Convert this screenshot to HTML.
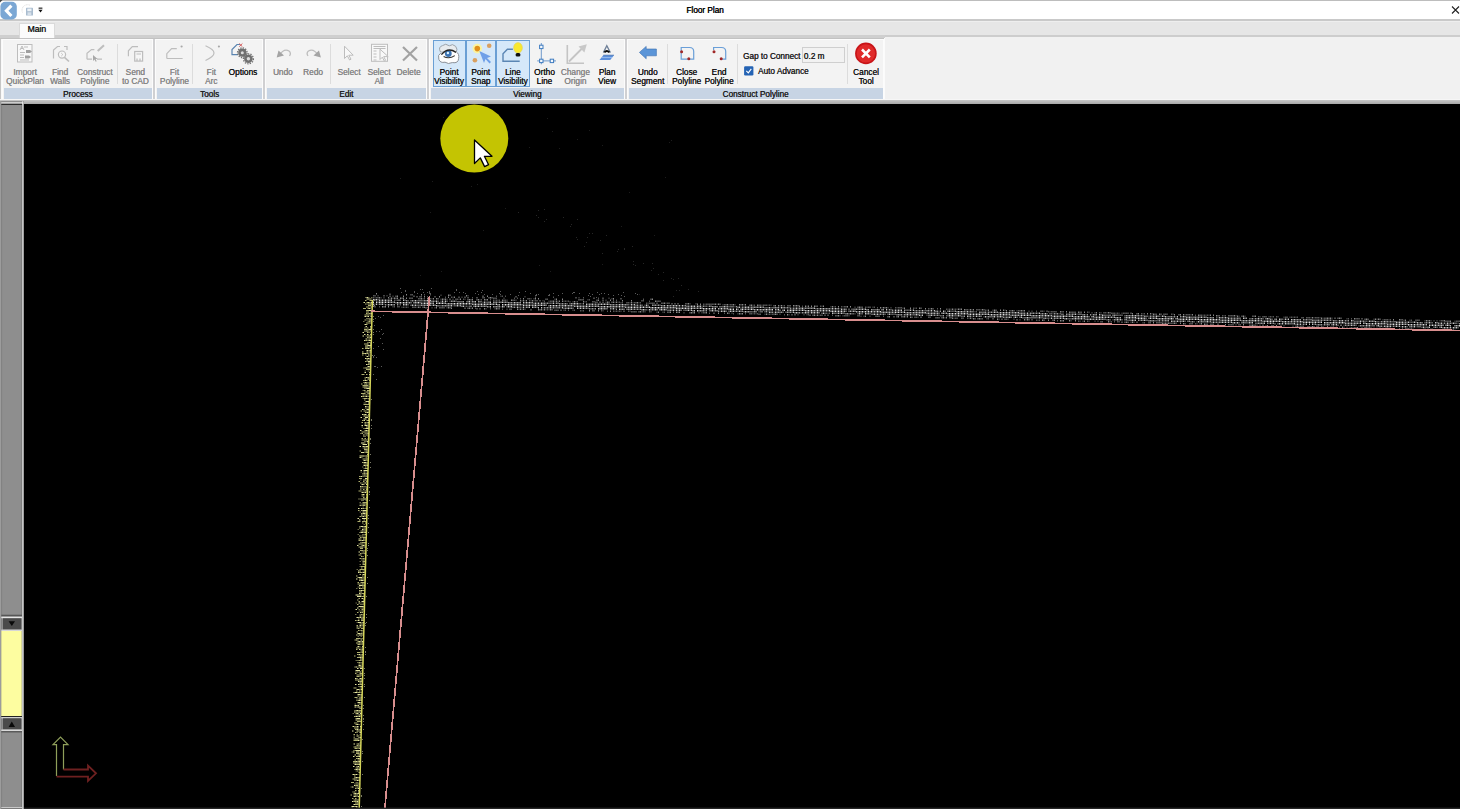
<!DOCTYPE html>
<html><head><meta charset="utf-8">
<style>
*{margin:0;padding:0;box-sizing:border-box}
html,body{width:1460px;height:809px;overflow:hidden;background:#000;font-family:"Liberation Sans",sans-serif}
.abs{position:absolute}
#title{position:absolute;left:0;top:0;width:1460px;height:19px;background:#fff;border-top:1px solid #bdbdbd}
#tline{position:absolute;left:0;top:19px;width:1460px;height:2px;background:#c9c9c9}
#tabs{position:absolute;left:0;top:21px;width:1460px;height:14px;background:#e6e6e6;border-top:1px solid #eeeeee}
#tabline{position:absolute;left:0;top:34.5px;width:885px;height:4px;background:#cfcfcf;border-bottom:0.6px solid #c2c2c2}
#tabline2{position:absolute;left:885px;top:34.8px;width:575px;height:2.2px;background:#cdcdcd}
#ribbon{position:absolute;left:0;top:37px;width:1460px;height:63px;background:#f1f1f1}
#rgray{position:absolute;left:2.5px;top:38px;width:881.5px;height:61px;background:#d0d0d2}
#wleft{position:absolute;left:0;top:35px;width:2.5px;height:66px;background:#f8f8f8;border-left:1px solid #c6c6c6}
#rbot{position:absolute;left:0;top:99px;width:1460px;height:5.2px;background:linear-gradient(#c8c8c8,#a8a8a8);border-top:1.6px solid #f6f6f6}
.grp{position:absolute;top:38.5px;height:60.5px;background:#f3f3f3;border:1px solid #fcfcfc;border-bottom:none}
.band{position:absolute;top:88px;height:10.5px;background:#c7d4e4;text-align:center;font-size:8.2px;line-height:13px;color:#1e1e1e;text-shadow:0.35px 0 0 #1e1e1e;white-space:nowrap}
.sep{position:absolute;top:44px;width:1px;height:40px;background:#dcdcdc}
.hl{position:absolute;top:39.9px;height:47.4px;background:#d5e8f9;border:1.5px solid #6a9fd4}
.lb{position:absolute;width:80px;text-align:center;white-space:nowrap;line-height:10px;text-shadow:0.25px 0 0 currentColor}
.ico{position:absolute;left:0;top:0}
#canvas{position:absolute;left:0;top:104px;width:1460px;height:705px;background:#000}
</style></head><body>
<div id="title"></div>
<div id="tline"></div>
<div id="tabs"></div>
<div id="ribbon"></div>
<div id="rgray"></div>
<div id="wleft"></div>
<div id="tabline"></div>
<div id="tabline2"></div>
<div id="rbot"></div>
<div class="abs" style="left:884px;top:38px;width:1px;height:61px;background:#fbfbfb"></div>
<div id="canvas"></div>
<div class="grp" style="left:2.0px;width:150.5px"></div>
<div class="band" style="left:4.0px;width:147.5px"><span>Process</span></div>
<div class="grp" style="left:155.0px;width:108.0px"></div>
<div class="band" style="left:157.0px;width:105.0px"><span>Tools</span></div>
<div class="grp" style="left:265.0px;width:161.5px"></div>
<div class="band" style="left:267.0px;width:158.5px"><span>Edit</span></div>
<div class="grp" style="left:428.5px;width:196.5px"></div>
<div class="band" style="left:430.5px;width:193.5px"><span>Viewing</span></div>
<div class="grp" style="left:626.5px;width:257.0px"></div>
<div class="band" style="left:628.5px;width:254.0px"><span>Construct Polyline</span></div>
<div class="sep" style="left:116.5px"></div>
<div class="sep" style="left:192.0px"></div>
<div class="sep" style="left:329.5px"></div>
<div class="sep" style="left:666.8px"></div>
<div class="sep" style="left:736.9px"></div>
<div class="sep" style="left:846.9px"></div>
<div class="hl" style="left:432.5px;width:33.0px"></div>
<div class="hl" style="left:465.5px;width:30.5px"></div>
<div class="hl" style="left:496.0px;width:33.5px"></div>
<div class="lb" style="left:-15.0px;top:66.9px;color:#868686;font-size:8.3px">Import</div>
<div class="lb" style="left:-15.0px;top:76.4px;color:#868686;font-size:8.3px">QuickPlan</div>
<div class="lb" style="left:20.0px;top:66.9px;color:#868686;font-size:8.3px">Find</div>
<div class="lb" style="left:20.0px;top:76.4px;color:#868686;font-size:8.3px">Walls</div>
<div class="lb" style="left:54.8px;top:66.9px;color:#868686;font-size:8.3px">Construct</div>
<div class="lb" style="left:54.8px;top:76.4px;color:#868686;font-size:8.3px">Polyline</div>
<div class="lb" style="left:95.3px;top:66.9px;color:#868686;font-size:8.3px">Send</div>
<div class="lb" style="left:95.3px;top:76.4px;color:#868686;font-size:8.3px">to CAD</div>
<div class="lb" style="left:134.4px;top:66.9px;color:#868686;font-size:8.3px">Fit</div>
<div class="lb" style="left:134.4px;top:76.4px;color:#868686;font-size:8.3px">Polyline</div>
<div class="lb" style="left:171.2px;top:66.9px;color:#868686;font-size:8.3px">Fit</div>
<div class="lb" style="left:171.2px;top:76.4px;color:#868686;font-size:8.3px">Arc</div>
<div class="lb" style="left:202.9px;top:66.9px;color:#141414;font-size:8.3px">Options</div>
<div class="lb" style="left:242.8px;top:66.9px;color:#868686;font-size:8.3px">Undo</div>
<div class="lb" style="left:273.0px;top:66.9px;color:#868686;font-size:8.3px">Redo</div>
<div class="lb" style="left:309.0px;top:66.9px;color:#868686;font-size:8.3px">Select</div>
<div class="lb" style="left:339.0px;top:66.9px;color:#868686;font-size:8.3px">Select</div>
<div class="lb" style="left:339.0px;top:76.4px;color:#868686;font-size:8.3px">All</div>
<div class="lb" style="left:368.6px;top:66.9px;color:#868686;font-size:8.3px">Delete</div>
<div class="lb" style="left:409.0px;top:66.9px;color:#141414;font-size:8.3px">Point</div>
<div class="lb" style="left:409.0px;top:76.4px;color:#141414;font-size:8.3px">Visibility</div>
<div class="lb" style="left:440.7px;top:66.9px;color:#141414;font-size:8.3px">Point</div>
<div class="lb" style="left:440.7px;top:76.4px;color:#141414;font-size:8.3px">Snap</div>
<div class="lb" style="left:472.8px;top:66.9px;color:#141414;font-size:8.3px">Line</div>
<div class="lb" style="left:472.8px;top:76.4px;color:#141414;font-size:8.3px">Visibility</div>
<div class="lb" style="left:504.4px;top:66.9px;color:#141414;font-size:8.3px">Ortho</div>
<div class="lb" style="left:504.4px;top:76.4px;color:#141414;font-size:8.3px">Line</div>
<div class="lb" style="left:535.3px;top:66.9px;color:#868686;font-size:8.3px">Change</div>
<div class="lb" style="left:535.3px;top:76.4px;color:#868686;font-size:8.3px">Origin</div>
<div class="lb" style="left:567.0px;top:66.9px;color:#141414;font-size:8.3px">Plan</div>
<div class="lb" style="left:567.0px;top:76.4px;color:#141414;font-size:8.3px">View</div>
<div class="lb" style="left:607.7px;top:66.9px;color:#141414;font-size:8.3px">Undo</div>
<div class="lb" style="left:607.7px;top:76.4px;color:#141414;font-size:8.3px">Segment</div>
<div class="lb" style="left:646.6px;top:66.9px;color:#141414;font-size:8.3px">Close</div>
<div class="lb" style="left:646.6px;top:76.4px;color:#141414;font-size:8.3px">Polyline</div>
<div class="lb" style="left:679.0px;top:66.9px;color:#141414;font-size:8.3px">End</div>
<div class="lb" style="left:679.0px;top:76.4px;color:#141414;font-size:8.3px">Polyline</div>
<div class="lb" style="left:826.0px;top:66.9px;color:#141414;font-size:8.3px">Cancel</div>
<div class="lb" style="left:826.0px;top:76.4px;color:#141414;font-size:8.3px">Tool</div>

<svg class="ico" width="1460" height="104" viewBox="0 0 1460 104">
 <!-- Import QuickPlan -->
 <g fill="none" stroke="#bdbdbd" stroke-width="1">
  <rect x="17.5" y="44.5" width="14.5" height="17.5" fill="#f8f8f8"/>
  <path d="M20 50 l2 -4 l2 4 M21 48.5h2 M24 47h4 M20 52.5h5 M20 55h4 M20 57.5h4 M20 60h9"/>
 </g>
 <path d="M26 50h4l2 1.5l-2 1.5h-4z M25 55.5h4l2 1.5l-2 1.5h-4z" fill="#a0a0a0"/>
 <!-- Find Walls -->
 <g fill="none" stroke="#bdbdbd" stroke-width="1.2">
  <path d="M53.5 58.5 V50 L57.5 46.5 H60 M64 46.5 H67 V50"/>
  <circle cx="62" cy="54.6" r="3.6" fill="#f6f6f6"/>
  <path d="M64.5 57.3 L69 61.5" stroke-width="1.6"/>
  <path d="M61.2 53 l1.6 1.6 l-1.6 1.6" stroke-width="0.9"/>
 </g>
 <!-- Construct Polyline -->
 <g fill="none" stroke="#bdbdbd" stroke-width="1.2">
  <path d="M87 59.2 V53.4 L91.5 49.6 H94.4 M87 59.2 H92 M97 59.2 H102"/>
  <path d="M97.7 51 L104 45.3" stroke-width="2"/>
 </g>
 <path d="M93 55 v6 l1.5-1.5 l1.2 2.2 l1-.5 l-1.1-2.1 h2z" fill="#a8a8a8"/>
 <!-- Send to CAD -->
 <g fill="none" stroke="#bdbdbd" stroke-width="1.2">
  <path d="M128.4 56.3 V50.8 L132.3 46.7 H138"/>
  <rect x="134.7" y="51.5" width="7.9" height="9.6" fill="#f6f6f6"/>
  <path d="M136.5 54h4.5 M137 58.5v2.6 M140 58.5v2.6"/>
 </g>
 <!-- Fit Polyline -->
 <g fill="none" stroke="#bdbdbd" stroke-width="1.2">
  <path d="M166.8 58.5 V53.7 L171.6 48.6 H176.8 M166.8 58.5 H182.6"/>
 </g>
 <circle cx="181.6" cy="46.5" r="1.1" fill="#a8a8a8"/>
 <!-- Fit Arc -->
 <path d="M205.5 45.8 Q222.5 53 205.5 60.5" fill="none" stroke="#bdbdbd" stroke-width="1.2"/>
 <circle cx="218.9" cy="46.5" r="1.1" fill="#a8a8a8"/>
 <!-- Options -->
 <path d="M238 54.7 H232 V49.6 L237 44.5 H240" fill="none" stroke="#5a84b0" stroke-width="1.2"/>
 <path d="M239.2 43.5 l3.2 3.2 M242.4 43.5 l-3.2 3.2" stroke="#d05050" stroke-width="0.9"/>
 <g fill="#707070">
  <circle cx="242.3" cy="52.7" r="4.1"/>
  <circle cx="248.4" cy="58.8" r="4.3"/>
 </g>
 <g stroke="#707070" stroke-width="1.3" stroke-dasharray="1.3 1.2" fill="none">
  <circle cx="242.3" cy="52.7" r="4.8"/>
  <circle cx="248.4" cy="58.8" r="5"/>
 </g>
 <circle cx="242.3" cy="52.7" r="1.5" fill="#dcdcdc"/>
 <circle cx="248.4" cy="58.8" r="1.7" fill="#dcdcdc"/>
 <!-- Undo / Redo -->
 <g fill="none" stroke="#bdbdbd" stroke-width="1.3">
  <path d="M279 55.5 Q284 48 289 51 Q291.5 53 289.5 56"/>
  <path d="M318.5 55.5 Q313.5 48 308.5 51 Q306 53 308 56"/>
 </g>
 <path d="M276.7 57.5 L278.5 50.5 L284 55.5z" fill="#a4a4a4"/>
 <path d="M320.9 57.5 L319 50.5 L313.5 55.5z" fill="#a4a4a4"/>
 <!-- Select -->
 <path d="M344.5 46.2 V58.5 L347.3 55.8 L349.6 60 L351 59.2 L348.8 55.2 H353.2z" fill="#f8f8f8" stroke="#bdbdbd" stroke-width="1"/>
 <!-- Select All -->
 <g fill="none" stroke="#bdbdbd" stroke-width="1">
  <rect x="371.5" y="44.3" width="16" height="17" fill="#f8f8f8"/>
  <path d="M373.5 46.5h12 M373.5 48.5h12 M373.5 51h3 M373.5 54h3 M373.5 57h3 M373.5 60h3"/>
  <path d="M380 49.2 V59.5 L382.3 57.2 L384.3 61 L385.6 60.3 L383.7 56.6 H388.2z" fill="#f8f8f8"/>
 </g>
 <!-- Delete -->
 <path d="M403 47 L417 60.5 M417 47 L403 60.5" stroke="#a2a2a2" stroke-width="2.2"/>
 <!-- Point Visibility -->
 <path d="M440.5 52 Q437.8 47 442.5 45.6 Q445.5 42.8 449.3 45.8 Q452.5 43.2 455.6 46.3 Q458 49 456.2 52.5z" fill="#e8ebee" stroke="#9aa2aa" stroke-width="1"/>
 <path d="M441.2 52.6 Q437.2 55 438.8 59.3 Q440.2 63.3 445 62.2 Q448.3 64.6 452.3 62.6 Q458.3 63.6 458.6 58.6 Q459.6 54 456.3 51.8" fill="#fdfdfd" stroke="#8a9098" stroke-width="1"/>
 <circle cx="448.3" cy="53.6" r="3.4" fill="#3a72b2"/>
 <circle cx="447.9" cy="53" r="1.2" fill="#dff4ff"/>
 <path d="M441.4 54.6 Q448 46.8 456 52.4" fill="none" stroke="#222" stroke-width="1.4"/>
 <path d="M443.6 56.4 Q449 59.4 454.8 55.6" fill="none" stroke="#333" stroke-width="1.1"/>
 <!-- Point Snap -->
 <circle cx="477.3" cy="48.6" r="4.8" fill="#fbf3a0"/>
 <circle cx="477.3" cy="48.6" r="2.8" fill="#e0901c"/>
 <circle cx="489.2" cy="45.8" r="2.3" fill="#d9a060"/>
 <circle cx="474.9" cy="60.2" r="2.3" fill="#d9a060"/>
 <path d="M479.3 51 L484 63 L485.5 59 L489.5 63.5 L491 62 L487 58 L491 56.5z" fill="#6fa0e8"/>
 <!-- Line Visibility -->
 <path d="M512.9 49.2 H507.4 L503 53.7 V61.2 H519.7" fill="none" stroke="#5a86b4" stroke-width="1.4"/>
 <ellipse cx="518" cy="47.8" rx="4.4" ry="5.2" fill="#f8e830" stroke="#e0d060" stroke-width="0.6"/>
 <rect x="515.6" y="53" width="4.8" height="3.4" rx="1.5" fill="#111"/>
 <!-- Ortho Line -->
 <path d="M541.3 43 V64.3 M537.2 60.9 H556" stroke="#5f8fc6" stroke-width="0.9" fill="none"/>
 <g fill="#f4f8fc" stroke="#3f7cc0" stroke-width="1">
  <rect x="539.6" y="45.2" width="3.4" height="3.4"/>
  <rect x="539.6" y="59.2" width="3.4" height="3.4"/>
  <rect x="550.2" y="59.2" width="3.4" height="3.4"/>
 </g>
 <!-- Change Origin -->
 <path d="M567.3 45 V63.2 H584" fill="none" stroke="#c4c4c4" stroke-width="1.6"/>
 <path d="M569 61.5 L582 48.5" stroke="#c4c4c4" stroke-width="1.8"/>
 <path d="M586.8 44.2 L578.5 46.6 L584.4 52.5z" fill="#c8c8c8"/>
 <!-- Plan View -->
 <path d="M603.4 52.6 L606.8 45.7 L610.4 52.6" fill="none" stroke="#6f8098" stroke-width="1.3"/>
 <path d="M604.4 52.4 Q606.8 49.6 609.4 52.4" fill="none" stroke="#0c0c0c" stroke-width="1.8"/>
 <path d="M599.5 59.9 L603.3 55.2 H614 L610.2 59.9z" fill="#5b8fdc"/>
 <path d="M601.6 57.5 H612" stroke="#a8c8f0" stroke-width="0.7"/>
 <path d="M603.3 55.2 H614" stroke="#3a66a8" stroke-width="0.7"/>
 <!-- Undo Segment -->
 <path d="M639.4 52.4 L646.2 46.4 V49 H656.4 V55.8 H646.2 V58.8z" fill="#5b95d8" stroke="#3a6fb0" stroke-width="0.6"/>
 <!-- Close Polyline -->
 <path d="M681.2 47.5 H689.5 Q693.7 47.5 693.7 51.5 V59.2 H681.2z" fill="none" stroke="#6a9fd8" stroke-width="1.2"/>
 <circle cx="681.6" cy="51.7" r="1.5" fill="#a02828"/>
 <circle cx="688.8" cy="58.8" r="1.5" fill="#a02828"/>
 <!-- End Polyline -->
 <path d="M713.6 50 V47.5 H721.5 Q725.7 47.5 725.7 51.5 V59.2 H722" fill="none" stroke="#6a9fd8" stroke-width="1.2"/>
 <circle cx="714" cy="51.7" r="1.5" fill="#a02828"/>
 <circle cx="721.2" cy="58.8" r="1.5" fill="#a02828"/>
 <!-- Checkbox -->
 <rect x="744.1" y="66.2" width="9.3" height="9.2" rx="1.2" fill="#2463b4"/>
 <path d="M746.3 70.8 L748.3 72.8 L751.3 68.8" fill="none" stroke="#fff" stroke-width="1.1"/>
 <!-- Cancel -->
 <circle cx="865.9" cy="53.4" r="10.8" fill="#c81418"/>
 <circle cx="865.9" cy="53.4" r="9.2" fill="#e02a2a"/>
 <path d="M862 49.5 L869.8 57.3 M869.8 49.5 L862 57.3" stroke="#fff" stroke-width="2.6"/>
</svg>


<svg class="ico" width="1460" height="809" viewBox="0 0 1460 809" style="left:0;top:0">
<defs><clipPath id="cv"><rect x="24" y="104" width="1436" height="705"/></clipPath></defs>
<g clip-path="url(#cv)">
<path fill="#555555" d="M373 295h1v1.5h-1zM373 297h1v1.5h-1zM374.5 297h1v1.5h-1zM376 297h1v1.5h-1zM377.5 295h1v1.5h-1zM379 306h1v1.5h-1zM380.5 297h1v1.5h-1zM383.5 297h1v1.5h-1zM386.5 295h1v1.5h-1zM389.5 297.5h1v1.5h-1zM392.5 295.5h1v1.5h-1zM392.5 297.5h1v1.5h-1zM392.5 306h1v1.5h-1zM394 306h1v1.5h-1zM397 306h1v1.5h-1zM401.5 306.5h1v1.5h-1zM403 306.5h1v1.5h-1zM404.5 306.5h1v1.5h-1zM406 306.5h1v1.5h-1zM407.5 306.5h1v1.5h-1zM409 297.5h1v1.5h-1zM412 294h1v1.5h-1zM412 297.5h1v1.5h-1zM412 306.5h1v1.5h-1zM415 306.5h1v1.5h-1zM416.5 306.5h1v1.5h-1zM418 298h1v1.5h-1zM421 296h1v1.5h-1zM422.5 298h1v1.5h-1zM424 294h1v1.5h-1zM424 298h1v1.5h-1zM427 296h1v1.5h-1zM427 307h1v1.5h-1zM430 294h1v1.5h-1zM430 298h1v1.5h-1zM431.5 298h1v1.5h-1zM431.5 307h1v1.5h-1zM434.5 307h1v1.5h-1zM439 307h1v1.5h-1zM440.5 294.5h1v1.5h-1zM440.5 298.5h1v1.5h-1zM442 307h1v1.5h-1zM445 296.5h1v1.5h-1zM446.5 298.5h1v1.5h-1zM446.5 307h1v1.5h-1zM451 296.5h1v1.5h-1zM452.5 296.5h1v1.5h-1zM452.5 298.5h1v1.5h-1zM457 298.5h1v1.5h-1zM458.5 298.5h1v1.5h-1zM461.5 296.5h1v1.5h-1zM463 298.5h1v1.5h-1zM464.5 298.5h1v1.5h-1zM467.5 295h1v1.5h-1zM470.5 307.5h1v1.5h-1zM472 297h1v1.5h-1zM475 307.5h1v1.5h-1zM479.5 299h1v1.5h-1zM481 299h1v1.5h-1zM484 297h1v1.5h-1zM485.5 308h1v1.5h-1zM490 299h1v1.5h-1zM490 308h1v1.5h-1zM493 297.5h1v1.5h-1zM493 299.5h1v1.5h-1zM494.5 299.5h1v1.5h-1zM494.5 308h1v1.5h-1zM496 295.5h1v1.5h-1zM496 297.5h1v1.5h-1zM496 299.5h1v1.5h-1zM497.5 299.5h1v1.5h-1zM499 299.5h1v1.5h-1zM499 308h1v1.5h-1zM500.5 295.5h1v1.5h-1zM502 295.5h1v1.5h-1zM502 308.5h1v1.5h-1zM503.5 297.5h1v1.5h-1zM505 295.5h1v1.5h-1zM505 299.5h1v1.5h-1zM506.5 299.5h1v1.5h-1zM506.5 308.5h1v1.5h-1zM511 308.5h1v1.5h-1zM514 297.5h1v1.5h-1zM514 299.5h1v1.5h-1zM515.5 299.5h1v1.5h-1zM517 297.5h1v1.5h-1zM518.5 308.5h1v1.5h-1zM520 298h1v1.5h-1zM521.5 300h1v1.5h-1zM521.5 308.5h1v1.5h-1zM524.5 296h1v1.5h-1zM524.5 300h1v1.5h-1zM524.5 308.5h1v1.5h-1zM529 298h1v1.5h-1zM529 300h1v1.5h-1zM530.5 298h1v1.5h-1zM530.5 300h1v1.5h-1zM533.5 298h1v1.5h-1zM533.5 300h1v1.5h-1zM535 296.5h1v1.5h-1zM535 300h1v1.5h-1zM542.5 300h1v1.5h-1zM542.5 309h1v1.5h-1zM544 300.5h1v1.5h-1zM545.5 309h1v1.5h-1zM547 298.5h1v1.5h-1zM547 309h1v1.5h-1zM548.5 300.5h1v1.5h-1zM548.5 309h1v1.5h-1zM550 300.5h1v1.5h-1zM553 296.5h1v1.5h-1zM554.5 298.5h1v1.5h-1zM554.5 300.5h1v1.5h-1zM556 309.5h1v1.5h-1zM557.5 300.5h1v1.5h-1zM563.5 300.5h1v1.5h-1zM563.5 309.5h1v1.5h-1zM565 300.5h1v1.5h-1zM565 309.5h1v1.5h-1zM566.5 300.5h1v1.5h-1zM568 300.5h1v1.5h-1zM568 309.5h1v1.5h-1zM569.5 301h1v1.5h-1zM572.5 301h1v1.5h-1zM572.5 309.5h1v1.5h-1zM574 309.5h1v1.5h-1zM575.5 301h1v1.5h-1zM577 301h1v1.5h-1zM578.5 297h1v1.5h-1zM580 299h1v1.5h-1zM580 310h1v1.5h-1zM581.5 310h1v1.5h-1zM583 297h1v1.5h-1zM583 299h1v1.5h-1zM583 310h1v1.5h-1zM584.5 301h1v1.5h-1zM586 301h1v1.5h-1zM587.5 299h1v1.5h-1zM589 299h1v1.5h-1zM592 301h1v1.5h-1zM592 310h1v1.5h-1zM595 301.5h1v1.5h-1zM598 297.5h1v1.5h-1zM601 310h1v1.5h-1zM602.5 310h1v1.5h-1zM605.5 299.5h1v1.5h-1zM605.5 301.5h1v1.5h-1zM607 310.5h1v1.5h-1zM608.5 297.5h1v1.5h-1zM611.5 298h1v1.5h-1zM613 299.5h1v1.5h-1zM613 310.5h1v1.5h-1zM614.5 301.5h1v1.5h-1zM614.5 310.5h1v1.5h-1zM616 299.5h1v1.5h-1zM616 310.5h1v1.5h-1zM617.5 301.5h1v1.5h-1zM617.5 310.5h1v1.5h-1zM619 301.5h1v1.5h-1zM619 310.5h1v1.5h-1zM620.5 302h1v1.5h-1zM620.5 310.5h1v1.5h-1zM622 302h1v1.5h-1zM628 302h1v1.5h-1zM628 310.5h1v1.5h-1zM629.5 302h1v1.5h-1zM629.5 310.5h1v1.5h-1zM631 311h1v1.5h-1zM632.5 302h1v1.5h-1zM634 302h1v1.5h-1zM634 311h1v1.5h-1zM638.5 302h1v1.5h-1zM640 302h1v1.5h-1zM641.5 311h1v1.5h-1zM643 298.5h1v1.5h-1zM643 300h1v1.5h-1zM643 311h1v1.5h-1zM644.5 311h1v1.5h-1zM646 302.5h1v1.5h-1zM647.5 302.5h1v1.5h-1zM649 300.5h1v1.5h-1zM649 302.5h1v1.5h-1zM649 311h1v1.5h-1zM650.5 311h1v1.5h-1zM652 302.5h1v1.5h-1zM656.5 311.5h1v1.5h-1zM658 300.5h1v1.5h-1zM661 302.5h1v1.5h-1zM662.5 311.5h1v1.5h-1zM664 311.5h1v1.5h-1zM665.5 302.5h1v1.5h-1zM667 302.5h1v1.5h-1zM667 311.5h1v1.5h-1zM673 311.5h1v1.5h-1zM683.5 312h1v1.5h-1zM685 303h1v1.5h-1zM689.5 303h1v1.5h-1zM695.5 303h1v1.5h-1zM698.5 312h1v1.5h-1zM701.5 312h1v1.5h-1zM703 303.5h1v1.5h-1zM703 312h1v1.5h-1zM704.5 303.5h1v1.5h-1zM706 303.5h1v1.5h-1zM709 303.5h1v1.5h-1zM709 312.5h1v1.5h-1zM712 303.5h1v1.5h-1zM716.5 303.5h1v1.5h-1zM722.5 304h1v1.5h-1zM724 304h1v1.5h-1zM724 312.5h1v1.5h-1zM728.5 304h1v1.5h-1zM730 304h1v1.5h-1zM731.5 312.5h1v1.5h-1zM733 313h1v1.5h-1zM734.5 304h1v1.5h-1zM737.5 313h1v1.5h-1zM743.5 304h1v1.5h-1zM745 313h1v1.5h-1zM751 313h1v1.5h-1zM752.5 304.5h1v1.5h-1zM752.5 313h1v1.5h-1zM754 304.5h1v1.5h-1zM754 313h1v1.5h-1zM755.5 313h1v1.5h-1zM757 313h1v1.5h-1zM760 304.5h1v1.5h-1zM760 313.5h1v1.5h-1zM761.5 304.5h1v1.5h-1zM763 304.5h1v1.5h-1zM764.5 313.5h1v1.5h-1zM766 304.5h1v1.5h-1zM767.5 304.5h1v1.5h-1zM767.5 313.5h1v1.5h-1zM769 304.5h1v1.5h-1zM769 313.5h1v1.5h-1zM770.5 304.5h1v1.5h-1zM770.5 313.5h1v1.5h-1zM772 313.5h1v1.5h-1zM779.5 305h1v1.5h-1zM779.5 313.5h1v1.5h-1zM782.5 305h1v1.5h-1zM784 305h1v1.5h-1zM784 314h1v1.5h-1zM787 305h1v1.5h-1zM788.5 314h1v1.5h-1zM790 305h1v1.5h-1zM797.5 314h1v1.5h-1zM802 305.5h1v1.5h-1zM803.5 314h1v1.5h-1zM806.5 305.5h1v1.5h-1zM806.5 314h1v1.5h-1zM808 314h1v1.5h-1zM815.5 314.5h1v1.5h-1zM817 305.5h1v1.5h-1zM818.5 314.5h1v1.5h-1zM820 305.5h1v1.5h-1zM820 314.5h1v1.5h-1zM821.5 305.5h1v1.5h-1zM830.5 306h1v1.5h-1zM832 314.5h1v1.5h-1zM833.5 306h1v1.5h-1zM835 306h1v1.5h-1zM835 315h1v1.5h-1zM839.5 315h1v1.5h-1zM841 306h1v1.5h-1zM842.5 306h1v1.5h-1zM842.5 315h1v1.5h-1zM844 306h1v1.5h-1zM844 315h1v1.5h-1zM847 315h1v1.5h-1zM848.5 315h1v1.5h-1zM854.5 306.5h1v1.5h-1zM859 315h1v1.5h-1zM860.5 315.5h1v1.5h-1zM862 306.5h1v1.5h-1zM863.5 315.5h1v1.5h-1zM865 306.5h1v1.5h-1zM866.5 306.5h1v1.5h-1zM868 306.5h1v1.5h-1zM869.5 315.5h1v1.5h-1zM872.5 306.5h1v1.5h-1zM874 306.5h1v1.5h-1zM877 307h1v1.5h-1zM877 315.5h1v1.5h-1zM881.5 307h1v1.5h-1zM883 315.5h1v1.5h-1zM887.5 307h1v1.5h-1zM890.5 307h1v1.5h-1zM895 307h1v1.5h-1zM896.5 307h1v1.5h-1zM898 307h1v1.5h-1zM901 307h1v1.5h-1zM901 316h1v1.5h-1zM902.5 307.5h1v1.5h-1zM905.5 316h1v1.5h-1zM913 307.5h1v1.5h-1zM914.5 307.5h1v1.5h-1zM916 307.5h1v1.5h-1zM916 316.5h1v1.5h-1zM917.5 316.5h1v1.5h-1zM928 308h1v1.5h-1zM928 316.5h1v1.5h-1zM929.5 308h1v1.5h-1zM937 308h1v1.5h-1zM937 317h1v1.5h-1zM944.5 317h1v1.5h-1zM946 308.5h1v1.5h-1zM947.5 308.5h1v1.5h-1zM949 308.5h1v1.5h-1zM949 317h1v1.5h-1zM950.5 308.5h1v1.5h-1zM953.5 308.5h1v1.5h-1zM953.5 317.5h1v1.5h-1zM955 308.5h1v1.5h-1zM955 317.5h1v1.5h-1zM956.5 308.5h1v1.5h-1zM961 317.5h1v1.5h-1zM967 309h1v1.5h-1zM967 317.5h1v1.5h-1zM968.5 309h1v1.5h-1zM968.5 317.5h1v1.5h-1zM971.5 309h1v1.5h-1zM971.5 317.5h1v1.5h-1zM976 309h1v1.5h-1zM979 309h1v1.5h-1zM980.5 309h1v1.5h-1zM982 318h1v1.5h-1zM985 309.5h1v1.5h-1zM986.5 309.5h1v1.5h-1zM986.5 318h1v1.5h-1zM988 318h1v1.5h-1zM992.5 309.5h1v1.5h-1zM998.5 318.5h1v1.5h-1zM1004.5 309.5h1v1.5h-1zM1006 318.5h1v1.5h-1zM1007.5 318.5h1v1.5h-1zM1009 310h1v1.5h-1zM1013.5 318.5h1v1.5h-1zM1016.5 310h1v1.5h-1zM1018 310h1v1.5h-1zM1019.5 319h1v1.5h-1zM1025.5 319h1v1.5h-1zM1028.5 310.5h1v1.5h-1zM1031.5 310.5h1v1.5h-1zM1036 310.5h1v1.5h-1zM1036 319.5h1v1.5h-1zM1037.5 319.5h1v1.5h-1zM1039 319.5h1v1.5h-1zM1042 310.5h1v1.5h-1zM1043.5 310.5h1v1.5h-1zM1048 311h1v1.5h-1zM1049.5 311h1v1.5h-1zM1051 311h1v1.5h-1zM1054 311h1v1.5h-1zM1057 320h1v1.5h-1zM1063 311h1v1.5h-1zM1070.5 320h1v1.5h-1zM1072 311.5h1v1.5h-1zM1075 311.5h1v1.5h-1zM1078 320.5h1v1.5h-1zM1079.5 320.5h1v1.5h-1zM1081 311.5h1v1.5h-1zM1082.5 320.5h1v1.5h-1zM1087 311.5h1v1.5h-1zM1087 320.5h1v1.5h-1zM1088.5 311.5h1v1.5h-1zM1088.5 320.5h1v1.5h-1zM1091.5 312h1v1.5h-1zM1094.5 312h1v1.5h-1zM1094.5 320.5h1v1.5h-1zM1097.5 320.5h1v1.5h-1zM1099 312h1v1.5h-1zM1100.5 312h1v1.5h-1zM1102 321h1v1.5h-1zM1105 312h1v1.5h-1zM1106.5 312h1v1.5h-1zM1109.5 321h1v1.5h-1zM1111 312.5h1v1.5h-1zM1111 321h1v1.5h-1zM1114 312.5h1v1.5h-1zM1114 321h1v1.5h-1zM1115.5 312.5h1v1.5h-1zM1117 312.5h1v1.5h-1zM1117 321h1v1.5h-1zM1118.5 312.5h1v1.5h-1zM1121.5 312.5h1v1.5h-1zM1123 312.5h1v1.5h-1zM1126 312.5h1v1.5h-1zM1130.5 321.5h1v1.5h-1zM1133.5 321.5h1v1.5h-1zM1141 313h1v1.5h-1zM1142.5 313h1v1.5h-1zM1142.5 322h1v1.5h-1zM1144 313h1v1.5h-1zM1144 322h1v1.5h-1zM1150 322h1v1.5h-1zM1151.5 313h1v1.5h-1zM1156 313.5h1v1.5h-1zM1156 322h1v1.5h-1zM1159 322h1v1.5h-1zM1165 313.5h1v1.5h-1zM1171 313.5h1v1.5h-1zM1171 322.5h1v1.5h-1zM1172.5 313.5h1v1.5h-1zM1184.5 314h1v1.5h-1zM1186 314h1v1.5h-1zM1189 314h1v1.5h-1zM1189 323h1v1.5h-1zM1190.5 314h1v1.5h-1zM1192 323h1v1.5h-1zM1195 314.5h1v1.5h-1zM1195 323h1v1.5h-1zM1196.5 323h1v1.5h-1zM1199.5 323h1v1.5h-1zM1201 314.5h1v1.5h-1zM1202.5 314.5h1v1.5h-1zM1204 314.5h1v1.5h-1zM1205.5 314.5h1v1.5h-1zM1207 314.5h1v1.5h-1zM1207 323.5h1v1.5h-1zM1208.5 314.5h1v1.5h-1zM1210 323.5h1v1.5h-1zM1213 323.5h1v1.5h-1zM1219 315h1v1.5h-1zM1222 315h1v1.5h-1zM1223.5 315h1v1.5h-1zM1225 315h1v1.5h-1zM1228 315h1v1.5h-1zM1228 324h1v1.5h-1zM1231 315h1v1.5h-1zM1231 324h1v1.5h-1zM1235.5 315h1v1.5h-1zM1235.5 324h1v1.5h-1zM1238.5 315.5h1v1.5h-1zM1240 324h1v1.5h-1zM1244.5 315.5h1v1.5h-1zM1249 324.5h1v1.5h-1zM1252 315.5h1v1.5h-1zM1255 324.5h1v1.5h-1zM1256.5 324.5h1v1.5h-1zM1258 316h1v1.5h-1zM1259.5 316h1v1.5h-1zM1259.5 324.5h1v1.5h-1zM1264 316h1v1.5h-1zM1265.5 325h1v1.5h-1zM1268.5 316h1v1.5h-1zM1270 316h1v1.5h-1zM1271.5 316h1v1.5h-1zM1273 316h1v1.5h-1zM1273 325h1v1.5h-1zM1276 316h1v1.5h-1zM1277.5 316h1v1.5h-1zM1280.5 325h1v1.5h-1zM1283.5 316.5h1v1.5h-1zM1283.5 325h1v1.5h-1zM1285 316.5h1v1.5h-1zM1289.5 316.5h1v1.5h-1zM1291 316.5h1v1.5h-1zM1292.5 316.5h1v1.5h-1zM1292.5 325.5h1v1.5h-1zM1294 316.5h1v1.5h-1zM1295.5 316.5h1v1.5h-1zM1297 316.5h1v1.5h-1zM1298.5 325.5h1v1.5h-1zM1300 325.5h1v1.5h-1zM1303 317h1v1.5h-1zM1303 325.5h1v1.5h-1zM1306 317h1v1.5h-1zM1309 317h1v1.5h-1zM1309 326h1v1.5h-1zM1310.5 317h1v1.5h-1zM1310.5 326h1v1.5h-1zM1313.5 317h1v1.5h-1zM1315 317h1v1.5h-1zM1318 317h1v1.5h-1zM1318 326h1v1.5h-1zM1319.5 317h1v1.5h-1zM1321 326h1v1.5h-1zM1322.5 317.5h1v1.5h-1zM1322.5 326h1v1.5h-1zM1324 317.5h1v1.5h-1zM1330 326.5h1v1.5h-1zM1331.5 317.5h1v1.5h-1zM1336 326.5h1v1.5h-1zM1339 326.5h1v1.5h-1zM1343.5 326.5h1v1.5h-1zM1346.5 318h1v1.5h-1zM1346.5 326.5h1v1.5h-1zM1348 318h1v1.5h-1zM1349.5 327h1v1.5h-1zM1351 318h1v1.5h-1zM1351 327h1v1.5h-1zM1352.5 327h1v1.5h-1zM1354 327h1v1.5h-1zM1357 318h1v1.5h-1zM1361.5 327h1v1.5h-1zM1366 327h1v1.5h-1zM1367.5 327h1v1.5h-1zM1369 327h1v1.5h-1zM1373.5 318.5h1v1.5h-1zM1373.5 327.5h1v1.5h-1zM1376.5 318.5h1v1.5h-1zM1376.5 327.5h1v1.5h-1zM1382.5 319h1v1.5h-1zM1382.5 327.5h1v1.5h-1zM1384 319h1v1.5h-1zM1387 319h1v1.5h-1zM1388.5 319h1v1.5h-1zM1388.5 327.5h1v1.5h-1zM1390 319h1v1.5h-1zM1390 327.5h1v1.5h-1zM1391.5 328h1v1.5h-1zM1399 328h1v1.5h-1zM1402 319h1v1.5h-1zM1402 328h1v1.5h-1zM1403.5 319.5h1v1.5h-1zM1405 328h1v1.5h-1zM1408 328h1v1.5h-1zM1409.5 319.5h1v1.5h-1zM1409.5 328h1v1.5h-1zM1411 319.5h1v1.5h-1zM1411 328h1v1.5h-1zM1412.5 328.5h1v1.5h-1zM1417 319.5h1v1.5h-1zM1423 328.5h1v1.5h-1zM1424.5 320h1v1.5h-1zM1430.5 320h1v1.5h-1zM1432 328.5h1v1.5h-1zM1433.5 320h1v1.5h-1zM1435 329h1v1.5h-1zM1436.5 320h1v1.5h-1zM1439.5 320h1v1.5h-1zM1439.5 329h1v1.5h-1zM1441 320h1v1.5h-1zM1441 329h1v1.5h-1zM1445.5 329h1v1.5h-1zM1447 320.5h1v1.5h-1zM1450 329h1v1.5h-1zM1451.5 329h1v1.5h-1zM1453 329h1v1.5h-1zM1454.5 320.5h1v1.5h-1zM1454.5 329.5h1v1.5h-1zM1456 320.5h1v1.5h-1zM1459 320.5h1v1.5h-1z"/>
<path fill="#c8c8c8" d="M373 299h1v1.5h-1zM373 303.5h1v1.5h-1zM374.5 299h1v1.5h-1zM376 299h1v1.5h-1zM376 303.5h1v1.5h-1zM379 299.5h1v1.5h-1zM380.5 303.5h1v1.5h-1zM382 299.5h1v1.5h-1zM382 303.5h1v1.5h-1zM385 299.5h1v1.5h-1zM388 304h1v1.5h-1zM389.5 299.5h1v1.5h-1zM389.5 304h1v1.5h-1zM391 299.5h1v1.5h-1zM391 304h1v1.5h-1zM392.5 304h1v1.5h-1zM398.5 299.5h1v1.5h-1zM403 299.5h1v1.5h-1zM403 304h1v1.5h-1zM404.5 304h1v1.5h-1zM406 304h1v1.5h-1zM412 304.5h1v1.5h-1zM415 300h1v1.5h-1zM415 304.5h1v1.5h-1zM419.5 300h1v1.5h-1zM422.5 304.5h1v1.5h-1zM425.5 300h1v1.5h-1zM425.5 304.5h1v1.5h-1zM427 300h1v1.5h-1zM427 304.5h1v1.5h-1zM428.5 300h1v1.5h-1zM430 300h1v1.5h-1zM431.5 300.5h1v1.5h-1zM433 304.5h1v1.5h-1zM434.5 304.5h1v1.5h-1zM436 300.5h1v1.5h-1zM436 305h1v1.5h-1zM437.5 305h1v1.5h-1zM442 300.5h1v1.5h-1zM443.5 305h1v1.5h-1zM445 300.5h1v1.5h-1zM446.5 305h1v1.5h-1zM449.5 305h1v1.5h-1zM451 305h1v1.5h-1zM452.5 300.5h1v1.5h-1zM457 305h1v1.5h-1zM458.5 301h1v1.5h-1zM461.5 301h1v1.5h-1zM461.5 305.5h1v1.5h-1zM463 305.5h1v1.5h-1zM467.5 301h1v1.5h-1zM469 301h1v1.5h-1zM470.5 305.5h1v1.5h-1zM473.5 301h1v1.5h-1zM473.5 305.5h1v1.5h-1zM475 301h1v1.5h-1zM475 305.5h1v1.5h-1zM476.5 305.5h1v1.5h-1zM478 305.5h1v1.5h-1zM479.5 301h1v1.5h-1zM482.5 305.5h1v1.5h-1zM484 301.5h1v1.5h-1zM485.5 305.5h1v1.5h-1zM488.5 301.5h1v1.5h-1zM490 301.5h1v1.5h-1zM490 306h1v1.5h-1zM494.5 301.5h1v1.5h-1zM494.5 306h1v1.5h-1zM497.5 306h1v1.5h-1zM500.5 301.5h1v1.5h-1zM502 301.5h1v1.5h-1zM502 306h1v1.5h-1zM503.5 301.5h1v1.5h-1zM503.5 306h1v1.5h-1zM506.5 301.5h1v1.5h-1zM508 306h1v1.5h-1zM509.5 302h1v1.5h-1zM509.5 306h1v1.5h-1zM511 306h1v1.5h-1zM514 302h1v1.5h-1zM515.5 302h1v1.5h-1zM517 306.5h1v1.5h-1zM518.5 302h1v1.5h-1zM523 302h1v1.5h-1zM523 306.5h1v1.5h-1zM526 302h1v1.5h-1zM527.5 302h1v1.5h-1zM527.5 306.5h1v1.5h-1zM529 302h1v1.5h-1zM529 306.5h1v1.5h-1zM530.5 302h1v1.5h-1zM532 306.5h1v1.5h-1zM533.5 306.5h1v1.5h-1zM535 302.5h1v1.5h-1zM538 302.5h1v1.5h-1zM538 307h1v1.5h-1zM541 302.5h1v1.5h-1zM541 307h1v1.5h-1zM542.5 302.5h1v1.5h-1zM550 307h1v1.5h-1zM553 302.5h1v1.5h-1zM557.5 302.5h1v1.5h-1zM557.5 307h1v1.5h-1zM562 307h1v1.5h-1zM566.5 307.5h1v1.5h-1zM568 307.5h1v1.5h-1zM569.5 307.5h1v1.5h-1zM572.5 303h1v1.5h-1zM574 303h1v1.5h-1zM575.5 303h1v1.5h-1zM577 303h1v1.5h-1zM577 307.5h1v1.5h-1zM580 307.5h1v1.5h-1zM583 307.5h1v1.5h-1zM586 303.5h1v1.5h-1zM590.5 303.5h1v1.5h-1zM592 303.5h1v1.5h-1zM598 308h1v1.5h-1zM599.5 303.5h1v1.5h-1zM599.5 308h1v1.5h-1zM601 303.5h1v1.5h-1zM601 308h1v1.5h-1zM602.5 303.5h1v1.5h-1zM602.5 308h1v1.5h-1zM604 303.5h1v1.5h-1zM605.5 303.5h1v1.5h-1zM605.5 308h1v1.5h-1zM607 303.5h1v1.5h-1zM608.5 303.5h1v1.5h-1zM611.5 304h1v1.5h-1zM613 308h1v1.5h-1zM619 304h1v1.5h-1zM619 308.5h1v1.5h-1zM620.5 304h1v1.5h-1zM620.5 308.5h1v1.5h-1zM622 304h1v1.5h-1zM623.5 304h1v1.5h-1zM623.5 308.5h1v1.5h-1zM626.5 304h1v1.5h-1zM626.5 308.5h1v1.5h-1zM629.5 308.5h1v1.5h-1zM631 304h1v1.5h-1zM631 308.5h1v1.5h-1zM634 304h1v1.5h-1zM641.5 309h1v1.5h-1zM643 309h1v1.5h-1zM644.5 309h1v1.5h-1zM646 304.5h1v1.5h-1zM649 309h1v1.5h-1zM653.5 304.5h1v1.5h-1zM655 309h1v1.5h-1zM656.5 309h1v1.5h-1zM659.5 309h1v1.5h-1zM661 309h1v1.5h-1zM662.5 305h1v1.5h-1zM662.5 309h1v1.5h-1zM664 305h1v1.5h-1zM664 309h1v1.5h-1zM665.5 309h1v1.5h-1zM667 305h1v1.5h-1zM668.5 305h1v1.5h-1zM668.5 309.5h1v1.5h-1zM673 305h1v1.5h-1zM673 309.5h1v1.5h-1zM674.5 305h1v1.5h-1zM676 305h1v1.5h-1zM676 309.5h1v1.5h-1zM679 305h1v1.5h-1zM679 309.5h1v1.5h-1zM680.5 309.5h1v1.5h-1zM682 305h1v1.5h-1zM686.5 305.5h1v1.5h-1zM686.5 309.5h1v1.5h-1zM688 309.5h1v1.5h-1zM691 305.5h1v1.5h-1zM691 309.5h1v1.5h-1zM692.5 305.5h1v1.5h-1zM692.5 310h1v1.5h-1zM694 305.5h1v1.5h-1zM694 310h1v1.5h-1zM697 305.5h1v1.5h-1zM697 310h1v1.5h-1zM698.5 305.5h1v1.5h-1zM698.5 310h1v1.5h-1zM700 305.5h1v1.5h-1zM701.5 310h1v1.5h-1zM710.5 305.5h1v1.5h-1zM710.5 310h1v1.5h-1zM712 310h1v1.5h-1zM713.5 306h1v1.5h-1zM716.5 306h1v1.5h-1zM716.5 310h1v1.5h-1zM719.5 306h1v1.5h-1zM721 310.5h1v1.5h-1zM722.5 306h1v1.5h-1zM722.5 310.5h1v1.5h-1zM724 306h1v1.5h-1zM724 310.5h1v1.5h-1zM725.5 306h1v1.5h-1zM725.5 310.5h1v1.5h-1zM730 310.5h1v1.5h-1zM731.5 306h1v1.5h-1zM731.5 310.5h1v1.5h-1zM733 310.5h1v1.5h-1zM737.5 306.5h1v1.5h-1zM739 306.5h1v1.5h-1zM739 310.5h1v1.5h-1zM740.5 310.5h1v1.5h-1zM745 306.5h1v1.5h-1zM745 311h1v1.5h-1zM746.5 306.5h1v1.5h-1zM746.5 311h1v1.5h-1zM748 306.5h1v1.5h-1zM749.5 311h1v1.5h-1zM752.5 306.5h1v1.5h-1zM755.5 306.5h1v1.5h-1zM755.5 311h1v1.5h-1zM758.5 306.5h1v1.5h-1zM760 306.5h1v1.5h-1zM761.5 306.5h1v1.5h-1zM761.5 311h1v1.5h-1zM769 307h1v1.5h-1zM769 311.5h1v1.5h-1zM770.5 311.5h1v1.5h-1zM773.5 307h1v1.5h-1zM775 311.5h1v1.5h-1zM776.5 307h1v1.5h-1zM776.5 311.5h1v1.5h-1zM779.5 311.5h1v1.5h-1zM781 307h1v1.5h-1zM782.5 307h1v1.5h-1zM788.5 311.5h1v1.5h-1zM793 311.5h1v1.5h-1zM794.5 312h1v1.5h-1zM796 307.5h1v1.5h-1zM796 312h1v1.5h-1zM797.5 312h1v1.5h-1zM800.5 307.5h1v1.5h-1zM802 307.5h1v1.5h-1zM805 312h1v1.5h-1zM806.5 307.5h1v1.5h-1zM806.5 312h1v1.5h-1zM809.5 307.5h1v1.5h-1zM811 312h1v1.5h-1zM812.5 307.5h1v1.5h-1zM812.5 312h1v1.5h-1zM814 307.5h1v1.5h-1zM814 312h1v1.5h-1zM817 312h1v1.5h-1zM818.5 312h1v1.5h-1zM820 308h1v1.5h-1zM821.5 308h1v1.5h-1zM823 308h1v1.5h-1zM823 312.5h1v1.5h-1zM824.5 308h1v1.5h-1zM827.5 308h1v1.5h-1zM832 308h1v1.5h-1zM832 312.5h1v1.5h-1zM833.5 312.5h1v1.5h-1zM835 308h1v1.5h-1zM836.5 308h1v1.5h-1zM838 312.5h1v1.5h-1zM841 308.5h1v1.5h-1zM841 312.5h1v1.5h-1zM842.5 312.5h1v1.5h-1zM845.5 308.5h1v1.5h-1zM845.5 313h1v1.5h-1zM854.5 308.5h1v1.5h-1zM859 313h1v1.5h-1zM860.5 308.5h1v1.5h-1zM862 308.5h1v1.5h-1zM865 308.5h1v1.5h-1zM865 313h1v1.5h-1zM866.5 309h1v1.5h-1zM866.5 313h1v1.5h-1zM872.5 309h1v1.5h-1zM872.5 313.5h1v1.5h-1zM874 313.5h1v1.5h-1zM875.5 309h1v1.5h-1zM877 313.5h1v1.5h-1zM878.5 309h1v1.5h-1zM881.5 309h1v1.5h-1zM886 309h1v1.5h-1zM889 313.5h1v1.5h-1zM895 309.5h1v1.5h-1zM896.5 314h1v1.5h-1zM898 309.5h1v1.5h-1zM899.5 309.5h1v1.5h-1zM899.5 314h1v1.5h-1zM901 309.5h1v1.5h-1zM905.5 314h1v1.5h-1zM907 314h1v1.5h-1zM910 309.5h1v1.5h-1zM910 314h1v1.5h-1zM913 309.5h1v1.5h-1zM914.5 314h1v1.5h-1zM916 314h1v1.5h-1zM917.5 314h1v1.5h-1zM919 314.5h1v1.5h-1zM922 310h1v1.5h-1zM922 314.5h1v1.5h-1zM926.5 310h1v1.5h-1zM929.5 314.5h1v1.5h-1zM931 310h1v1.5h-1zM931 314.5h1v1.5h-1zM934 310h1v1.5h-1zM935.5 310.5h1v1.5h-1zM943 310.5h1v1.5h-1zM947.5 310.5h1v1.5h-1zM949 310.5h1v1.5h-1zM949 315h1v1.5h-1zM950.5 315h1v1.5h-1zM952 315h1v1.5h-1zM956.5 311h1v1.5h-1zM958 311h1v1.5h-1zM958 315h1v1.5h-1zM959.5 311h1v1.5h-1zM959.5 315h1v1.5h-1zM961 311h1v1.5h-1zM962.5 311h1v1.5h-1zM967 311h1v1.5h-1zM967 315.5h1v1.5h-1zM968.5 315.5h1v1.5h-1zM971.5 311h1v1.5h-1zM976 315.5h1v1.5h-1zM980.5 311.5h1v1.5h-1zM980.5 315.5h1v1.5h-1zM983.5 311.5h1v1.5h-1zM985 316h1v1.5h-1zM989.5 316h1v1.5h-1zM992.5 316h1v1.5h-1zM994 311.5h1v1.5h-1zM994 316h1v1.5h-1zM995.5 311.5h1v1.5h-1zM998.5 316h1v1.5h-1zM1000 312h1v1.5h-1zM1000 316h1v1.5h-1zM1001.5 312h1v1.5h-1zM1001.5 316h1v1.5h-1zM1003 312h1v1.5h-1zM1004.5 312h1v1.5h-1zM1006 312h1v1.5h-1zM1007.5 312h1v1.5h-1zM1007.5 316.5h1v1.5h-1zM1009 312h1v1.5h-1zM1009 316.5h1v1.5h-1zM1010.5 316.5h1v1.5h-1zM1013.5 312h1v1.5h-1zM1015 312h1v1.5h-1zM1015 316.5h1v1.5h-1zM1016.5 312h1v1.5h-1zM1018 312h1v1.5h-1zM1019.5 312.5h1v1.5h-1zM1019.5 316.5h1v1.5h-1zM1021 316.5h1v1.5h-1zM1022.5 312.5h1v1.5h-1zM1025.5 317h1v1.5h-1zM1027 312.5h1v1.5h-1zM1027 317h1v1.5h-1zM1028.5 317h1v1.5h-1zM1031.5 312.5h1v1.5h-1zM1031.5 317h1v1.5h-1zM1034.5 317h1v1.5h-1zM1039 312.5h1v1.5h-1zM1039 317h1v1.5h-1zM1043.5 317.5h1v1.5h-1zM1045 313h1v1.5h-1zM1051 317.5h1v1.5h-1zM1055.5 317.5h1v1.5h-1zM1060 317.5h1v1.5h-1zM1061.5 313.5h1v1.5h-1zM1063 317.5h1v1.5h-1zM1064.5 318h1v1.5h-1zM1066 318h1v1.5h-1zM1073.5 313.5h1v1.5h-1zM1073.5 318h1v1.5h-1zM1075 313.5h1v1.5h-1zM1075 318h1v1.5h-1zM1076.5 318h1v1.5h-1zM1079.5 313.5h1v1.5h-1zM1079.5 318h1v1.5h-1zM1081 318h1v1.5h-1zM1082.5 314h1v1.5h-1zM1085.5 318.5h1v1.5h-1zM1088.5 318.5h1v1.5h-1zM1090 318.5h1v1.5h-1zM1091.5 318.5h1v1.5h-1zM1094.5 314h1v1.5h-1zM1096 318.5h1v1.5h-1zM1099 314h1v1.5h-1zM1099 318.5h1v1.5h-1zM1100.5 318.5h1v1.5h-1zM1102 314.5h1v1.5h-1zM1103.5 314.5h1v1.5h-1zM1103.5 318.5h1v1.5h-1zM1109.5 314.5h1v1.5h-1zM1112.5 314.5h1v1.5h-1zM1115.5 314.5h1v1.5h-1zM1115.5 319h1v1.5h-1zM1117 319h1v1.5h-1zM1118.5 319h1v1.5h-1zM1120 319h1v1.5h-1zM1124.5 319h1v1.5h-1zM1127.5 315h1v1.5h-1zM1130.5 315h1v1.5h-1zM1130.5 319.5h1v1.5h-1zM1132 315h1v1.5h-1zM1132 319.5h1v1.5h-1zM1133.5 315h1v1.5h-1zM1133.5 319.5h1v1.5h-1zM1135 315h1v1.5h-1zM1135 319.5h1v1.5h-1zM1136.5 315h1v1.5h-1zM1142.5 319.5h1v1.5h-1zM1144 319.5h1v1.5h-1zM1145.5 315.5h1v1.5h-1zM1145.5 319.5h1v1.5h-1zM1148.5 320h1v1.5h-1zM1151.5 320h1v1.5h-1zM1156 315.5h1v1.5h-1zM1157.5 315.5h1v1.5h-1zM1162 315.5h1v1.5h-1zM1163.5 315.5h1v1.5h-1zM1165 316h1v1.5h-1zM1166.5 320h1v1.5h-1zM1169.5 316h1v1.5h-1zM1171 320.5h1v1.5h-1zM1172.5 320.5h1v1.5h-1zM1177 316h1v1.5h-1zM1177 320.5h1v1.5h-1zM1181.5 320.5h1v1.5h-1zM1183 316h1v1.5h-1zM1183 320.5h1v1.5h-1zM1184.5 316h1v1.5h-1zM1187.5 316.5h1v1.5h-1zM1187.5 320.5h1v1.5h-1zM1189 316.5h1v1.5h-1zM1190.5 316.5h1v1.5h-1zM1193.5 316.5h1v1.5h-1zM1198 321h1v1.5h-1zM1199.5 316.5h1v1.5h-1zM1201 316.5h1v1.5h-1zM1202.5 321h1v1.5h-1zM1205.5 316.5h1v1.5h-1zM1205.5 321h1v1.5h-1zM1207 321h1v1.5h-1zM1211.5 317h1v1.5h-1zM1213 321.5h1v1.5h-1zM1219 317h1v1.5h-1zM1220.5 317h1v1.5h-1zM1220.5 321.5h1v1.5h-1zM1222 321.5h1v1.5h-1zM1223.5 321.5h1v1.5h-1zM1225 317h1v1.5h-1zM1225 321.5h1v1.5h-1zM1228 317.5h1v1.5h-1zM1228 321.5h1v1.5h-1zM1231 321.5h1v1.5h-1zM1232.5 322h1v1.5h-1zM1234 322h1v1.5h-1zM1237 322h1v1.5h-1zM1238.5 317.5h1v1.5h-1zM1241.5 322h1v1.5h-1zM1243 317.5h1v1.5h-1zM1244.5 317.5h1v1.5h-1zM1244.5 322h1v1.5h-1zM1249 322h1v1.5h-1zM1250.5 322h1v1.5h-1zM1252 322h1v1.5h-1zM1258 318h1v1.5h-1zM1259.5 322.5h1v1.5h-1zM1262.5 322.5h1v1.5h-1zM1264 322.5h1v1.5h-1zM1265.5 318h1v1.5h-1zM1267 318h1v1.5h-1zM1268.5 318h1v1.5h-1zM1270 322.5h1v1.5h-1zM1274.5 318.5h1v1.5h-1zM1279 318.5h1v1.5h-1zM1279 323h1v1.5h-1zM1280.5 318.5h1v1.5h-1zM1282 323h1v1.5h-1zM1285 318.5h1v1.5h-1zM1285 323h1v1.5h-1zM1286.5 323h1v1.5h-1zM1288 318.5h1v1.5h-1zM1289.5 323h1v1.5h-1zM1291 319h1v1.5h-1zM1292.5 319h1v1.5h-1zM1292.5 323h1v1.5h-1zM1294 319h1v1.5h-1zM1294 323h1v1.5h-1zM1295.5 319h1v1.5h-1zM1297 323.5h1v1.5h-1zM1298.5 319h1v1.5h-1zM1300 323.5h1v1.5h-1zM1306 323.5h1v1.5h-1zM1309 323.5h1v1.5h-1zM1310.5 319h1v1.5h-1zM1312 323.5h1v1.5h-1zM1313.5 319.5h1v1.5h-1zM1316.5 319.5h1v1.5h-1zM1319.5 324h1v1.5h-1zM1325.5 319.5h1v1.5h-1zM1328.5 324h1v1.5h-1zM1331.5 324h1v1.5h-1zM1333 324h1v1.5h-1zM1334.5 320h1v1.5h-1zM1336 324h1v1.5h-1zM1339 320h1v1.5h-1zM1340.5 320h1v1.5h-1zM1340.5 324.5h1v1.5h-1zM1342 320h1v1.5h-1zM1351 320h1v1.5h-1zM1351 324.5h1v1.5h-1zM1352.5 320h1v1.5h-1zM1352.5 324.5h1v1.5h-1zM1360 320.5h1v1.5h-1zM1361.5 325h1v1.5h-1zM1366 325h1v1.5h-1zM1367.5 325h1v1.5h-1zM1369 320.5h1v1.5h-1zM1369 325h1v1.5h-1zM1370.5 320.5h1v1.5h-1zM1373.5 320.5h1v1.5h-1zM1373.5 325h1v1.5h-1zM1375 321h1v1.5h-1zM1376.5 325h1v1.5h-1zM1378 325h1v1.5h-1zM1379.5 325.5h1v1.5h-1zM1384 321h1v1.5h-1zM1384 325.5h1v1.5h-1zM1385.5 321h1v1.5h-1zM1385.5 325.5h1v1.5h-1zM1387 325.5h1v1.5h-1zM1388.5 325.5h1v1.5h-1zM1390 325.5h1v1.5h-1zM1394.5 321h1v1.5h-1zM1396 321.5h1v1.5h-1zM1396 325.5h1v1.5h-1zM1397.5 321.5h1v1.5h-1zM1399 321.5h1v1.5h-1zM1399 325.5h1v1.5h-1zM1400.5 321.5h1v1.5h-1zM1402 321.5h1v1.5h-1zM1402 326h1v1.5h-1zM1405 326h1v1.5h-1zM1408 321.5h1v1.5h-1zM1409.5 326h1v1.5h-1zM1414 321.5h1v1.5h-1zM1414 326h1v1.5h-1zM1417 322h1v1.5h-1zM1418.5 326h1v1.5h-1zM1421.5 322h1v1.5h-1zM1423 326.5h1v1.5h-1zM1427.5 326.5h1v1.5h-1zM1429 322h1v1.5h-1zM1429 326.5h1v1.5h-1zM1435 322h1v1.5h-1zM1436.5 322h1v1.5h-1zM1439.5 326.5h1v1.5h-1zM1441 322.5h1v1.5h-1zM1441 326.5h1v1.5h-1zM1444 327h1v1.5h-1zM1445.5 327h1v1.5h-1zM1447 322.5h1v1.5h-1zM1447 327h1v1.5h-1zM1450 327h1v1.5h-1zM1453 322.5h1v1.5h-1zM1453 327h1v1.5h-1zM1454.5 322.5h1v1.5h-1zM1454.5 327h1v1.5h-1zM1456 327h1v1.5h-1z"/>
<path fill="#e0e0e0" d="M373 301.5h1v1.5h-1zM376 301.5h1v1.5h-1zM379 301.5h1v1.5h-1zM380.5 301.5h1v1.5h-1zM382 301.5h1v1.5h-1zM385 301.5h1v1.5h-1zM388 301.5h1v1.5h-1zM389.5 301.5h1v1.5h-1zM397 302h1v1.5h-1zM398.5 302h1v1.5h-1zM400 302h1v1.5h-1zM403 302h1v1.5h-1zM404.5 302h1v1.5h-1zM406 302h1v1.5h-1zM413.5 302h1v1.5h-1zM416.5 302h1v1.5h-1zM418 302h1v1.5h-1zM424 302.5h1v1.5h-1zM425.5 302.5h1v1.5h-1zM427 302.5h1v1.5h-1zM431.5 302.5h1v1.5h-1zM436 302.5h1v1.5h-1zM437.5 302.5h1v1.5h-1zM439 302.5h1v1.5h-1zM440.5 302.5h1v1.5h-1zM442 302.5h1v1.5h-1zM443.5 302.5h1v1.5h-1zM449.5 303h1v1.5h-1zM452.5 303h1v1.5h-1zM454 303h1v1.5h-1zM457 303h1v1.5h-1zM458.5 303h1v1.5h-1zM460 303h1v1.5h-1zM461.5 303h1v1.5h-1zM463 303h1v1.5h-1zM464.5 303h1v1.5h-1zM466 303h1v1.5h-1zM469 303h1v1.5h-1zM473.5 303.5h1v1.5h-1zM475 303.5h1v1.5h-1zM479.5 303.5h1v1.5h-1zM481 303.5h1v1.5h-1zM484 303.5h1v1.5h-1zM485.5 303.5h1v1.5h-1zM488.5 303.5h1v1.5h-1zM490 303.5h1v1.5h-1zM491.5 303.5h1v1.5h-1zM496 303.5h1v1.5h-1zM497.5 304h1v1.5h-1zM502 304h1v1.5h-1zM505 304h1v1.5h-1zM506.5 304h1v1.5h-1zM508 304h1v1.5h-1zM509.5 304h1v1.5h-1zM512.5 304h1v1.5h-1zM515.5 304h1v1.5h-1zM517 304h1v1.5h-1zM518.5 304h1v1.5h-1zM523 304.5h1v1.5h-1zM527.5 304.5h1v1.5h-1zM529 304.5h1v1.5h-1zM533.5 304.5h1v1.5h-1zM535 304.5h1v1.5h-1zM539.5 304.5h1v1.5h-1zM541 304.5h1v1.5h-1zM542.5 304.5h1v1.5h-1zM545.5 304.5h1v1.5h-1zM550 305h1v1.5h-1zM553 305h1v1.5h-1zM554.5 305h1v1.5h-1zM556 305h1v1.5h-1zM563.5 305h1v1.5h-1zM565 305h1v1.5h-1zM569.5 305h1v1.5h-1zM577 305.5h1v1.5h-1zM578.5 305.5h1v1.5h-1zM581.5 305.5h1v1.5h-1zM586 305.5h1v1.5h-1zM589 305.5h1v1.5h-1zM596.5 305.5h1v1.5h-1zM602.5 306h1v1.5h-1zM604 306h1v1.5h-1zM607 306h1v1.5h-1zM608.5 306h1v1.5h-1zM611.5 306h1v1.5h-1zM614.5 306h1v1.5h-1zM619 306h1v1.5h-1zM629.5 306.5h1v1.5h-1zM631 306.5h1v1.5h-1zM634 306.5h1v1.5h-1zM635.5 306.5h1v1.5h-1zM640 306.5h1v1.5h-1zM641.5 306.5h1v1.5h-1zM643 306.5h1v1.5h-1zM647.5 306.5h1v1.5h-1zM649 306.5h1v1.5h-1zM650.5 307h1v1.5h-1zM652 307h1v1.5h-1zM653.5 307h1v1.5h-1zM655 307h1v1.5h-1zM656.5 307h1v1.5h-1zM658 307h1v1.5h-1zM659.5 307h1v1.5h-1zM661 307h1v1.5h-1zM662.5 307h1v1.5h-1zM665.5 307h1v1.5h-1zM671.5 307h1v1.5h-1zM674.5 307h1v1.5h-1zM676 307.5h1v1.5h-1zM677.5 307.5h1v1.5h-1zM680.5 307.5h1v1.5h-1zM682 307.5h1v1.5h-1zM683.5 307.5h1v1.5h-1zM685 307.5h1v1.5h-1zM686.5 307.5h1v1.5h-1zM691 307.5h1v1.5h-1zM692.5 307.5h1v1.5h-1zM700 307.5h1v1.5h-1zM701.5 307.5h1v1.5h-1zM703 308h1v1.5h-1zM704.5 308h1v1.5h-1zM706 308h1v1.5h-1zM709 308h1v1.5h-1zM712 308h1v1.5h-1zM715 308h1v1.5h-1zM721 308h1v1.5h-1zM725.5 308h1v1.5h-1zM728.5 308.5h1v1.5h-1zM730 308.5h1v1.5h-1zM733 308.5h1v1.5h-1zM736 308.5h1v1.5h-1zM740.5 308.5h1v1.5h-1zM742 308.5h1v1.5h-1zM751 308.5h1v1.5h-1zM752.5 308.5h1v1.5h-1zM757 309h1v1.5h-1zM761.5 309h1v1.5h-1zM764.5 309h1v1.5h-1zM766 309h1v1.5h-1zM767.5 309h1v1.5h-1zM770.5 309h1v1.5h-1zM772 309h1v1.5h-1zM778 309h1v1.5h-1zM782.5 309.5h1v1.5h-1zM784 309.5h1v1.5h-1zM790 309.5h1v1.5h-1zM791.5 309.5h1v1.5h-1zM793 309.5h1v1.5h-1zM794.5 309.5h1v1.5h-1zM802 309.5h1v1.5h-1zM803.5 309.5h1v1.5h-1zM806.5 310h1v1.5h-1zM808 310h1v1.5h-1zM811 310h1v1.5h-1zM812.5 310h1v1.5h-1zM817 310h1v1.5h-1zM823 310h1v1.5h-1zM829 310h1v1.5h-1zM830.5 310.5h1v1.5h-1zM832 310.5h1v1.5h-1zM833.5 310.5h1v1.5h-1zM835 310.5h1v1.5h-1zM838 310.5h1v1.5h-1zM841 310.5h1v1.5h-1zM854.5 310.5h1v1.5h-1zM859 311h1v1.5h-1zM860.5 311h1v1.5h-1zM862 311h1v1.5h-1zM865 311h1v1.5h-1zM868 311h1v1.5h-1zM871 311h1v1.5h-1zM877 311h1v1.5h-1zM878.5 311h1v1.5h-1zM880 311h1v1.5h-1zM881.5 311.5h1v1.5h-1zM884.5 311.5h1v1.5h-1zM887.5 311.5h1v1.5h-1zM895 311.5h1v1.5h-1zM896.5 311.5h1v1.5h-1zM898 311.5h1v1.5h-1zM904 311.5h1v1.5h-1zM908.5 312h1v1.5h-1zM914.5 312h1v1.5h-1zM917.5 312h1v1.5h-1zM920.5 312h1v1.5h-1zM923.5 312h1v1.5h-1zM932.5 312.5h1v1.5h-1zM941.5 312.5h1v1.5h-1zM949 313h1v1.5h-1zM950.5 313h1v1.5h-1zM952 313h1v1.5h-1zM955 313h1v1.5h-1zM958 313h1v1.5h-1zM962.5 313h1v1.5h-1zM964 313h1v1.5h-1zM968.5 313.5h1v1.5h-1zM970 313.5h1v1.5h-1zM973 313.5h1v1.5h-1zM976 313.5h1v1.5h-1zM977.5 313.5h1v1.5h-1zM979 313.5h1v1.5h-1zM983.5 313.5h1v1.5h-1zM986.5 313.5h1v1.5h-1zM988 313.5h1v1.5h-1zM991 314h1v1.5h-1zM992.5 314h1v1.5h-1zM995.5 314h1v1.5h-1zM1000 314h1v1.5h-1zM1003 314h1v1.5h-1zM1004.5 314h1v1.5h-1zM1013.5 314.5h1v1.5h-1zM1016.5 314.5h1v1.5h-1zM1021 314.5h1v1.5h-1zM1022.5 314.5h1v1.5h-1zM1024 314.5h1v1.5h-1zM1027 314.5h1v1.5h-1zM1028.5 314.5h1v1.5h-1zM1031.5 315h1v1.5h-1zM1034.5 315h1v1.5h-1zM1039 315h1v1.5h-1zM1040.5 315h1v1.5h-1zM1045 315h1v1.5h-1zM1046.5 315h1v1.5h-1zM1048 315h1v1.5h-1zM1054 315.5h1v1.5h-1zM1055.5 315.5h1v1.5h-1zM1058.5 315.5h1v1.5h-1zM1061.5 315.5h1v1.5h-1zM1063 315.5h1v1.5h-1zM1064.5 315.5h1v1.5h-1zM1070.5 315.5h1v1.5h-1zM1072 315.5h1v1.5h-1zM1078 316h1v1.5h-1zM1081 316h1v1.5h-1zM1082.5 316h1v1.5h-1zM1084 316h1v1.5h-1zM1085.5 316h1v1.5h-1zM1091.5 316h1v1.5h-1zM1099 316.5h1v1.5h-1zM1100.5 316.5h1v1.5h-1zM1102 316.5h1v1.5h-1zM1108 316.5h1v1.5h-1zM1115.5 317h1v1.5h-1zM1127.5 317h1v1.5h-1zM1129 317h1v1.5h-1zM1133.5 317h1v1.5h-1zM1135 317h1v1.5h-1zM1138 317.5h1v1.5h-1zM1139.5 317.5h1v1.5h-1zM1141 317.5h1v1.5h-1zM1142.5 317.5h1v1.5h-1zM1150 317.5h1v1.5h-1zM1154.5 317.5h1v1.5h-1zM1156 317.5h1v1.5h-1zM1157.5 318h1v1.5h-1zM1160.5 318h1v1.5h-1zM1162 318h1v1.5h-1zM1163.5 318h1v1.5h-1zM1166.5 318h1v1.5h-1zM1169.5 318h1v1.5h-1zM1171 318h1v1.5h-1zM1172.5 318h1v1.5h-1zM1175.5 318h1v1.5h-1zM1178.5 318.5h1v1.5h-1zM1181.5 318.5h1v1.5h-1zM1183 318.5h1v1.5h-1zM1186 318.5h1v1.5h-1zM1189 318.5h1v1.5h-1zM1190.5 318.5h1v1.5h-1zM1195 318.5h1v1.5h-1zM1196.5 318.5h1v1.5h-1zM1198 318.5h1v1.5h-1zM1199.5 319h1v1.5h-1zM1201 319h1v1.5h-1zM1204 319h1v1.5h-1zM1205.5 319h1v1.5h-1zM1207 319h1v1.5h-1zM1210 319h1v1.5h-1zM1211.5 319h1v1.5h-1zM1213 319h1v1.5h-1zM1214.5 319h1v1.5h-1zM1216 319h1v1.5h-1zM1223.5 319.5h1v1.5h-1zM1228 319.5h1v1.5h-1zM1231 319.5h1v1.5h-1zM1232.5 319.5h1v1.5h-1zM1234 319.5h1v1.5h-1zM1235.5 319.5h1v1.5h-1zM1244.5 320h1v1.5h-1zM1250.5 320h1v1.5h-1zM1253.5 320h1v1.5h-1zM1255 320h1v1.5h-1zM1265.5 320.5h1v1.5h-1zM1267 320.5h1v1.5h-1zM1268.5 320.5h1v1.5h-1zM1270 320.5h1v1.5h-1zM1271.5 320.5h1v1.5h-1zM1273 320.5h1v1.5h-1zM1274.5 320.5h1v1.5h-1zM1277.5 320.5h1v1.5h-1zM1279 320.5h1v1.5h-1zM1283.5 321h1v1.5h-1zM1285 321h1v1.5h-1zM1300 321h1v1.5h-1zM1301.5 321h1v1.5h-1zM1304.5 321.5h1v1.5h-1zM1306 321.5h1v1.5h-1zM1307.5 321.5h1v1.5h-1zM1309 321.5h1v1.5h-1zM1310.5 321.5h1v1.5h-1zM1313.5 321.5h1v1.5h-1zM1315 321.5h1v1.5h-1zM1319.5 321.5h1v1.5h-1zM1321 321.5h1v1.5h-1zM1324 322h1v1.5h-1zM1325.5 322h1v1.5h-1zM1328.5 322h1v1.5h-1zM1331.5 322h1v1.5h-1zM1333 322h1v1.5h-1zM1334.5 322h1v1.5h-1zM1339 322h1v1.5h-1zM1340.5 322h1v1.5h-1zM1342 322h1v1.5h-1zM1343.5 322h1v1.5h-1zM1355.5 322.5h1v1.5h-1zM1360 322.5h1v1.5h-1zM1364.5 322.5h1v1.5h-1zM1366 323h1v1.5h-1zM1367.5 323h1v1.5h-1zM1372 323h1v1.5h-1zM1375 323h1v1.5h-1zM1378 323h1v1.5h-1zM1379.5 323h1v1.5h-1zM1382.5 323h1v1.5h-1zM1391.5 323.5h1v1.5h-1zM1393 323.5h1v1.5h-1zM1396 323.5h1v1.5h-1zM1399 323.5h1v1.5h-1zM1402 323.5h1v1.5h-1zM1403.5 323.5h1v1.5h-1zM1408 324h1v1.5h-1zM1409.5 324h1v1.5h-1zM1411 324h1v1.5h-1zM1414 324h1v1.5h-1zM1418.5 324h1v1.5h-1zM1421.5 324h1v1.5h-1zM1423 324h1v1.5h-1zM1429 324.5h1v1.5h-1zM1432 324.5h1v1.5h-1zM1435 324.5h1v1.5h-1zM1439.5 324.5h1v1.5h-1zM1442.5 324.5h1v1.5h-1zM1445.5 324.5h1v1.5h-1zM1447 324.5h1v1.5h-1zM1448.5 324.5h1v1.5h-1zM1454.5 325h1v1.5h-1zM1457.5 325h1v1.5h-1zM1459 325h1v1.5h-1zM1460.5 325h1v1.5h-1z"/>
<path fill="#8a8a8a" d="M373 305.5h1v1.5h-1zM374.5 295h1v1.5h-1zM374.5 306h1v1.5h-1zM376 293h1v1.5h-1zM377.5 297h1v1.5h-1zM379 297h1v1.5h-1zM382 306h1v1.5h-1zM383.5 295h1v1.5h-1zM383.5 306h1v1.5h-1zM385 306h1v1.5h-1zM388 297h1v1.5h-1zM388 306h1v1.5h-1zM389.5 293.5h1v1.5h-1zM389.5 295.5h1v1.5h-1zM391 297.5h1v1.5h-1zM394 297.5h1v1.5h-1zM395.5 295.5h1v1.5h-1zM395.5 297.5h1v1.5h-1zM397 295.5h1v1.5h-1zM397 297.5h1v1.5h-1zM398.5 306h1v1.5h-1zM400 297.5h1v1.5h-1zM401.5 297.5h1v1.5h-1zM403 295.5h1v1.5h-1zM403 297.5h1v1.5h-1zM406 294h1v1.5h-1zM406 297.5h1v1.5h-1zM410.5 294h1v1.5h-1zM410.5 297.5h1v1.5h-1zM413.5 295.5h1v1.5h-1zM413.5 306.5h1v1.5h-1zM416.5 296h1v1.5h-1zM418 306.5h1v1.5h-1zM419.5 296h1v1.5h-1zM419.5 298h1v1.5h-1zM419.5 306.5h1v1.5h-1zM421 294h1v1.5h-1zM421 298h1v1.5h-1zM422.5 306.5h1v1.5h-1zM424 296h1v1.5h-1zM424 306.5h1v1.5h-1zM425.5 307h1v1.5h-1zM427 298h1v1.5h-1zM433 298h1v1.5h-1zM434.5 296h1v1.5h-1zM436 298h1v1.5h-1zM436 307h1v1.5h-1zM437.5 298h1v1.5h-1zM439 296h1v1.5h-1zM440.5 307h1v1.5h-1zM442 298.5h1v1.5h-1zM443.5 298.5h1v1.5h-1zM443.5 307h1v1.5h-1zM445 298.5h1v1.5h-1zM448 294.5h1v1.5h-1zM448 296.5h1v1.5h-1zM448 307h1v1.5h-1zM449.5 294.5h1v1.5h-1zM449.5 298.5h1v1.5h-1zM449.5 307h1v1.5h-1zM451 307.5h1v1.5h-1zM454 296.5h1v1.5h-1zM455.5 298.5h1v1.5h-1zM458.5 296.5h1v1.5h-1zM460 298.5h1v1.5h-1zM464.5 296.5h1v1.5h-1zM464.5 307.5h1v1.5h-1zM466 295h1v1.5h-1zM467.5 297h1v1.5h-1zM467.5 299h1v1.5h-1zM467.5 307.5h1v1.5h-1zM469 299h1v1.5h-1zM469 307.5h1v1.5h-1zM470.5 299h1v1.5h-1zM472 299h1v1.5h-1zM472 307.5h1v1.5h-1zM476.5 297h1v1.5h-1zM476.5 299h1v1.5h-1zM476.5 308h1v1.5h-1zM478 299h1v1.5h-1zM479.5 308h1v1.5h-1zM482.5 295.5h1v1.5h-1zM482.5 297h1v1.5h-1zM484 299h1v1.5h-1zM484 308h1v1.5h-1zM485.5 299h1v1.5h-1zM487 295.5h1v1.5h-1zM487 299h1v1.5h-1zM488.5 297h1v1.5h-1zM490 297h1v1.5h-1zM491.5 297h1v1.5h-1zM494.5 297.5h1v1.5h-1zM496 308h1v1.5h-1zM497.5 308h1v1.5h-1zM502 299.5h1v1.5h-1zM503.5 299.5h1v1.5h-1zM509.5 308.5h1v1.5h-1zM511 299.5h1v1.5h-1zM512.5 299.5h1v1.5h-1zM515.5 296h1v1.5h-1zM517 308.5h1v1.5h-1zM520 300h1v1.5h-1zM520 308.5h1v1.5h-1zM523 298h1v1.5h-1zM523 300h1v1.5h-1zM523 308.5h1v1.5h-1zM526 300h1v1.5h-1zM527.5 298h1v1.5h-1zM530.5 309h1v1.5h-1zM532 300h1v1.5h-1zM535 298h1v1.5h-1zM536.5 300h1v1.5h-1zM538 298h1v1.5h-1zM538 309h1v1.5h-1zM539.5 300h1v1.5h-1zM539.5 309h1v1.5h-1zM541 309h1v1.5h-1zM544 309h1v1.5h-1zM545.5 298.5h1v1.5h-1zM550 309h1v1.5h-1zM551.5 300.5h1v1.5h-1zM551.5 309h1v1.5h-1zM553 300.5h1v1.5h-1zM554.5 309.5h1v1.5h-1zM556 298.5h1v1.5h-1zM556 300.5h1v1.5h-1zM557.5 309.5h1v1.5h-1zM559 300.5h1v1.5h-1zM560.5 309.5h1v1.5h-1zM562 298.5h1v1.5h-1zM562 300.5h1v1.5h-1zM574 301h1v1.5h-1zM575.5 297h1v1.5h-1zM578.5 299h1v1.5h-1zM581.5 299h1v1.5h-1zM583 301h1v1.5h-1zM589 310h1v1.5h-1zM593.5 297.5h1v1.5h-1zM593.5 301h1v1.5h-1zM593.5 310h1v1.5h-1zM596.5 299.5h1v1.5h-1zM596.5 301.5h1v1.5h-1zM598 299.5h1v1.5h-1zM598 310h1v1.5h-1zM599.5 301.5h1v1.5h-1zM602.5 297.5h1v1.5h-1zM602.5 299.5h1v1.5h-1zM602.5 301.5h1v1.5h-1zM607 301.5h1v1.5h-1zM608.5 301.5h1v1.5h-1zM610 299.5h1v1.5h-1zM610 310.5h1v1.5h-1zM611.5 301.5h1v1.5h-1zM613 298h1v1.5h-1zM613 301.5h1v1.5h-1zM616 301.5h1v1.5h-1zM620.5 298h1v1.5h-1zM622 300h1v1.5h-1zM623.5 310.5h1v1.5h-1zM626.5 302h1v1.5h-1zM631 300h1v1.5h-1zM631 302h1v1.5h-1zM632.5 311h1v1.5h-1zM635.5 302h1v1.5h-1zM635.5 311h1v1.5h-1zM637 302h1v1.5h-1zM638.5 311h1v1.5h-1zM640 311h1v1.5h-1zM641.5 300h1v1.5h-1zM650.5 298.5h1v1.5h-1zM650.5 302.5h1v1.5h-1zM652 298.5h1v1.5h-1zM653.5 302.5h1v1.5h-1zM655 300.5h1v1.5h-1zM656.5 300.5h1v1.5h-1zM656.5 302.5h1v1.5h-1zM658 311.5h1v1.5h-1zM659.5 300.5h1v1.5h-1zM662.5 302.5h1v1.5h-1zM664 302.5h1v1.5h-1zM668.5 302.5h1v1.5h-1zM668.5 311.5h1v1.5h-1zM670 311.5h1v1.5h-1zM671.5 303h1v1.5h-1zM674.5 303h1v1.5h-1zM676 311.5h1v1.5h-1zM677.5 303h1v1.5h-1zM677.5 311.5h1v1.5h-1zM679 311.5h1v1.5h-1zM686.5 303h1v1.5h-1zM688 303h1v1.5h-1zM689.5 312h1v1.5h-1zM691 312h1v1.5h-1zM692.5 312h1v1.5h-1zM694 312h1v1.5h-1zM697 303.5h1v1.5h-1zM700 303.5h1v1.5h-1zM704.5 312h1v1.5h-1zM706 312h1v1.5h-1zM707.5 303.5h1v1.5h-1zM710.5 303.5h1v1.5h-1zM713.5 303.5h1v1.5h-1zM713.5 312.5h1v1.5h-1zM715 303.5h1v1.5h-1zM718 303.5h1v1.5h-1zM718 312.5h1v1.5h-1zM719.5 303.5h1v1.5h-1zM725.5 304h1v1.5h-1zM727 304h1v1.5h-1zM727 312.5h1v1.5h-1zM728.5 312.5h1v1.5h-1zM731.5 304h1v1.5h-1zM733 304h1v1.5h-1zM739 304h1v1.5h-1zM739 313h1v1.5h-1zM740.5 304h1v1.5h-1zM740.5 313h1v1.5h-1zM742 304h1v1.5h-1zM742 313h1v1.5h-1zM745 304h1v1.5h-1zM749.5 304.5h1v1.5h-1zM749.5 313h1v1.5h-1zM751 304.5h1v1.5h-1zM757 304.5h1v1.5h-1zM758.5 304.5h1v1.5h-1zM758.5 313.5h1v1.5h-1zM764.5 304.5h1v1.5h-1zM766 313.5h1v1.5h-1zM773.5 305h1v1.5h-1zM773.5 313.5h1v1.5h-1zM775 305h1v1.5h-1zM775 313.5h1v1.5h-1zM776.5 313.5h1v1.5h-1zM778 305h1v1.5h-1zM781 305h1v1.5h-1zM787 314h1v1.5h-1zM788.5 305h1v1.5h-1zM791.5 314h1v1.5h-1zM793 305h1v1.5h-1zM794.5 305h1v1.5h-1zM794.5 314h1v1.5h-1zM796 305h1v1.5h-1zM797.5 305h1v1.5h-1zM799 305.5h1v1.5h-1zM805 305.5h1v1.5h-1zM808 305.5h1v1.5h-1zM809.5 314.5h1v1.5h-1zM811 305.5h1v1.5h-1zM812.5 314.5h1v1.5h-1zM814 305.5h1v1.5h-1zM814 314.5h1v1.5h-1zM815.5 305.5h1v1.5h-1zM817 314.5h1v1.5h-1zM821.5 314.5h1v1.5h-1zM823 305.5h1v1.5h-1zM824.5 314.5h1v1.5h-1zM827.5 314.5h1v1.5h-1zM832 306h1v1.5h-1zM836.5 315h1v1.5h-1zM838 306h1v1.5h-1zM838 315h1v1.5h-1zM845.5 306h1v1.5h-1zM845.5 315h1v1.5h-1zM847 306h1v1.5h-1zM850 306h1v1.5h-1zM857.5 306.5h1v1.5h-1zM857.5 315h1v1.5h-1zM859 306.5h1v1.5h-1zM860.5 306.5h1v1.5h-1zM865 315.5h1v1.5h-1zM869.5 306.5h1v1.5h-1zM875.5 315.5h1v1.5h-1zM878.5 315.5h1v1.5h-1zM880 307h1v1.5h-1zM883 307h1v1.5h-1zM884.5 307h1v1.5h-1zM886 307h1v1.5h-1zM887.5 316h1v1.5h-1zM889 316h1v1.5h-1zM893.5 316h1v1.5h-1zM896.5 316h1v1.5h-1zM898 316h1v1.5h-1zM899.5 307h1v1.5h-1zM902.5 316h1v1.5h-1zM904 307.5h1v1.5h-1zM904 316h1v1.5h-1zM907 316h1v1.5h-1zM910 307.5h1v1.5h-1zM910 316.5h1v1.5h-1zM911.5 316.5h1v1.5h-1zM914.5 316.5h1v1.5h-1zM919 307.5h1v1.5h-1zM920.5 307.5h1v1.5h-1zM920.5 316.5h1v1.5h-1zM925 308h1v1.5h-1zM929.5 316.5h1v1.5h-1zM931 308h1v1.5h-1zM932.5 308h1v1.5h-1zM935.5 317h1v1.5h-1zM938.5 317h1v1.5h-1zM940 308h1v1.5h-1zM941.5 317h1v1.5h-1zM943 317h1v1.5h-1zM946 317h1v1.5h-1zM950.5 317h1v1.5h-1zM952 308.5h1v1.5h-1zM952 317.5h1v1.5h-1zM956.5 317.5h1v1.5h-1zM958 308.5h1v1.5h-1zM959.5 308.5h1v1.5h-1zM961 308.5h1v1.5h-1zM962.5 317.5h1v1.5h-1zM964 309h1v1.5h-1zM965.5 309h1v1.5h-1zM970 309h1v1.5h-1zM970 317.5h1v1.5h-1zM973 309h1v1.5h-1zM973 318h1v1.5h-1zM974.5 318h1v1.5h-1zM977.5 309h1v1.5h-1zM977.5 318h1v1.5h-1zM979 318h1v1.5h-1zM980.5 318h1v1.5h-1zM982 309h1v1.5h-1zM983.5 309h1v1.5h-1zM988 309.5h1v1.5h-1zM992.5 318h1v1.5h-1zM994 309.5h1v1.5h-1zM995.5 309.5h1v1.5h-1zM997 318.5h1v1.5h-1zM1000 309.5h1v1.5h-1zM1001.5 318.5h1v1.5h-1zM1003 309.5h1v1.5h-1zM1004.5 318.5h1v1.5h-1zM1006 310h1v1.5h-1zM1010.5 310h1v1.5h-1zM1012 310h1v1.5h-1zM1013.5 310h1v1.5h-1zM1016.5 319h1v1.5h-1zM1019.5 310h1v1.5h-1zM1021 310h1v1.5h-1zM1022.5 310h1v1.5h-1zM1024 310h1v1.5h-1zM1024 319h1v1.5h-1zM1027 319h1v1.5h-1zM1028.5 319h1v1.5h-1zM1031.5 319h1v1.5h-1zM1040.5 310.5h1v1.5h-1zM1042 319.5h1v1.5h-1zM1043.5 319.5h1v1.5h-1zM1046.5 310.5h1v1.5h-1zM1048 319.5h1v1.5h-1zM1052.5 311h1v1.5h-1zM1052.5 319.5h1v1.5h-1zM1054 319.5h1v1.5h-1zM1055.5 311h1v1.5h-1zM1060 311h1v1.5h-1zM1060 320h1v1.5h-1zM1061.5 311h1v1.5h-1zM1061.5 320h1v1.5h-1zM1063 320h1v1.5h-1zM1066 311h1v1.5h-1zM1069 311.5h1v1.5h-1zM1069 320h1v1.5h-1zM1070.5 311.5h1v1.5h-1zM1073.5 311.5h1v1.5h-1zM1075 320h1v1.5h-1zM1078 311.5h1v1.5h-1zM1079.5 311.5h1v1.5h-1zM1084 311.5h1v1.5h-1zM1084 320.5h1v1.5h-1zM1096 312h1v1.5h-1zM1100.5 321h1v1.5h-1zM1103.5 312h1v1.5h-1zM1108 312h1v1.5h-1zM1108 321h1v1.5h-1zM1109.5 312h1v1.5h-1zM1112.5 312.5h1v1.5h-1zM1118.5 321h1v1.5h-1zM1121.5 321.5h1v1.5h-1zM1124.5 312.5h1v1.5h-1zM1124.5 321.5h1v1.5h-1zM1126 321.5h1v1.5h-1zM1127.5 312.5h1v1.5h-1zM1127.5 321.5h1v1.5h-1zM1130.5 312.5h1v1.5h-1zM1132 313h1v1.5h-1zM1132 321.5h1v1.5h-1zM1136.5 313h1v1.5h-1zM1136.5 321.5h1v1.5h-1zM1138 313h1v1.5h-1zM1147 313h1v1.5h-1zM1148.5 322h1v1.5h-1zM1150 313h1v1.5h-1zM1153 313.5h1v1.5h-1zM1153 322h1v1.5h-1zM1154.5 313.5h1v1.5h-1zM1157.5 322h1v1.5h-1zM1159 313.5h1v1.5h-1zM1160.5 313.5h1v1.5h-1zM1160.5 322h1v1.5h-1zM1162 322.5h1v1.5h-1zM1163.5 313.5h1v1.5h-1zM1163.5 322.5h1v1.5h-1zM1165 322.5h1v1.5h-1zM1166.5 313.5h1v1.5h-1zM1166.5 322.5h1v1.5h-1zM1168 322.5h1v1.5h-1zM1169.5 322.5h1v1.5h-1zM1172.5 322.5h1v1.5h-1zM1174 314h1v1.5h-1zM1174 322.5h1v1.5h-1zM1175.5 322.5h1v1.5h-1zM1178.5 314h1v1.5h-1zM1180 314h1v1.5h-1zM1180 322.5h1v1.5h-1zM1183 314h1v1.5h-1zM1183 323h1v1.5h-1zM1184.5 323h1v1.5h-1zM1187.5 314h1v1.5h-1zM1190.5 323h1v1.5h-1zM1192 314h1v1.5h-1zM1198 314.5h1v1.5h-1zM1199.5 314.5h1v1.5h-1zM1201 323h1v1.5h-1zM1204 323.5h1v1.5h-1zM1205.5 323.5h1v1.5h-1zM1210 314.5h1v1.5h-1zM1211.5 323.5h1v1.5h-1zM1213 314.5h1v1.5h-1zM1216 315h1v1.5h-1zM1217.5 315h1v1.5h-1zM1217.5 323.5h1v1.5h-1zM1225 324h1v1.5h-1zM1229.5 315h1v1.5h-1zM1229.5 324h1v1.5h-1zM1232.5 315h1v1.5h-1zM1232.5 324h1v1.5h-1zM1234 315h1v1.5h-1zM1237 315.5h1v1.5h-1zM1238.5 324h1v1.5h-1zM1241.5 315.5h1v1.5h-1zM1243 315.5h1v1.5h-1zM1243 324h1v1.5h-1zM1250.5 324.5h1v1.5h-1zM1252 324.5h1v1.5h-1zM1253.5 315.5h1v1.5h-1zM1253.5 324.5h1v1.5h-1zM1255 315.5h1v1.5h-1zM1262.5 316h1v1.5h-1zM1262.5 324.5h1v1.5h-1zM1265.5 316h1v1.5h-1zM1267 325h1v1.5h-1zM1271.5 325h1v1.5h-1zM1276 325h1v1.5h-1zM1286.5 316.5h1v1.5h-1zM1295.5 325.5h1v1.5h-1zM1297 325.5h1v1.5h-1zM1301.5 317h1v1.5h-1zM1301.5 325.5h1v1.5h-1zM1307.5 317h1v1.5h-1zM1307.5 326h1v1.5h-1zM1312 317h1v1.5h-1zM1312 326h1v1.5h-1zM1313.5 326h1v1.5h-1zM1316.5 317h1v1.5h-1zM1316.5 326h1v1.5h-1zM1321 317.5h1v1.5h-1zM1325.5 317.5h1v1.5h-1zM1327 317.5h1v1.5h-1zM1327 326h1v1.5h-1zM1328.5 317.5h1v1.5h-1zM1330 317.5h1v1.5h-1zM1331.5 326.5h1v1.5h-1zM1333 326.5h1v1.5h-1zM1334.5 317.5h1v1.5h-1zM1337.5 317.5h1v1.5h-1zM1339 317.5h1v1.5h-1zM1340.5 317.5h1v1.5h-1zM1342 326.5h1v1.5h-1zM1354 318h1v1.5h-1zM1355.5 318h1v1.5h-1zM1355.5 327h1v1.5h-1zM1357 327h1v1.5h-1zM1358.5 318h1v1.5h-1zM1361.5 318h1v1.5h-1zM1364.5 318.5h1v1.5h-1zM1364.5 327h1v1.5h-1zM1366 318.5h1v1.5h-1zM1367.5 318.5h1v1.5h-1zM1370.5 327.5h1v1.5h-1zM1375 318.5h1v1.5h-1zM1378 318.5h1v1.5h-1zM1379.5 318.5h1v1.5h-1zM1379.5 327.5h1v1.5h-1zM1385.5 319h1v1.5h-1zM1385.5 327.5h1v1.5h-1zM1387 327.5h1v1.5h-1zM1393 319h1v1.5h-1zM1393 328h1v1.5h-1zM1399 319h1v1.5h-1zM1400.5 319h1v1.5h-1zM1405 319.5h1v1.5h-1zM1406.5 328h1v1.5h-1zM1415.5 319.5h1v1.5h-1zM1418.5 319.5h1v1.5h-1zM1424.5 328.5h1v1.5h-1zM1426 320h1v1.5h-1zM1427.5 320h1v1.5h-1zM1427.5 328.5h1v1.5h-1zM1429 320h1v1.5h-1zM1430.5 328.5h1v1.5h-1zM1433.5 329h1v1.5h-1zM1442.5 320h1v1.5h-1zM1442.5 329h1v1.5h-1zM1444 320h1v1.5h-1zM1445.5 320.5h1v1.5h-1zM1448.5 320.5h1v1.5h-1zM1450 320.5h1v1.5h-1zM1457.5 320.5h1v1.5h-1z"/>
<path fill="#606060" d="M374.5 303.5h1v1.5h-1zM377.5 303.5h1v1.5h-1zM383.5 303.5h1v1.5h-1zM386.5 304h1v1.5h-1zM394 299.5h1v1.5h-1zM395.5 299.5h1v1.5h-1zM397 299.5h1v1.5h-1zM398.5 304h1v1.5h-1zM400 299.5h1v1.5h-1zM400 304h1v1.5h-1zM418 300h1v1.5h-1zM418 304.5h1v1.5h-1zM421 300h1v1.5h-1zM439 305h1v1.5h-1zM440.5 300.5h1v1.5h-1zM443.5 300.5h1v1.5h-1zM449.5 300.5h1v1.5h-1zM452.5 305h1v1.5h-1zM454 305h1v1.5h-1zM457 301h1v1.5h-1zM460 301h1v1.5h-1zM464.5 305.5h1v1.5h-1zM466 301h1v1.5h-1zM466 305.5h1v1.5h-1zM467.5 305.5h1v1.5h-1zM469 305.5h1v1.5h-1zM470.5 301h1v1.5h-1zM481 301h1v1.5h-1zM482.5 301.5h1v1.5h-1zM487 301.5h1v1.5h-1zM500.5 306h1v1.5h-1zM515.5 306.5h1v1.5h-1zM520 306.5h1v1.5h-1zM521.5 306.5h1v1.5h-1zM524.5 306.5h1v1.5h-1zM539.5 302.5h1v1.5h-1zM542.5 307h1v1.5h-1zM550 302.5h1v1.5h-1zM554.5 302.5h1v1.5h-1zM556 307h1v1.5h-1zM560.5 307h1v1.5h-1zM580 303h1v1.5h-1zM581.5 303h1v1.5h-1zM607 308h1v1.5h-1zM614.5 308h1v1.5h-1zM628 304h1v1.5h-1zM629.5 304h1v1.5h-1zM638.5 304.5h1v1.5h-1zM644.5 304.5h1v1.5h-1zM646 309h1v1.5h-1zM647.5 309h1v1.5h-1zM665.5 305h1v1.5h-1zM667 309.5h1v1.5h-1zM674.5 309.5h1v1.5h-1zM680.5 305h1v1.5h-1zM685 309.5h1v1.5h-1zM695.5 305.5h1v1.5h-1zM701.5 305.5h1v1.5h-1zM706 305.5h1v1.5h-1zM707.5 305.5h1v1.5h-1zM709 310h1v1.5h-1zM719.5 310.5h1v1.5h-1zM721 306h1v1.5h-1zM730 306h1v1.5h-1zM733 306h1v1.5h-1zM734.5 306h1v1.5h-1zM740.5 306.5h1v1.5h-1zM751 311h1v1.5h-1zM758.5 311h1v1.5h-1zM760 311h1v1.5h-1zM766 307h1v1.5h-1zM767.5 311h1v1.5h-1zM772 307h1v1.5h-1zM773.5 311.5h1v1.5h-1zM779.5 307h1v1.5h-1zM791.5 307.5h1v1.5h-1zM800.5 312h1v1.5h-1zM809.5 312h1v1.5h-1zM826 312.5h1v1.5h-1zM827.5 312.5h1v1.5h-1zM829 312.5h1v1.5h-1zM835 312.5h1v1.5h-1zM839.5 308h1v1.5h-1zM844 312.5h1v1.5h-1zM853 308.5h1v1.5h-1zM853 313h1v1.5h-1zM854.5 313h1v1.5h-1zM862 313h1v1.5h-1zM871 313.5h1v1.5h-1zM874 309h1v1.5h-1zM887.5 309h1v1.5h-1zM892 313.5h1v1.5h-1zM893.5 309.5h1v1.5h-1zM895 313.5h1v1.5h-1zM902.5 314h1v1.5h-1zM907 309.5h1v1.5h-1zM911.5 309.5h1v1.5h-1zM913 314h1v1.5h-1zM925 310h1v1.5h-1zM926.5 314.5h1v1.5h-1zM928 314.5h1v1.5h-1zM932.5 310h1v1.5h-1zM938.5 310.5h1v1.5h-1zM940 315h1v1.5h-1zM946 315h1v1.5h-1zM952 310.5h1v1.5h-1zM955 315h1v1.5h-1zM961 315.5h1v1.5h-1zM971.5 315.5h1v1.5h-1zM973 311h1v1.5h-1zM974.5 311h1v1.5h-1zM974.5 315.5h1v1.5h-1zM976 311h1v1.5h-1zM982 311.5h1v1.5h-1zM983.5 316h1v1.5h-1zM986.5 311.5h1v1.5h-1zM991 316h1v1.5h-1zM995.5 316h1v1.5h-1zM1024 317h1v1.5h-1zM1025.5 312.5h1v1.5h-1zM1028.5 312.5h1v1.5h-1zM1030 317h1v1.5h-1zM1033 317h1v1.5h-1zM1036 317h1v1.5h-1zM1042 317h1v1.5h-1zM1048 317.5h1v1.5h-1zM1049.5 317.5h1v1.5h-1zM1051 313h1v1.5h-1zM1052.5 313h1v1.5h-1zM1052.5 317.5h1v1.5h-1zM1058.5 313h1v1.5h-1zM1060 313h1v1.5h-1zM1063 313.5h1v1.5h-1zM1069 318h1v1.5h-1zM1076.5 313.5h1v1.5h-1zM1078 313.5h1v1.5h-1zM1081 313.5h1v1.5h-1zM1085.5 314h1v1.5h-1zM1091.5 314h1v1.5h-1zM1105 314.5h1v1.5h-1zM1105 318.5h1v1.5h-1zM1108 314.5h1v1.5h-1zM1112.5 319h1v1.5h-1zM1117 314.5h1v1.5h-1zM1120 314.5h1v1.5h-1zM1129 319.5h1v1.5h-1zM1147 315.5h1v1.5h-1zM1147 319.5h1v1.5h-1zM1148.5 315.5h1v1.5h-1zM1156 320h1v1.5h-1zM1159 315.5h1v1.5h-1zM1160.5 315.5h1v1.5h-1zM1160.5 320h1v1.5h-1zM1168 316h1v1.5h-1zM1175.5 316h1v1.5h-1zM1192 316.5h1v1.5h-1zM1196.5 321h1v1.5h-1zM1204 321h1v1.5h-1zM1216 317h1v1.5h-1zM1217.5 317h1v1.5h-1zM1240 317.5h1v1.5h-1zM1246 322h1v1.5h-1zM1249 318h1v1.5h-1zM1253.5 318h1v1.5h-1zM1255 322.5h1v1.5h-1zM1282 318.5h1v1.5h-1zM1283.5 318.5h1v1.5h-1zM1283.5 323h1v1.5h-1zM1291 323h1v1.5h-1zM1301.5 323.5h1v1.5h-1zM1309 319h1v1.5h-1zM1315 319.5h1v1.5h-1zM1322.5 324h1v1.5h-1zM1331.5 319.5h1v1.5h-1zM1336 320h1v1.5h-1zM1337.5 320h1v1.5h-1zM1343.5 320h1v1.5h-1zM1343.5 324.5h1v1.5h-1zM1354 320.5h1v1.5h-1zM1357 320.5h1v1.5h-1zM1358.5 325h1v1.5h-1zM1366 320.5h1v1.5h-1zM1367.5 320.5h1v1.5h-1zM1372 325h1v1.5h-1zM1378 321h1v1.5h-1zM1379.5 321h1v1.5h-1zM1382.5 325.5h1v1.5h-1zM1391.5 325.5h1v1.5h-1zM1393 321h1v1.5h-1zM1400.5 326h1v1.5h-1zM1411 321.5h1v1.5h-1zM1415.5 326h1v1.5h-1zM1417 326h1v1.5h-1zM1420 326h1v1.5h-1zM1426 326.5h1v1.5h-1zM1432 322h1v1.5h-1zM1442.5 322.5h1v1.5h-1zM1445.5 322.5h1v1.5h-1zM1451.5 327h1v1.5h-1zM1456 322.5h1v1.5h-1zM1457.5 322.5h1v1.5h-1z"/>
<path fill="#9a9a9a" d="M377.5 299h1v1.5h-1zM379 303.5h1v1.5h-1zM380.5 299.5h1v1.5h-1zM383.5 299.5h1v1.5h-1zM385 304h1v1.5h-1zM386.5 299.5h1v1.5h-1zM388 299.5h1v1.5h-1zM394 304h1v1.5h-1zM397 304h1v1.5h-1zM404.5 299.5h1v1.5h-1zM406 300h1v1.5h-1zM407.5 300h1v1.5h-1zM407.5 304h1v1.5h-1zM410.5 300h1v1.5h-1zM410.5 304.5h1v1.5h-1zM412 300h1v1.5h-1zM413.5 300h1v1.5h-1zM413.5 304.5h1v1.5h-1zM416.5 300h1v1.5h-1zM416.5 304.5h1v1.5h-1zM419.5 304.5h1v1.5h-1zM421 304.5h1v1.5h-1zM422.5 300h1v1.5h-1zM424 300h1v1.5h-1zM424 304.5h1v1.5h-1zM428.5 304.5h1v1.5h-1zM430 304.5h1v1.5h-1zM431.5 304.5h1v1.5h-1zM433 300.5h1v1.5h-1zM434.5 300.5h1v1.5h-1zM437.5 300.5h1v1.5h-1zM440.5 305h1v1.5h-1zM442 305h1v1.5h-1zM445 305h1v1.5h-1zM446.5 300.5h1v1.5h-1zM448 305h1v1.5h-1zM451 300.5h1v1.5h-1zM454 300.5h1v1.5h-1zM455.5 300.5h1v1.5h-1zM455.5 305h1v1.5h-1zM458.5 305h1v1.5h-1zM460 305h1v1.5h-1zM463 301h1v1.5h-1zM472 301h1v1.5h-1zM478 301h1v1.5h-1zM479.5 305.5h1v1.5h-1zM481 305.5h1v1.5h-1zM484 305.5h1v1.5h-1zM485.5 301.5h1v1.5h-1zM487 306h1v1.5h-1zM488.5 306h1v1.5h-1zM493 301.5h1v1.5h-1zM493 306h1v1.5h-1zM496 301.5h1v1.5h-1zM496 306h1v1.5h-1zM497.5 301.5h1v1.5h-1zM499 301.5h1v1.5h-1zM499 306h1v1.5h-1zM505 301.5h1v1.5h-1zM506.5 306h1v1.5h-1zM508 302h1v1.5h-1zM511 302h1v1.5h-1zM512.5 302h1v1.5h-1zM512.5 306.5h1v1.5h-1zM514 306.5h1v1.5h-1zM517 302h1v1.5h-1zM518.5 306.5h1v1.5h-1zM520 302h1v1.5h-1zM524.5 302h1v1.5h-1zM526 306.5h1v1.5h-1zM532 302h1v1.5h-1zM533.5 302.5h1v1.5h-1zM535 306.5h1v1.5h-1zM536.5 302.5h1v1.5h-1zM536.5 306.5h1v1.5h-1zM544 302.5h1v1.5h-1zM544 307h1v1.5h-1zM545.5 302.5h1v1.5h-1zM545.5 307h1v1.5h-1zM547 302.5h1v1.5h-1zM547 307h1v1.5h-1zM548.5 302.5h1v1.5h-1zM548.5 307h1v1.5h-1zM551.5 302.5h1v1.5h-1zM551.5 307h1v1.5h-1zM553 307h1v1.5h-1zM554.5 307h1v1.5h-1zM556 302.5h1v1.5h-1zM559 303h1v1.5h-1zM559 307h1v1.5h-1zM560.5 303h1v1.5h-1zM562 303h1v1.5h-1zM563.5 303h1v1.5h-1zM563.5 307.5h1v1.5h-1zM565 303h1v1.5h-1zM565 307.5h1v1.5h-1zM566.5 303h1v1.5h-1zM569.5 303h1v1.5h-1zM571 303h1v1.5h-1zM571 307.5h1v1.5h-1zM572.5 307.5h1v1.5h-1zM578.5 303h1v1.5h-1zM578.5 307.5h1v1.5h-1zM581.5 307.5h1v1.5h-1zM583 303h1v1.5h-1zM584.5 307.5h1v1.5h-1zM586 307.5h1v1.5h-1zM587.5 303.5h1v1.5h-1zM587.5 307.5h1v1.5h-1zM589 303.5h1v1.5h-1zM589 308h1v1.5h-1zM590.5 308h1v1.5h-1zM592 308h1v1.5h-1zM593.5 303.5h1v1.5h-1zM593.5 308h1v1.5h-1zM595 303.5h1v1.5h-1zM595 308h1v1.5h-1zM596.5 303.5h1v1.5h-1zM598 303.5h1v1.5h-1zM604 308h1v1.5h-1zM610 304h1v1.5h-1zM610 308h1v1.5h-1zM611.5 308h1v1.5h-1zM613 304h1v1.5h-1zM614.5 304h1v1.5h-1zM616 304h1v1.5h-1zM616 308.5h1v1.5h-1zM617.5 304h1v1.5h-1zM622 308.5h1v1.5h-1zM625 304h1v1.5h-1zM628 308.5h1v1.5h-1zM632.5 304h1v1.5h-1zM632.5 308.5h1v1.5h-1zM634 308.5h1v1.5h-1zM635.5 304.5h1v1.5h-1zM635.5 308.5h1v1.5h-1zM637 304.5h1v1.5h-1zM637 308.5h1v1.5h-1zM638.5 308.5h1v1.5h-1zM640 304.5h1v1.5h-1zM640 308.5h1v1.5h-1zM641.5 304.5h1v1.5h-1zM647.5 304.5h1v1.5h-1zM650.5 309h1v1.5h-1zM652 304.5h1v1.5h-1zM652 309h1v1.5h-1zM653.5 309h1v1.5h-1zM655 304.5h1v1.5h-1zM656.5 304.5h1v1.5h-1zM658 304.5h1v1.5h-1zM659.5 304.5h1v1.5h-1zM661 305h1v1.5h-1zM670 305h1v1.5h-1zM670 309.5h1v1.5h-1zM671.5 305h1v1.5h-1zM671.5 309.5h1v1.5h-1zM677.5 305h1v1.5h-1zM677.5 309.5h1v1.5h-1zM683.5 305h1v1.5h-1zM683.5 309.5h1v1.5h-1zM685 305h1v1.5h-1zM688 305.5h1v1.5h-1zM689.5 305.5h1v1.5h-1zM689.5 309.5h1v1.5h-1zM700 310h1v1.5h-1zM703 305.5h1v1.5h-1zM703 310h1v1.5h-1zM704.5 305.5h1v1.5h-1zM704.5 310h1v1.5h-1zM706 310h1v1.5h-1zM709 305.5h1v1.5h-1zM712 306h1v1.5h-1zM713.5 310h1v1.5h-1zM715 306h1v1.5h-1zM715 310h1v1.5h-1zM718 310.5h1v1.5h-1zM727 306h1v1.5h-1zM728.5 306h1v1.5h-1zM728.5 310.5h1v1.5h-1zM734.5 310.5h1v1.5h-1zM736 306h1v1.5h-1zM736 310.5h1v1.5h-1zM737.5 310.5h1v1.5h-1zM742 306.5h1v1.5h-1zM742 310.5h1v1.5h-1zM743.5 306.5h1v1.5h-1zM743.5 311h1v1.5h-1zM748 311h1v1.5h-1zM749.5 306.5h1v1.5h-1zM751 306.5h1v1.5h-1zM752.5 311h1v1.5h-1zM754 306.5h1v1.5h-1zM754 311h1v1.5h-1zM757 306.5h1v1.5h-1zM763 306.5h1v1.5h-1zM764.5 307h1v1.5h-1zM764.5 311h1v1.5h-1zM766 311h1v1.5h-1zM767.5 307h1v1.5h-1zM770.5 307h1v1.5h-1zM772 311.5h1v1.5h-1zM775 307h1v1.5h-1zM778 307h1v1.5h-1zM778 311.5h1v1.5h-1zM781 311.5h1v1.5h-1zM782.5 311.5h1v1.5h-1zM784 307h1v1.5h-1zM785.5 307h1v1.5h-1zM785.5 311.5h1v1.5h-1zM787 307h1v1.5h-1zM787 311.5h1v1.5h-1zM788.5 307h1v1.5h-1zM790 307.5h1v1.5h-1zM790 311.5h1v1.5h-1zM791.5 311.5h1v1.5h-1zM793 307.5h1v1.5h-1zM794.5 307.5h1v1.5h-1zM797.5 307.5h1v1.5h-1zM799 307.5h1v1.5h-1zM799 312h1v1.5h-1zM802 312h1v1.5h-1zM803.5 307.5h1v1.5h-1zM803.5 312h1v1.5h-1zM805 307.5h1v1.5h-1zM808 307.5h1v1.5h-1zM808 312h1v1.5h-1zM811 307.5h1v1.5h-1zM815.5 308h1v1.5h-1zM815.5 312h1v1.5h-1zM817 308h1v1.5h-1zM818.5 308h1v1.5h-1zM821.5 312.5h1v1.5h-1zM824.5 312.5h1v1.5h-1zM826 308h1v1.5h-1zM829 308h1v1.5h-1zM830.5 308h1v1.5h-1zM833.5 308h1v1.5h-1zM836.5 312.5h1v1.5h-1zM838 308h1v1.5h-1zM839.5 312.5h1v1.5h-1zM842.5 308.5h1v1.5h-1zM844 308.5h1v1.5h-1zM847 313h1v1.5h-1zM848.5 308.5h1v1.5h-1zM848.5 313h1v1.5h-1zM850 313h1v1.5h-1zM851.5 308.5h1v1.5h-1zM851.5 313h1v1.5h-1zM856 308.5h1v1.5h-1zM857.5 308.5h1v1.5h-1zM857.5 313h1v1.5h-1zM859 308.5h1v1.5h-1zM860.5 313h1v1.5h-1zM863.5 308.5h1v1.5h-1zM868 309h1v1.5h-1zM868 313h1v1.5h-1zM869.5 313h1v1.5h-1zM871 309h1v1.5h-1zM875.5 313.5h1v1.5h-1zM877 309h1v1.5h-1zM878.5 313.5h1v1.5h-1zM880 313.5h1v1.5h-1zM881.5 313.5h1v1.5h-1zM883 309h1v1.5h-1zM883 313.5h1v1.5h-1zM884.5 313.5h1v1.5h-1zM887.5 313.5h1v1.5h-1zM889 309h1v1.5h-1zM890.5 309h1v1.5h-1zM890.5 313.5h1v1.5h-1zM892 309.5h1v1.5h-1zM893.5 313.5h1v1.5h-1zM896.5 309.5h1v1.5h-1zM898 314h1v1.5h-1zM901 314h1v1.5h-1zM904 309.5h1v1.5h-1zM904 314h1v1.5h-1zM905.5 309.5h1v1.5h-1zM908.5 309.5h1v1.5h-1zM908.5 314h1v1.5h-1zM911.5 314h1v1.5h-1zM914.5 310h1v1.5h-1zM916 310h1v1.5h-1zM917.5 310h1v1.5h-1zM919 310h1v1.5h-1zM920.5 310h1v1.5h-1zM920.5 314.5h1v1.5h-1zM923.5 310h1v1.5h-1zM928 310h1v1.5h-1zM929.5 310h1v1.5h-1zM932.5 314.5h1v1.5h-1zM934 314.5h1v1.5h-1zM935.5 314.5h1v1.5h-1zM937 310.5h1v1.5h-1zM937 314.5h1v1.5h-1zM938.5 314.5h1v1.5h-1zM940 310.5h1v1.5h-1zM941.5 315h1v1.5h-1zM943 315h1v1.5h-1zM944.5 310.5h1v1.5h-1zM947.5 315h1v1.5h-1zM950.5 310.5h1v1.5h-1zM953.5 310.5h1v1.5h-1zM953.5 315h1v1.5h-1zM955 310.5h1v1.5h-1zM956.5 315h1v1.5h-1zM962.5 315.5h1v1.5h-1zM964 311h1v1.5h-1zM964 315.5h1v1.5h-1zM965.5 311h1v1.5h-1zM968.5 311h1v1.5h-1zM970 311h1v1.5h-1zM970 315.5h1v1.5h-1zM973 315.5h1v1.5h-1zM977.5 315.5h1v1.5h-1zM979 311.5h1v1.5h-1zM979 315.5h1v1.5h-1zM985 311.5h1v1.5h-1zM986.5 316h1v1.5h-1zM988 311.5h1v1.5h-1zM988 316h1v1.5h-1zM989.5 311.5h1v1.5h-1zM991 311.5h1v1.5h-1zM992.5 311.5h1v1.5h-1zM997 311.5h1v1.5h-1zM997 316h1v1.5h-1zM998.5 312h1v1.5h-1zM1003 316.5h1v1.5h-1zM1004.5 316.5h1v1.5h-1zM1006 316.5h1v1.5h-1zM1010.5 312h1v1.5h-1zM1012 312h1v1.5h-1zM1013.5 316.5h1v1.5h-1zM1016.5 316.5h1v1.5h-1zM1021 312.5h1v1.5h-1zM1022.5 317h1v1.5h-1zM1024 312.5h1v1.5h-1zM1030 312.5h1v1.5h-1zM1033 312.5h1v1.5h-1zM1034.5 312.5h1v1.5h-1zM1036 312.5h1v1.5h-1zM1037.5 312.5h1v1.5h-1zM1037.5 317h1v1.5h-1zM1040.5 313h1v1.5h-1zM1040.5 317h1v1.5h-1zM1042 313h1v1.5h-1zM1043.5 313h1v1.5h-1zM1045 317.5h1v1.5h-1zM1046.5 313h1v1.5h-1zM1046.5 317.5h1v1.5h-1zM1049.5 313h1v1.5h-1zM1054 313h1v1.5h-1zM1054 317.5h1v1.5h-1zM1055.5 313h1v1.5h-1zM1057 313h1v1.5h-1zM1057 317.5h1v1.5h-1zM1058.5 317.5h1v1.5h-1zM1061.5 317.5h1v1.5h-1zM1066 313.5h1v1.5h-1zM1067.5 313.5h1v1.5h-1zM1067.5 318h1v1.5h-1zM1069 313.5h1v1.5h-1zM1070.5 313.5h1v1.5h-1zM1070.5 318h1v1.5h-1zM1072 313.5h1v1.5h-1zM1072 318h1v1.5h-1zM1078 318h1v1.5h-1zM1082.5 318h1v1.5h-1zM1084 314h1v1.5h-1zM1084 318h1v1.5h-1zM1087 314h1v1.5h-1zM1087 318.5h1v1.5h-1zM1090 314h1v1.5h-1zM1093 314h1v1.5h-1zM1093 318.5h1v1.5h-1zM1094.5 318.5h1v1.5h-1zM1096 314h1v1.5h-1zM1097.5 318.5h1v1.5h-1zM1100.5 314h1v1.5h-1zM1102 318.5h1v1.5h-1zM1106.5 314.5h1v1.5h-1zM1106.5 319h1v1.5h-1zM1108 319h1v1.5h-1zM1109.5 319h1v1.5h-1zM1114 314.5h1v1.5h-1zM1114 319h1v1.5h-1zM1118.5 314.5h1v1.5h-1zM1121.5 314.5h1v1.5h-1zM1121.5 319h1v1.5h-1zM1124.5 315h1v1.5h-1zM1126 315h1v1.5h-1zM1126 319h1v1.5h-1zM1127.5 319.5h1v1.5h-1zM1129 315h1v1.5h-1zM1138 315h1v1.5h-1zM1138 319.5h1v1.5h-1zM1139.5 315h1v1.5h-1zM1139.5 319.5h1v1.5h-1zM1141 315h1v1.5h-1zM1141 319.5h1v1.5h-1zM1142.5 315h1v1.5h-1zM1144 315.5h1v1.5h-1zM1150 315.5h1v1.5h-1zM1150 320h1v1.5h-1zM1151.5 315.5h1v1.5h-1zM1153 315.5h1v1.5h-1zM1153 320h1v1.5h-1zM1154.5 315.5h1v1.5h-1zM1154.5 320h1v1.5h-1zM1157.5 320h1v1.5h-1zM1159 320h1v1.5h-1zM1162 320h1v1.5h-1zM1163.5 320h1v1.5h-1zM1165 320h1v1.5h-1zM1166.5 316h1v1.5h-1zM1168 320h1v1.5h-1zM1171 316h1v1.5h-1zM1172.5 316h1v1.5h-1zM1174 316h1v1.5h-1zM1174 320.5h1v1.5h-1zM1175.5 320.5h1v1.5h-1zM1178.5 320.5h1v1.5h-1zM1180 316h1v1.5h-1zM1180 320.5h1v1.5h-1zM1181.5 316h1v1.5h-1zM1184.5 320.5h1v1.5h-1zM1186 316.5h1v1.5h-1zM1189 320.5h1v1.5h-1zM1190.5 321h1v1.5h-1zM1192 321h1v1.5h-1zM1193.5 321h1v1.5h-1zM1195 316.5h1v1.5h-1zM1196.5 316.5h1v1.5h-1zM1198 316.5h1v1.5h-1zM1199.5 321h1v1.5h-1zM1201 321h1v1.5h-1zM1202.5 316.5h1v1.5h-1zM1204 316.5h1v1.5h-1zM1207 317h1v1.5h-1zM1208.5 317h1v1.5h-1zM1208.5 321h1v1.5h-1zM1210 317h1v1.5h-1zM1210 321h1v1.5h-1zM1211.5 321.5h1v1.5h-1zM1213 317h1v1.5h-1zM1214.5 321.5h1v1.5h-1zM1216 321.5h1v1.5h-1zM1217.5 321.5h1v1.5h-1zM1219 321.5h1v1.5h-1zM1222 317h1v1.5h-1zM1223.5 317h1v1.5h-1zM1226.5 317h1v1.5h-1zM1226.5 321.5h1v1.5h-1zM1229.5 317.5h1v1.5h-1zM1229.5 321.5h1v1.5h-1zM1231 317.5h1v1.5h-1zM1232.5 317.5h1v1.5h-1zM1234 317.5h1v1.5h-1zM1235.5 317.5h1v1.5h-1zM1235.5 322h1v1.5h-1zM1237 317.5h1v1.5h-1zM1238.5 322h1v1.5h-1zM1243 322h1v1.5h-1zM1246 317.5h1v1.5h-1zM1247.5 322h1v1.5h-1zM1250.5 318h1v1.5h-1zM1252 318h1v1.5h-1zM1255 318h1v1.5h-1zM1256.5 318h1v1.5h-1zM1256.5 322.5h1v1.5h-1zM1258 322.5h1v1.5h-1zM1259.5 318h1v1.5h-1zM1261 318h1v1.5h-1zM1261 322.5h1v1.5h-1zM1262.5 318h1v1.5h-1zM1267 322.5h1v1.5h-1zM1268.5 322.5h1v1.5h-1zM1270 318.5h1v1.5h-1zM1271.5 318.5h1v1.5h-1zM1271.5 322.5h1v1.5h-1zM1273 322.5h1v1.5h-1zM1274.5 323h1v1.5h-1zM1276 318.5h1v1.5h-1zM1277.5 323h1v1.5h-1zM1280.5 323h1v1.5h-1zM1286.5 318.5h1v1.5h-1zM1288 323h1v1.5h-1zM1295.5 323.5h1v1.5h-1zM1297 319h1v1.5h-1zM1298.5 323.5h1v1.5h-1zM1300 319h1v1.5h-1zM1303 319h1v1.5h-1zM1303 323.5h1v1.5h-1zM1304.5 319h1v1.5h-1zM1304.5 323.5h1v1.5h-1zM1306 319h1v1.5h-1zM1307.5 319h1v1.5h-1zM1312 319.5h1v1.5h-1zM1313.5 323.5h1v1.5h-1zM1315 323.5h1v1.5h-1zM1316.5 324h1v1.5h-1zM1318 319.5h1v1.5h-1zM1318 324h1v1.5h-1zM1319.5 319.5h1v1.5h-1zM1321 319.5h1v1.5h-1zM1321 324h1v1.5h-1zM1322.5 319.5h1v1.5h-1zM1324 319.5h1v1.5h-1zM1324 324h1v1.5h-1zM1325.5 324h1v1.5h-1zM1327 319.5h1v1.5h-1zM1327 324h1v1.5h-1zM1328.5 319.5h1v1.5h-1zM1330 319.5h1v1.5h-1zM1333 320h1v1.5h-1zM1334.5 324h1v1.5h-1zM1337.5 324.5h1v1.5h-1zM1345 320h1v1.5h-1zM1345 324.5h1v1.5h-1zM1346.5 320h1v1.5h-1zM1346.5 324.5h1v1.5h-1zM1348 320h1v1.5h-1zM1348 324.5h1v1.5h-1zM1349.5 324.5h1v1.5h-1zM1354 324.5h1v1.5h-1zM1355.5 320.5h1v1.5h-1zM1355.5 324.5h1v1.5h-1zM1358.5 320.5h1v1.5h-1zM1360 325h1v1.5h-1zM1361.5 320.5h1v1.5h-1zM1363 320.5h1v1.5h-1zM1363 325h1v1.5h-1zM1364.5 320.5h1v1.5h-1zM1364.5 325h1v1.5h-1zM1370.5 325h1v1.5h-1zM1372 320.5h1v1.5h-1zM1376.5 321h1v1.5h-1zM1381 321h1v1.5h-1zM1381 325.5h1v1.5h-1zM1382.5 321h1v1.5h-1zM1387 321h1v1.5h-1zM1388.5 321h1v1.5h-1zM1390 321h1v1.5h-1zM1391.5 321h1v1.5h-1zM1393 325.5h1v1.5h-1zM1394.5 325.5h1v1.5h-1zM1397.5 325.5h1v1.5h-1zM1403.5 321.5h1v1.5h-1zM1403.5 326h1v1.5h-1zM1405 321.5h1v1.5h-1zM1406.5 321.5h1v1.5h-1zM1406.5 326h1v1.5h-1zM1409.5 321.5h1v1.5h-1zM1411 326h1v1.5h-1zM1412.5 321.5h1v1.5h-1zM1412.5 326h1v1.5h-1zM1415.5 321.5h1v1.5h-1zM1418.5 322h1v1.5h-1zM1420 322h1v1.5h-1zM1421.5 326.5h1v1.5h-1zM1424.5 322h1v1.5h-1zM1424.5 326.5h1v1.5h-1zM1426 322h1v1.5h-1zM1427.5 322h1v1.5h-1zM1430.5 322h1v1.5h-1zM1433.5 326.5h1v1.5h-1zM1435 326.5h1v1.5h-1zM1436.5 326.5h1v1.5h-1zM1438 322.5h1v1.5h-1zM1439.5 322.5h1v1.5h-1zM1442.5 327h1v1.5h-1zM1444 322.5h1v1.5h-1zM1448.5 322.5h1v1.5h-1zM1448.5 327h1v1.5h-1zM1450 322.5h1v1.5h-1zM1451.5 322.5h1v1.5h-1zM1457.5 327h1v1.5h-1zM1459 323h1v1.5h-1zM1460.5 323h1v1.5h-1zM1460.5 327h1v1.5h-1z"/>
<path fill="#b4b4b4" d="M377.5 301.5h1v1.5h-1zM383.5 301.5h1v1.5h-1zM386.5 301.5h1v1.5h-1zM391 301.5h1v1.5h-1zM392.5 301.5h1v1.5h-1zM394 301.5h1v1.5h-1zM395.5 302h1v1.5h-1zM401.5 302h1v1.5h-1zM407.5 302h1v1.5h-1zM409 302h1v1.5h-1zM410.5 302h1v1.5h-1zM415 302h1v1.5h-1zM419.5 302h1v1.5h-1zM421 302.5h1v1.5h-1zM422.5 302.5h1v1.5h-1zM428.5 302.5h1v1.5h-1zM430 302.5h1v1.5h-1zM433 302.5h1v1.5h-1zM445 302.5h1v1.5h-1zM446.5 303h1v1.5h-1zM448 303h1v1.5h-1zM451 303h1v1.5h-1zM455.5 303h1v1.5h-1zM467.5 303h1v1.5h-1zM470.5 303h1v1.5h-1zM472 303.5h1v1.5h-1zM476.5 303.5h1v1.5h-1zM478 303.5h1v1.5h-1zM482.5 303.5h1v1.5h-1zM487 303.5h1v1.5h-1zM493 303.5h1v1.5h-1zM494.5 303.5h1v1.5h-1zM499 304h1v1.5h-1zM503.5 304h1v1.5h-1zM511 304h1v1.5h-1zM514 304h1v1.5h-1zM520 304h1v1.5h-1zM521.5 304h1v1.5h-1zM524.5 304.5h1v1.5h-1zM526 304.5h1v1.5h-1zM530.5 304.5h1v1.5h-1zM532 304.5h1v1.5h-1zM536.5 304.5h1v1.5h-1zM538 304.5h1v1.5h-1zM544 304.5h1v1.5h-1zM548.5 305h1v1.5h-1zM551.5 305h1v1.5h-1zM557.5 305h1v1.5h-1zM559 305h1v1.5h-1zM560.5 305h1v1.5h-1zM562 305h1v1.5h-1zM566.5 305h1v1.5h-1zM568 305h1v1.5h-1zM571 305h1v1.5h-1zM572.5 305h1v1.5h-1zM574 305.5h1v1.5h-1zM575.5 305.5h1v1.5h-1zM580 305.5h1v1.5h-1zM583 305.5h1v1.5h-1zM584.5 305.5h1v1.5h-1zM587.5 305.5h1v1.5h-1zM590.5 305.5h1v1.5h-1zM592 305.5h1v1.5h-1zM593.5 305.5h1v1.5h-1zM595 305.5h1v1.5h-1zM598 305.5h1v1.5h-1zM599.5 306h1v1.5h-1zM601 306h1v1.5h-1zM605.5 306h1v1.5h-1zM610 306h1v1.5h-1zM613 306h1v1.5h-1zM616 306h1v1.5h-1zM617.5 306h1v1.5h-1zM620.5 306h1v1.5h-1zM622 306h1v1.5h-1zM623.5 306h1v1.5h-1zM625 306.5h1v1.5h-1zM626.5 306.5h1v1.5h-1zM628 306.5h1v1.5h-1zM632.5 306.5h1v1.5h-1zM637 306.5h1v1.5h-1zM638.5 306.5h1v1.5h-1zM644.5 306.5h1v1.5h-1zM646 306.5h1v1.5h-1zM664 307h1v1.5h-1zM667 307h1v1.5h-1zM668.5 307h1v1.5h-1zM670 307h1v1.5h-1zM673 307h1v1.5h-1zM679 307.5h1v1.5h-1zM688 307.5h1v1.5h-1zM689.5 307.5h1v1.5h-1zM694 307.5h1v1.5h-1zM695.5 307.5h1v1.5h-1zM697 307.5h1v1.5h-1zM698.5 307.5h1v1.5h-1zM707.5 308h1v1.5h-1zM710.5 308h1v1.5h-1zM713.5 308h1v1.5h-1zM718 308h1v1.5h-1zM719.5 308h1v1.5h-1zM722.5 308h1v1.5h-1zM724 308h1v1.5h-1zM727 308h1v1.5h-1zM731.5 308.5h1v1.5h-1zM737.5 308.5h1v1.5h-1zM743.5 308.5h1v1.5h-1zM745 308.5h1v1.5h-1zM746.5 308.5h1v1.5h-1zM748 308.5h1v1.5h-1zM749.5 308.5h1v1.5h-1zM754 309h1v1.5h-1zM755.5 309h1v1.5h-1zM758.5 309h1v1.5h-1zM760 309h1v1.5h-1zM763 309h1v1.5h-1zM769 309h1v1.5h-1zM775 309h1v1.5h-1zM776.5 309h1v1.5h-1zM779.5 309.5h1v1.5h-1zM787 309.5h1v1.5h-1zM788.5 309.5h1v1.5h-1zM796 309.5h1v1.5h-1zM797.5 309.5h1v1.5h-1zM799 309.5h1v1.5h-1zM800.5 309.5h1v1.5h-1zM805 310h1v1.5h-1zM809.5 310h1v1.5h-1zM814 310h1v1.5h-1zM815.5 310h1v1.5h-1zM818.5 310h1v1.5h-1zM820 310h1v1.5h-1zM821.5 310h1v1.5h-1zM824.5 310h1v1.5h-1zM826 310h1v1.5h-1zM827.5 310h1v1.5h-1zM836.5 310.5h1v1.5h-1zM839.5 310.5h1v1.5h-1zM842.5 310.5h1v1.5h-1zM844 310.5h1v1.5h-1zM845.5 310.5h1v1.5h-1zM848.5 310.5h1v1.5h-1zM850 310.5h1v1.5h-1zM851.5 310.5h1v1.5h-1zM853 310.5h1v1.5h-1zM856 311h1v1.5h-1zM857.5 311h1v1.5h-1zM863.5 311h1v1.5h-1zM866.5 311h1v1.5h-1zM869.5 311h1v1.5h-1zM872.5 311h1v1.5h-1zM874 311h1v1.5h-1zM875.5 311h1v1.5h-1zM883 311.5h1v1.5h-1zM886 311.5h1v1.5h-1zM889 311.5h1v1.5h-1zM890.5 311.5h1v1.5h-1zM892 311.5h1v1.5h-1zM893.5 311.5h1v1.5h-1zM899.5 311.5h1v1.5h-1zM901 311.5h1v1.5h-1zM902.5 311.5h1v1.5h-1zM905.5 312h1v1.5h-1zM907 312h1v1.5h-1zM910 312h1v1.5h-1zM911.5 312h1v1.5h-1zM913 312h1v1.5h-1zM916 312h1v1.5h-1zM919 312h1v1.5h-1zM922 312h1v1.5h-1zM925 312h1v1.5h-1zM926.5 312.5h1v1.5h-1zM928 312.5h1v1.5h-1zM929.5 312.5h1v1.5h-1zM931 312.5h1v1.5h-1zM934 312.5h1v1.5h-1zM935.5 312.5h1v1.5h-1zM937 312.5h1v1.5h-1zM938.5 312.5h1v1.5h-1zM943 312.5h1v1.5h-1zM944.5 312.5h1v1.5h-1zM946 312.5h1v1.5h-1zM947.5 313h1v1.5h-1zM953.5 313h1v1.5h-1zM956.5 313h1v1.5h-1zM959.5 313h1v1.5h-1zM961 313h1v1.5h-1zM965.5 313h1v1.5h-1zM967 313h1v1.5h-1zM971.5 313.5h1v1.5h-1zM974.5 313.5h1v1.5h-1zM980.5 313.5h1v1.5h-1zM982 313.5h1v1.5h-1zM985 313.5h1v1.5h-1zM989.5 314h1v1.5h-1zM994 314h1v1.5h-1zM997 314h1v1.5h-1zM998.5 314h1v1.5h-1zM1001.5 314h1v1.5h-1zM1006 314h1v1.5h-1zM1007.5 314h1v1.5h-1zM1009 314h1v1.5h-1zM1010.5 314.5h1v1.5h-1zM1012 314.5h1v1.5h-1zM1015 314.5h1v1.5h-1zM1018 314.5h1v1.5h-1zM1019.5 314.5h1v1.5h-1zM1025.5 314.5h1v1.5h-1zM1030 314.5h1v1.5h-1zM1033 315h1v1.5h-1zM1036 315h1v1.5h-1zM1037.5 315h1v1.5h-1zM1042 315h1v1.5h-1zM1043.5 315h1v1.5h-1zM1049.5 315h1v1.5h-1zM1051 315h1v1.5h-1zM1052.5 315.5h1v1.5h-1zM1057 315.5h1v1.5h-1zM1060 315.5h1v1.5h-1zM1066 315.5h1v1.5h-1zM1067.5 315.5h1v1.5h-1zM1069 315.5h1v1.5h-1zM1073.5 316h1v1.5h-1zM1075 316h1v1.5h-1zM1076.5 316h1v1.5h-1zM1079.5 316h1v1.5h-1zM1087 316h1v1.5h-1zM1088.5 316h1v1.5h-1zM1093 316h1v1.5h-1zM1094.5 316.5h1v1.5h-1zM1096 316.5h1v1.5h-1zM1097.5 316.5h1v1.5h-1zM1103.5 316.5h1v1.5h-1zM1105 316.5h1v1.5h-1zM1106.5 316.5h1v1.5h-1zM1109.5 316.5h1v1.5h-1zM1111 316.5h1v1.5h-1zM1112.5 316.5h1v1.5h-1zM1114 316.5h1v1.5h-1zM1117 317h1v1.5h-1zM1118.5 317h1v1.5h-1zM1120 317h1v1.5h-1zM1124.5 317h1v1.5h-1zM1126 317h1v1.5h-1zM1130.5 317h1v1.5h-1zM1132 317h1v1.5h-1zM1136.5 317.5h1v1.5h-1zM1144 317.5h1v1.5h-1zM1145.5 317.5h1v1.5h-1zM1148.5 317.5h1v1.5h-1zM1151.5 317.5h1v1.5h-1zM1153 317.5h1v1.5h-1zM1159 318h1v1.5h-1zM1165 318h1v1.5h-1zM1168 318h1v1.5h-1zM1177 318h1v1.5h-1zM1180 318.5h1v1.5h-1zM1184.5 318.5h1v1.5h-1zM1187.5 318.5h1v1.5h-1zM1192 318.5h1v1.5h-1zM1193.5 318.5h1v1.5h-1zM1202.5 319h1v1.5h-1zM1208.5 319h1v1.5h-1zM1217.5 319h1v1.5h-1zM1219 319h1v1.5h-1zM1220.5 319.5h1v1.5h-1zM1222 319.5h1v1.5h-1zM1225 319.5h1v1.5h-1zM1226.5 319.5h1v1.5h-1zM1229.5 319.5h1v1.5h-1zM1237 319.5h1v1.5h-1zM1238.5 319.5h1v1.5h-1zM1240 319.5h1v1.5h-1zM1241.5 320h1v1.5h-1zM1243 320h1v1.5h-1zM1246 320h1v1.5h-1zM1247.5 320h1v1.5h-1zM1249 320h1v1.5h-1zM1252 320h1v1.5h-1zM1256.5 320h1v1.5h-1zM1258 320h1v1.5h-1zM1259.5 320h1v1.5h-1zM1261 320h1v1.5h-1zM1262.5 320.5h1v1.5h-1zM1264 320.5h1v1.5h-1zM1276 320.5h1v1.5h-1zM1280.5 320.5h1v1.5h-1zM1282 321h1v1.5h-1zM1286.5 321h1v1.5h-1zM1288 321h1v1.5h-1zM1289.5 321h1v1.5h-1zM1291 321h1v1.5h-1zM1292.5 321h1v1.5h-1zM1294 321h1v1.5h-1zM1295.5 321h1v1.5h-1zM1297 321h1v1.5h-1zM1298.5 321h1v1.5h-1zM1303 321.5h1v1.5h-1zM1312 321.5h1v1.5h-1zM1316.5 321.5h1v1.5h-1zM1318 321.5h1v1.5h-1zM1327 322h1v1.5h-1zM1330 322h1v1.5h-1zM1336 322h1v1.5h-1zM1337.5 322h1v1.5h-1zM1345 322.5h1v1.5h-1zM1346.5 322.5h1v1.5h-1zM1348 322.5h1v1.5h-1zM1349.5 322.5h1v1.5h-1zM1351 322.5h1v1.5h-1zM1352.5 322.5h1v1.5h-1zM1354 322.5h1v1.5h-1zM1357 322.5h1v1.5h-1zM1358.5 322.5h1v1.5h-1zM1363 322.5h1v1.5h-1zM1369 323h1v1.5h-1zM1370.5 323h1v1.5h-1zM1373.5 323h1v1.5h-1zM1376.5 323h1v1.5h-1zM1381 323h1v1.5h-1zM1384 323h1v1.5h-1zM1385.5 323h1v1.5h-1zM1387 323.5h1v1.5h-1zM1388.5 323.5h1v1.5h-1zM1390 323.5h1v1.5h-1zM1394.5 323.5h1v1.5h-1zM1397.5 323.5h1v1.5h-1zM1400.5 323.5h1v1.5h-1zM1405 323.5h1v1.5h-1zM1406.5 323.5h1v1.5h-1zM1412.5 324h1v1.5h-1zM1415.5 324h1v1.5h-1zM1417 324h1v1.5h-1zM1420 324h1v1.5h-1zM1424.5 324h1v1.5h-1zM1426 324h1v1.5h-1zM1430.5 324.5h1v1.5h-1zM1433.5 324.5h1v1.5h-1zM1436.5 324.5h1v1.5h-1zM1438 324.5h1v1.5h-1zM1441 324.5h1v1.5h-1zM1450 325h1v1.5h-1zM1456 325h1v1.5h-1z"/>
<path fill="#5a5a5a" d="M475 293h1v1h-1zM621 295h1v1h-1zM405 291h1v1h-1zM484 294h1v1h-1zM635 293h1v1h-1zM596 297h1v1h-1zM500 294h1v1h-1zM574 292h1v1h-1zM589 293h1v1h-1zM429 293h1v1h-1zM422 289h1v1h-1zM599 294h1v1h-1zM456 290h1v1h-1zM429 292h1v1h-1zM400 288h1v1h-1zM500 291h1v1h-1zM592 294h1v1h-1zM637 294h1v1h-1zM623 292h1v1h-1zM420 289h1v1h-1zM454 292h1v1h-1zM482 290h1v1h-1zM414 291h1v1h-1zM431 288h1v1h-1zM519 292h1v1h-1zM525 291h1v1h-1zM481 292h1v1h-1zM579 293h1v1h-1zM613 295h1v1h-1zM604 293h1v1h-1zM538 294h1v1h-1zM536 295h1v1h-1zM423 292h1v1h-1zM430 293h1v1h-1zM572 293h1v1h-1zM548 295h1v1h-1zM573 292h1v1h-1zM549 295h1v1h-1zM536 294h1v1h-1zM465 293h1v1h-1zM608 294h1v1h-1zM624 296h1v1h-1zM463 292h1v1h-1zM414 292h1v1h-1zM530 293h1v1h-1zM618 294h1v1h-1zM553 293h1v1h-1zM588 295h1v1h-1zM400 288h1v1h-1zM590 296h1v1h-1zM427 292h1v1h-1zM558 295h1v1h-1zM405 290h1v1h-1zM401 292h1v1h-1zM492 294h1v1h-1zM401 292h1v1h-1zM459 292h1v1h-1zM499 293h1v1h-1zM478 294h1v1h-1zM601 293h1v1h-1zM518 295h1v1h-1zM456 289h1v1h-1zM510 294h1v1h-1zM597 292h1v1h-1zM429 291h1v1h-1zM535 295h1v1h-1zM477 291h1v1h-1zM562 293h1v1h-1zM549 294h1v1h-1zM417 293h1v1h-1zM382 334h1v1h-1zM373 356h1v1h-1zM380 338h1v1h-1zM383 349h1v1h-1zM381 366h1v1h-1zM376 379h1v1h-1zM373 374h1v1h-1zM374 366h1v1h-1zM378 346h1v1h-1zM380 317h1v1h-1zM375 366h1v1h-1zM381 329h1v1h-1zM373 348h1v1h-1zM383 333h1v1h-1zM376 331h1v1h-1zM382 343h1v1h-1zM377 367h1v1h-1zM373 357h1v1h-1zM378 316h1v1h-1zM374 355h1v1h-1zM383 315h1v1h-1zM374 325h1v1h-1zM375 318h1v1h-1zM379 331h1v1h-1zM376 357h1v1h-1z"/>
<path fill="#6a6a48" d="M371 297h1.5v1h-1.5zM368 297h1.5v1h-1.5zM365 297h1.5v1h-1.5zM371 298.5h1.5v1h-1.5zM369.5 302h1.5v1h-1.5zM366.5 303.5h1.5v1h-1.5zM369 306.5h1.5v1h-1.5zM367.5 313h1.5v1h-1.5zM369 314.5h1.5v1h-1.5zM366 316h1.5v1h-1.5zM370.5 318h1.5v1h-1.5zM369 318h1.5v1h-1.5zM367.5 318h1.5v1h-1.5zM366 318h1.5v1h-1.5zM367.5 319.5h1.5v1h-1.5zM366 319.5h1.5v1h-1.5zM370.5 321h1.5v1h-1.5zM367.5 321h1.5v1h-1.5zM363 321h1.5v1h-1.5zM365.5 327.5h1.5v1h-1.5zM364 327.5h1.5v1h-1.5zM367 329h1.5v1h-1.5zM368.5 330.5h1.5v1h-1.5zM368.5 332h1.5v1h-1.5zM370 335.5h1.5v1h-1.5zM365.5 335.5h1.5v1h-1.5zM368.5 337h1.5v1h-1.5zM367 338.5h1.5v1h-1.5zM367 340h1.5v1h-1.5zM370 342h1.5v1h-1.5zM367 342h1.5v1h-1.5zM365 345h1.5v1h-1.5zM368 346.5h1.5v1h-1.5zM368 350h1.5v1h-1.5zM368 351.5h1.5v1h-1.5zM368 353h1.5v1h-1.5zM365 354.5h1.5v1h-1.5zM368 356h1.5v1h-1.5zM368 359.5h1.5v1h-1.5zM366.5 361h1.5v1h-1.5zM369 364h1.5v1h-1.5zM363 367.5h1.5v1h-1.5zM367.5 370.5h1.5v1h-1.5zM364.5 370.5h1.5v1h-1.5zM369 375.5h1.5v1h-1.5zM369 377h1.5v1h-1.5zM364.5 377h1.5v1h-1.5zM369 382h1.5v1h-1.5zM367.5 382h1.5v1h-1.5zM363 382h1.5v1h-1.5zM367 383.5h1.5v1h-1.5zM364 388h1.5v1h-1.5zM362.5 390h1.5v1h-1.5zM364 391.5h1.5v1h-1.5zM367 393h1.5v1h-1.5zM368.5 394.5h1.5v1h-1.5zM367 394.5h1.5v1h-1.5zM364 394.5h1.5v1h-1.5zM367 396h1.5v1h-1.5zM364 396h1.5v1h-1.5zM367 398h1.5v1h-1.5zM362.5 398h1.5v1h-1.5zM365 402.5h1.5v1h-1.5zM363.5 402.5h1.5v1h-1.5zM368 406h1.5v1h-1.5zM366.5 406h1.5v1h-1.5zM366.5 407.5h1.5v1h-1.5zM363.5 409h1.5v1h-1.5zM366.5 410.5h1.5v1h-1.5zM366 422h1.5v1h-1.5zM366 423.5h1.5v1h-1.5zM367.5 425h1.5v1h-1.5zM361.5 426.5h1.5v1h-1.5zM363 428h1.5v1h-1.5zM366 433h1.5v1h-1.5zM364.5 433h1.5v1h-1.5zM360 433h1.5v1h-1.5zM364.5 434.5h1.5v1h-1.5zM367.5 436h1.5v1h-1.5zM364.5 436h1.5v1h-1.5zM363 436h1.5v1h-1.5zM367.5 438h1.5v1h-1.5zM367.5 439.5h1.5v1h-1.5zM365.5 441h1.5v1h-1.5zM364 441h1.5v1h-1.5zM367 447.5h1.5v1h-1.5zM362.5 447.5h1.5v1h-1.5zM367 449h1.5v1h-1.5zM364 450.5h1.5v1h-1.5zM364 452h1.5v1h-1.5zM365.5 457h1.5v1h-1.5zM361 457h1.5v1h-1.5zM367 458.5h1.5v1h-1.5zM366.5 460h1.5v1h-1.5zM366.5 462h1.5v1h-1.5zM362 466.5h1.5v1h-1.5zM363.5 468h1.5v1h-1.5zM366.5 471.5h1.5v1h-1.5zM365 471.5h1.5v1h-1.5zM360.5 471.5h1.5v1h-1.5zM365 473h1.5v1h-1.5zM362 473h1.5v1h-1.5zM362 474.5h1.5v1h-1.5zM365 476h1.5v1h-1.5zM363.5 476h1.5v1h-1.5zM362 476h1.5v1h-1.5zM360 479.5h1.5v1h-1.5zM363 482.5h1.5v1h-1.5zM361.5 482.5h1.5v1h-1.5zM366 486h1.5v1h-1.5zM364.5 486h1.5v1h-1.5zM363 486h1.5v1h-1.5zM364.5 487.5h1.5v1h-1.5zM363 487.5h1.5v1h-1.5zM361.5 487.5h1.5v1h-1.5zM360 489h1.5v1h-1.5zM363 490.5h1.5v1h-1.5zM361.5 490.5h1.5v1h-1.5zM366 492h1.5v1h-1.5zM359.5 498.5h1.5v1h-1.5zM358 498.5h1.5v1h-1.5zM365.5 500h1.5v1h-1.5zM362.5 500h1.5v1h-1.5zM361 500h1.5v1h-1.5zM359.5 502h1.5v1h-1.5zM361 503.5h1.5v1h-1.5zM359.5 503.5h1.5v1h-1.5zM361 505h1.5v1h-1.5zM365.5 506.5h1.5v1h-1.5zM362.5 506.5h1.5v1h-1.5zM364 508h1.5v1h-1.5zM359.5 511.5h1.5v1h-1.5zM362.5 514.5h1.5v1h-1.5zM365.5 516h1.5v1h-1.5zM364 516h1.5v1h-1.5zM361 516h1.5v1h-1.5zM363.5 524h1.5v1h-1.5zM359 526h1.5v1h-1.5zM362 527.5h1.5v1h-1.5zM365 529h1.5v1h-1.5zM363.5 529h1.5v1h-1.5zM357.5 529h1.5v1h-1.5zM359 532h1.5v1h-1.5zM363.5 534h1.5v1h-1.5zM362 534h1.5v1h-1.5zM357.5 534h1.5v1h-1.5zM363.5 535.5h1.5v1h-1.5zM360.5 535.5h1.5v1h-1.5zM361.5 537h1.5v1h-1.5zM364.5 540h1.5v1h-1.5zM360 542h1.5v1h-1.5zM363 543.5h1.5v1h-1.5zM364.5 545h1.5v1h-1.5zM363 546.5h1.5v1h-1.5zM364.5 550h1.5v1h-1.5zM363 550h1.5v1h-1.5zM364.5 551.5h1.5v1h-1.5zM361.5 551.5h1.5v1h-1.5zM363 553h1.5v1h-1.5zM361.5 553h1.5v1h-1.5zM364.5 554.5h1.5v1h-1.5zM362.5 556h1.5v1h-1.5zM364 558h1.5v1h-1.5zM361 558h1.5v1h-1.5zM364 559.5h1.5v1h-1.5zM361 559.5h1.5v1h-1.5zM359.5 561h1.5v1h-1.5zM364 562.5h1.5v1h-1.5zM359.5 564h1.5v1h-1.5zM359.5 566h1.5v1h-1.5zM356.5 569h1.5v1h-1.5zM362.5 570.5h1.5v1h-1.5zM363.5 575.5h1.5v1h-1.5zM363.5 577h1.5v1h-1.5zM362 577h1.5v1h-1.5zM363.5 580h1.5v1h-1.5zM360.5 583.5h1.5v1h-1.5zM357.5 586.5h1.5v1h-1.5zM362 588h1.5v1h-1.5zM356 588h1.5v1h-1.5zM360.5 593h1.5v1h-1.5zM363 598h1.5v1h-1.5zM361.5 602.5h1.5v1h-1.5zM360 602.5h1.5v1h-1.5zM355.5 602.5h1.5v1h-1.5zM363 604h1.5v1h-1.5zM361.5 604h1.5v1h-1.5zM360 604h1.5v1h-1.5zM360 607.5h1.5v1h-1.5zM363 609h1.5v1h-1.5zM358.5 609h1.5v1h-1.5zM363 610.5h1.5v1h-1.5zM360 610.5h1.5v1h-1.5zM358.5 610.5h1.5v1h-1.5zM362.5 614h1.5v1h-1.5zM359.5 614h1.5v1h-1.5zM355 614h1.5v1h-1.5zM361 615.5h1.5v1h-1.5zM361 617h1.5v1h-1.5zM356.5 620h1.5v1h-1.5zM361 622h1.5v1h-1.5zM356.5 622h1.5v1h-1.5zM361 625h1.5v1h-1.5zM361 626.5h1.5v1h-1.5zM358 626.5h1.5v1h-1.5zM356.5 628h1.5v1h-1.5zM362.5 630h1.5v1h-1.5zM359.5 630h1.5v1h-1.5zM362.5 631.5h1.5v1h-1.5zM361 631.5h1.5v1h-1.5zM362 633h1.5v1h-1.5zM357.5 634.5h1.5v1h-1.5zM360.5 636h1.5v1h-1.5zM357.5 636h1.5v1h-1.5zM362 638h1.5v1h-1.5zM360.5 638h1.5v1h-1.5zM357.5 639.5h1.5v1h-1.5zM360.5 641h1.5v1h-1.5zM362 644h1.5v1h-1.5zM360.5 644h1.5v1h-1.5zM359 646h1.5v1h-1.5zM360.5 647.5h1.5v1h-1.5zM359 647.5h1.5v1h-1.5zM360.5 649h1.5v1h-1.5zM360 652h1.5v1h-1.5zM360 654h1.5v1h-1.5zM358.5 655.5h1.5v1h-1.5zM361.5 660h1.5v1h-1.5zM357 660h1.5v1h-1.5zM355.5 660h1.5v1h-1.5zM361.5 662h1.5v1h-1.5zM360 662h1.5v1h-1.5zM357 662h1.5v1h-1.5zM360 663.5h1.5v1h-1.5zM357 666.5h1.5v1h-1.5zM354 666.5h1.5v1h-1.5zM361 671.5h1.5v1h-1.5zM358 671.5h1.5v1h-1.5zM355 671.5h1.5v1h-1.5zM359.5 676h1.5v1h-1.5zM356.5 678h1.5v1h-1.5zM361 682.5h1.5v1h-1.5zM358 686h1.5v1h-1.5zM359.5 687.5h1.5v1h-1.5zM359.5 689h1.5v1h-1.5zM360.5 692h1.5v1h-1.5zM353 692h1.5v1h-1.5zM359 695.5h1.5v1h-1.5zM359 697h1.5v1h-1.5zM357.5 698.5h1.5v1h-1.5zM356 698.5h1.5v1h-1.5zM356 700h1.5v1h-1.5zM357.5 703.5h1.5v1h-1.5zM354.5 703.5h1.5v1h-1.5zM356 706.5h1.5v1h-1.5zM359 708h1.5v1h-1.5zM354 710h1.5v1h-1.5zM352.5 713h1.5v1h-1.5zM357 714.5h1.5v1h-1.5zM355.5 714.5h1.5v1h-1.5zM360 716h1.5v1h-1.5zM360 719.5h1.5v1h-1.5zM357 722.5h1.5v1h-1.5zM358.5 724h1.5v1h-1.5zM355.5 726h1.5v1h-1.5zM354 726h1.5v1h-1.5zM358 729h1.5v1h-1.5zM356.5 732h1.5v1h-1.5zM359.5 734h1.5v1h-1.5zM356.5 734h1.5v1h-1.5zM353.5 735.5h1.5v1h-1.5zM358 737h1.5v1h-1.5zM353.5 737h1.5v1h-1.5zM359.5 742h1.5v1h-1.5zM359.5 743.5h1.5v1h-1.5zM358 745h1.5v1h-1.5zM357.5 748h1.5v1h-1.5zM353 750h1.5v1h-1.5zM359 751.5h1.5v1h-1.5zM351.5 751.5h1.5v1h-1.5zM359 753h1.5v1h-1.5zM356 766h1.5v1h-1.5zM358.5 767.5h1.5v1h-1.5zM354 769h1.5v1h-1.5zM355.5 770.5h1.5v1h-1.5zM357 774h1.5v1h-1.5zM354 777h1.5v1h-1.5zM357 778.5h1.5v1h-1.5zM355.5 780h1.5v1h-1.5zM354 780h1.5v1h-1.5zM357 782h1.5v1h-1.5zM355.5 782h1.5v1h-1.5zM354 783.5h1.5v1h-1.5zM355 786.5h1.5v1h-1.5zM350.5 786.5h1.5v1h-1.5zM356.5 788h1.5v1h-1.5zM355 791.5h1.5v1h-1.5zM352 791.5h1.5v1h-1.5zM356.5 796h1.5v1h-1.5zM358 801h1.5v1h-1.5zM358 804h1.5v1h-1.5zM351.5 807.5h1.5v1h-1.5z"/>
<path fill="#e4e4a0" d="M366.5 297h1.5v1h-1.5zM368 298.5h1.5v1h-1.5zM366.5 298.5h1.5v1h-1.5zM371 302h1.5v1h-1.5zM368 302h1.5v1h-1.5zM363.5 302h1.5v1h-1.5zM371 303.5h1.5v1h-1.5zM369.5 303.5h1.5v1h-1.5zM369 308h1.5v1h-1.5zM370.5 310h1.5v1h-1.5zM369 310h1.5v1h-1.5zM370.5 313h1.5v1h-1.5zM370.5 314.5h1.5v1h-1.5zM370.5 316h1.5v1h-1.5zM367.5 316h1.5v1h-1.5zM364.5 316h1.5v1h-1.5zM370.5 319.5h1.5v1h-1.5zM369 319.5h1.5v1h-1.5zM370.5 322.5h1.5v1h-1.5zM364.5 324h1.5v1h-1.5zM365.5 326h1.5v1h-1.5zM370 327.5h1.5v1h-1.5zM370 329h1.5v1h-1.5zM368.5 329h1.5v1h-1.5zM367 330.5h1.5v1h-1.5zM365.5 330.5h1.5v1h-1.5zM362.5 332h1.5v1h-1.5zM367 334h1.5v1h-1.5zM364 334h1.5v1h-1.5zM362.5 335.5h1.5v1h-1.5zM370 337h1.5v1h-1.5zM365.5 338.5h1.5v1h-1.5zM370 340h1.5v1h-1.5zM368.5 340h1.5v1h-1.5zM364 340h1.5v1h-1.5zM370 343.5h1.5v1h-1.5zM367 343.5h1.5v1h-1.5zM369.5 345h1.5v1h-1.5zM368 345h1.5v1h-1.5zM369.5 346.5h1.5v1h-1.5zM366.5 346.5h1.5v1h-1.5zM365 346.5h1.5v1h-1.5zM368 348h1.5v1h-1.5zM369.5 350h1.5v1h-1.5zM366.5 350h1.5v1h-1.5zM369.5 351.5h1.5v1h-1.5zM366.5 351.5h1.5v1h-1.5zM362 351.5h1.5v1h-1.5zM365 353h1.5v1h-1.5zM368 354.5h1.5v1h-1.5zM366.5 356h1.5v1h-1.5zM368 358h1.5v1h-1.5zM365 358h1.5v1h-1.5zM369.5 359.5h1.5v1h-1.5zM366.5 359.5h1.5v1h-1.5zM369.5 361h1.5v1h-1.5zM368 361h1.5v1h-1.5zM369.5 362.5h1.5v1h-1.5zM368 362.5h1.5v1h-1.5zM366 364h1.5v1h-1.5zM367.5 366h1.5v1h-1.5zM366 367.5h1.5v1h-1.5zM364.5 372h1.5v1h-1.5zM369 374h1.5v1h-1.5zM366 377h1.5v1h-1.5zM369 378.5h1.5v1h-1.5zM367.5 378.5h1.5v1h-1.5zM364.5 380h1.5v1h-1.5zM364.5 382h1.5v1h-1.5zM365.5 383.5h1.5v1h-1.5zM365.5 386.5h1.5v1h-1.5zM364 386.5h1.5v1h-1.5zM368.5 388h1.5v1h-1.5zM367 388h1.5v1h-1.5zM367 391.5h1.5v1h-1.5zM368.5 393h1.5v1h-1.5zM365.5 396h1.5v1h-1.5zM361 396h1.5v1h-1.5zM368.5 398h1.5v1h-1.5zM368.5 399.5h1.5v1h-1.5zM368.5 401h1.5v1h-1.5zM367 401h1.5v1h-1.5zM365.5 401h1.5v1h-1.5zM368 402.5h1.5v1h-1.5zM365 406h1.5v1h-1.5zM368 409h1.5v1h-1.5zM366.5 409h1.5v1h-1.5zM362 409h1.5v1h-1.5zM366.5 412h1.5v1h-1.5zM365 414h1.5v1h-1.5zM362 414h1.5v1h-1.5zM368 415.5h1.5v1h-1.5zM363.5 415.5h1.5v1h-1.5zM366.5 417h1.5v1h-1.5zM365 417h1.5v1h-1.5zM360.5 417h1.5v1h-1.5zM368 418.5h1.5v1h-1.5zM365 418.5h1.5v1h-1.5zM363.5 418.5h1.5v1h-1.5zM368 420h1.5v1h-1.5zM363.5 420h1.5v1h-1.5zM367.5 422h1.5v1h-1.5zM364.5 423.5h1.5v1h-1.5zM366 425h1.5v1h-1.5zM364.5 425h1.5v1h-1.5zM361.5 425h1.5v1h-1.5zM367.5 426.5h1.5v1h-1.5zM367.5 428h1.5v1h-1.5zM366 428h1.5v1h-1.5zM366 430h1.5v1h-1.5zM360 430h1.5v1h-1.5zM367.5 433h1.5v1h-1.5zM363 434.5h1.5v1h-1.5zM367 441h1.5v1h-1.5zM362.5 442.5h1.5v1h-1.5zM361 442.5h1.5v1h-1.5zM365.5 444h1.5v1h-1.5zM364 444h1.5v1h-1.5zM362.5 444h1.5v1h-1.5zM367 446h1.5v1h-1.5zM365.5 446h1.5v1h-1.5zM362.5 446h1.5v1h-1.5zM359.5 446h1.5v1h-1.5zM364 447.5h1.5v1h-1.5zM365.5 450.5h1.5v1h-1.5zM362.5 452h1.5v1h-1.5zM361 452h1.5v1h-1.5zM365.5 455.5h1.5v1h-1.5zM362.5 455.5h1.5v1h-1.5zM361 455.5h1.5v1h-1.5zM359.5 455.5h1.5v1h-1.5zM359.5 457h1.5v1h-1.5zM365.5 458.5h1.5v1h-1.5zM363.5 460h1.5v1h-1.5zM365 462h1.5v1h-1.5zM363.5 462h1.5v1h-1.5zM366.5 465h1.5v1h-1.5zM363.5 465h1.5v1h-1.5zM366.5 470h1.5v1h-1.5zM365 470h1.5v1h-1.5zM363.5 470h1.5v1h-1.5zM360.5 470h1.5v1h-1.5zM363.5 471.5h1.5v1h-1.5zM366.5 473h1.5v1h-1.5zM366.5 474.5h1.5v1h-1.5zM363.5 474.5h1.5v1h-1.5zM366.5 476h1.5v1h-1.5zM360.5 476h1.5v1h-1.5zM366.5 478h1.5v1h-1.5zM365 478h1.5v1h-1.5zM364.5 479.5h1.5v1h-1.5zM364.5 482.5h1.5v1h-1.5zM366 484h1.5v1h-1.5zM361.5 484h1.5v1h-1.5zM360 486h1.5v1h-1.5zM366 487.5h1.5v1h-1.5zM366 490.5h1.5v1h-1.5zM364.5 492h1.5v1h-1.5zM361.5 492h1.5v1h-1.5zM363 494h1.5v1h-1.5zM365.5 498.5h1.5v1h-1.5zM364 498.5h1.5v1h-1.5zM362.5 498.5h1.5v1h-1.5zM364 503.5h1.5v1h-1.5zM362.5 503.5h1.5v1h-1.5zM361 508h1.5v1h-1.5zM358 508h1.5v1h-1.5zM365.5 510h1.5v1h-1.5zM364 510h1.5v1h-1.5zM362.5 510h1.5v1h-1.5zM362.5 511.5h1.5v1h-1.5zM364 513h1.5v1h-1.5zM362.5 513h1.5v1h-1.5zM365.5 514.5h1.5v1h-1.5zM361 514.5h1.5v1h-1.5zM362.5 516h1.5v1h-1.5zM365 518h1.5v1h-1.5zM363.5 518h1.5v1h-1.5zM362 518h1.5v1h-1.5zM357.5 518h1.5v1h-1.5zM359 519.5h1.5v1h-1.5zM365 526h1.5v1h-1.5zM362 526h1.5v1h-1.5zM360.5 526h1.5v1h-1.5zM362 529h1.5v1h-1.5zM362 530.5h1.5v1h-1.5zM365 532h1.5v1h-1.5zM362 532h1.5v1h-1.5zM360.5 532h1.5v1h-1.5zM363 538.5h1.5v1h-1.5zM358.5 538.5h1.5v1h-1.5zM361.5 540h1.5v1h-1.5zM363 545h1.5v1h-1.5zM357 545h1.5v1h-1.5zM364.5 546.5h1.5v1h-1.5zM361.5 546.5h1.5v1h-1.5zM360 546.5h1.5v1h-1.5zM358.5 551.5h1.5v1h-1.5zM364.5 553h1.5v1h-1.5zM362.5 562.5h1.5v1h-1.5zM364 567.5h1.5v1h-1.5zM358 570.5h1.5v1h-1.5zM362.5 572h1.5v1h-1.5zM358 572h1.5v1h-1.5zM362.5 574h1.5v1h-1.5zM360.5 577h1.5v1h-1.5zM359 577h1.5v1h-1.5zM360.5 578.5h1.5v1h-1.5zM356 578.5h1.5v1h-1.5zM362 580h1.5v1h-1.5zM360.5 580h1.5v1h-1.5zM362 583.5h1.5v1h-1.5zM363.5 585h1.5v1h-1.5zM360.5 585h1.5v1h-1.5zM359 585h1.5v1h-1.5zM359 588h1.5v1h-1.5zM360.5 590h1.5v1h-1.5zM359 593h1.5v1h-1.5zM360 594.5h1.5v1h-1.5zM357 594.5h1.5v1h-1.5zM355.5 594.5h1.5v1h-1.5zM360 596h1.5v1h-1.5zM358.5 596h1.5v1h-1.5zM357 596h1.5v1h-1.5zM361.5 598h1.5v1h-1.5zM363 601h1.5v1h-1.5zM361.5 601h1.5v1h-1.5zM358.5 602.5h1.5v1h-1.5zM361.5 606h1.5v1h-1.5zM360 606h1.5v1h-1.5zM358.5 606h1.5v1h-1.5zM357 607.5h1.5v1h-1.5zM355.5 609h1.5v1h-1.5zM360 612h1.5v1h-1.5zM359.5 615.5h1.5v1h-1.5zM359.5 617h1.5v1h-1.5zM356.5 617h1.5v1h-1.5zM362.5 618.5h1.5v1h-1.5zM361 618.5h1.5v1h-1.5zM358 620h1.5v1h-1.5zM362.5 622h1.5v1h-1.5zM359.5 622h1.5v1h-1.5zM358 622h1.5v1h-1.5zM362.5 623.5h1.5v1h-1.5zM359.5 625h1.5v1h-1.5zM359.5 626.5h1.5v1h-1.5zM356.5 626.5h1.5v1h-1.5zM359 633h1.5v1h-1.5zM357.5 633h1.5v1h-1.5zM360.5 634.5h1.5v1h-1.5zM359 634.5h1.5v1h-1.5zM360.5 639.5h1.5v1h-1.5zM356 639.5h1.5v1h-1.5zM362 641h1.5v1h-1.5zM359 641h1.5v1h-1.5zM362 642.5h1.5v1h-1.5zM359 642.5h1.5v1h-1.5zM362 646h1.5v1h-1.5zM357.5 646h1.5v1h-1.5zM362 647.5h1.5v1h-1.5zM359 649h1.5v1h-1.5zM362 650.5h1.5v1h-1.5zM358.5 654h1.5v1h-1.5zM360 657h1.5v1h-1.5zM360 658.5h1.5v1h-1.5zM358.5 665h1.5v1h-1.5zM361.5 666.5h1.5v1h-1.5zM360 666.5h1.5v1h-1.5zM355.5 666.5h1.5v1h-1.5zM361.5 668h1.5v1h-1.5zM360 668h1.5v1h-1.5zM357 668h1.5v1h-1.5zM358.5 670h1.5v1h-1.5zM357 670h1.5v1h-1.5zM355.5 670h1.5v1h-1.5zM359.5 671.5h1.5v1h-1.5zM359.5 674.5h1.5v1h-1.5zM359.5 678h1.5v1h-1.5zM355 678h1.5v1h-1.5zM361 679.5h1.5v1h-1.5zM358 679.5h1.5v1h-1.5zM358 681h1.5v1h-1.5zM359.5 682.5h1.5v1h-1.5zM358 684h1.5v1h-1.5zM355 684h1.5v1h-1.5zM361 686h1.5v1h-1.5zM361 689h1.5v1h-1.5zM358 689h1.5v1h-1.5zM356.5 689h1.5v1h-1.5zM356 692h1.5v1h-1.5zM354.5 692h1.5v1h-1.5zM359 694h1.5v1h-1.5zM357.5 694h1.5v1h-1.5zM360.5 695.5h1.5v1h-1.5zM360.5 698.5h1.5v1h-1.5zM359 698.5h1.5v1h-1.5zM359 700h1.5v1h-1.5zM359 702h1.5v1h-1.5zM357.5 702h1.5v1h-1.5zM357.5 705h1.5v1h-1.5zM354.5 705h1.5v1h-1.5zM359 706.5h1.5v1h-1.5zM357.5 706.5h1.5v1h-1.5zM354.5 706.5h1.5v1h-1.5zM360.5 708h1.5v1h-1.5zM357 710h1.5v1h-1.5zM358.5 711.5h1.5v1h-1.5zM354 711.5h1.5v1h-1.5zM360 713h1.5v1h-1.5zM357 713h1.5v1h-1.5zM358.5 714.5h1.5v1h-1.5zM358.5 716h1.5v1h-1.5zM355.5 716h1.5v1h-1.5zM358.5 718h1.5v1h-1.5zM357 718h1.5v1h-1.5zM355.5 719.5h1.5v1h-1.5zM357 724h1.5v1h-1.5zM360 726h1.5v1h-1.5zM357 726h1.5v1h-1.5zM352.5 726h1.5v1h-1.5zM357 727.5h1.5v1h-1.5zM356.5 729h1.5v1h-1.5zM359.5 730.5h1.5v1h-1.5zM356.5 730.5h1.5v1h-1.5zM352 730.5h1.5v1h-1.5zM359.5 732h1.5v1h-1.5zM356.5 735.5h1.5v1h-1.5zM359.5 737h1.5v1h-1.5zM356.5 738.5h1.5v1h-1.5zM355 738.5h1.5v1h-1.5zM358 740h1.5v1h-1.5zM358 743.5h1.5v1h-1.5zM353.5 743.5h1.5v1h-1.5zM355 746.5h1.5v1h-1.5zM359 750h1.5v1h-1.5zM357.5 750h1.5v1h-1.5zM356 750h1.5v1h-1.5zM357.5 751.5h1.5v1h-1.5zM356 751.5h1.5v1h-1.5zM353 751.5h1.5v1h-1.5zM359 754.5h1.5v1h-1.5zM354.5 754.5h1.5v1h-1.5zM359 756h1.5v1h-1.5zM353 756h1.5v1h-1.5zM357.5 758h1.5v1h-1.5zM359 761h1.5v1h-1.5zM356 761h1.5v1h-1.5zM359 762.5h1.5v1h-1.5zM354.5 762.5h1.5v1h-1.5zM359 764h1.5v1h-1.5zM354.5 764h1.5v1h-1.5zM357.5 766h1.5v1h-1.5zM353 766h1.5v1h-1.5zM357 767.5h1.5v1h-1.5zM358.5 769h1.5v1h-1.5zM355.5 769h1.5v1h-1.5zM355.5 774h1.5v1h-1.5zM352.5 774h1.5v1h-1.5zM358.5 777h1.5v1h-1.5zM355.5 777h1.5v1h-1.5zM354 778.5h1.5v1h-1.5zM357 780h1.5v1h-1.5zM358.5 783.5h1.5v1h-1.5zM354 785h1.5v1h-1.5zM352 786.5h1.5v1h-1.5zM358 788h1.5v1h-1.5zM358 791.5h1.5v1h-1.5zM358 793h1.5v1h-1.5zM355 793h1.5v1h-1.5zM355 794.5h1.5v1h-1.5zM358 796h1.5v1h-1.5zM353.5 796h1.5v1h-1.5zM355 799.5h1.5v1h-1.5zM356.5 801h1.5v1h-1.5zM352 801h1.5v1h-1.5zM356.5 802.5h1.5v1h-1.5zM353.5 804h1.5v1h-1.5zM356 806h1.5v1h-1.5zM353 806h1.5v1h-1.5zM351.5 806h1.5v1h-1.5z"/>
<path fill="#b0b070" d="M369.5 298.5h1.5v1h-1.5zM371 300h1.5v1h-1.5zM369.5 300h1.5v1h-1.5zM365 300h1.5v1h-1.5zM366.5 302h1.5v1h-1.5zM368 303.5h1.5v1h-1.5zM365 303.5h1.5v1h-1.5zM369.5 305h1.5v1h-1.5zM368 305h1.5v1h-1.5zM370.5 306.5h1.5v1h-1.5zM367.5 306.5h1.5v1h-1.5zM366 306.5h1.5v1h-1.5zM367.5 308h1.5v1h-1.5zM364.5 308h1.5v1h-1.5zM363 308h1.5v1h-1.5zM367.5 310h1.5v1h-1.5zM366 310h1.5v1h-1.5zM370.5 311.5h1.5v1h-1.5zM367.5 311.5h1.5v1h-1.5zM366 311.5h1.5v1h-1.5zM369 313h1.5v1h-1.5zM366 313h1.5v1h-1.5zM367.5 314.5h1.5v1h-1.5zM366 314.5h1.5v1h-1.5zM364.5 314.5h1.5v1h-1.5zM364.5 319.5h1.5v1h-1.5zM369 321h1.5v1h-1.5zM369 322.5h1.5v1h-1.5zM367.5 322.5h1.5v1h-1.5zM366 322.5h1.5v1h-1.5zM366 324h1.5v1h-1.5zM370 326h1.5v1h-1.5zM367 327.5h1.5v1h-1.5zM365.5 329h1.5v1h-1.5zM364 329h1.5v1h-1.5zM370 330.5h1.5v1h-1.5zM364 330.5h1.5v1h-1.5zM367 332h1.5v1h-1.5zM370 334h1.5v1h-1.5zM368.5 335.5h1.5v1h-1.5zM367 335.5h1.5v1h-1.5zM367 337h1.5v1h-1.5zM368.5 338.5h1.5v1h-1.5zM365.5 340h1.5v1h-1.5zM368.5 342h1.5v1h-1.5zM365.5 343.5h1.5v1h-1.5zM364 343.5h1.5v1h-1.5zM366.5 345h1.5v1h-1.5zM366.5 348h1.5v1h-1.5zM365 348h1.5v1h-1.5zM362 348h1.5v1h-1.5zM366.5 353h1.5v1h-1.5zM363.5 353h1.5v1h-1.5zM362 353h1.5v1h-1.5zM362 354.5h1.5v1h-1.5zM369.5 358h1.5v1h-1.5zM366.5 358h1.5v1h-1.5zM365 361h1.5v1h-1.5zM367.5 364h1.5v1h-1.5zM369 366h1.5v1h-1.5zM369 367.5h1.5v1h-1.5zM367.5 367.5h1.5v1h-1.5zM364.5 367.5h1.5v1h-1.5zM369 369h1.5v1h-1.5zM367.5 369h1.5v1h-1.5zM366 369h1.5v1h-1.5zM369 372h1.5v1h-1.5zM366 374h1.5v1h-1.5zM363 374h1.5v1h-1.5zM361.5 374h1.5v1h-1.5zM367.5 377h1.5v1h-1.5zM364.5 378.5h1.5v1h-1.5zM369 380h1.5v1h-1.5zM366 380h1.5v1h-1.5zM363 380h1.5v1h-1.5zM366 382h1.5v1h-1.5zM368.5 383.5h1.5v1h-1.5zM364 383.5h1.5v1h-1.5zM361 383.5h1.5v1h-1.5zM367 385h1.5v1h-1.5zM365.5 385h1.5v1h-1.5zM364 385h1.5v1h-1.5zM362.5 385h1.5v1h-1.5zM368.5 386.5h1.5v1h-1.5zM367 386.5h1.5v1h-1.5zM362.5 386.5h1.5v1h-1.5zM365.5 388h1.5v1h-1.5zM368.5 390h1.5v1h-1.5zM367 390h1.5v1h-1.5zM364 390h1.5v1h-1.5zM368.5 391.5h1.5v1h-1.5zM365.5 391.5h1.5v1h-1.5zM364 393h1.5v1h-1.5zM362.5 393h1.5v1h-1.5zM361 393h1.5v1h-1.5zM365.5 394.5h1.5v1h-1.5zM362.5 394.5h1.5v1h-1.5zM368.5 396h1.5v1h-1.5zM362.5 396h1.5v1h-1.5zM365.5 398h1.5v1h-1.5zM364 398h1.5v1h-1.5zM364 399.5h1.5v1h-1.5zM368 404h1.5v1h-1.5zM366.5 404h1.5v1h-1.5zM365 404h1.5v1h-1.5zM363.5 404h1.5v1h-1.5zM368 407.5h1.5v1h-1.5zM365 407.5h1.5v1h-1.5zM368 410.5h1.5v1h-1.5zM365 410.5h1.5v1h-1.5zM363.5 410.5h1.5v1h-1.5zM360.5 410.5h1.5v1h-1.5zM368 412h1.5v1h-1.5zM365 412h1.5v1h-1.5zM368 414h1.5v1h-1.5zM363.5 414h1.5v1h-1.5zM366.5 415.5h1.5v1h-1.5zM365 415.5h1.5v1h-1.5zM366.5 420h1.5v1h-1.5zM362 420h1.5v1h-1.5zM364.5 422h1.5v1h-1.5zM361.5 422h1.5v1h-1.5zM367.5 423.5h1.5v1h-1.5zM366 426.5h1.5v1h-1.5zM364.5 428h1.5v1h-1.5zM367.5 430h1.5v1h-1.5zM364.5 430h1.5v1h-1.5zM367.5 431.5h1.5v1h-1.5zM366 431.5h1.5v1h-1.5zM364.5 431.5h1.5v1h-1.5zM363 431.5h1.5v1h-1.5zM361.5 431.5h1.5v1h-1.5zM361.5 433h1.5v1h-1.5zM367.5 434.5h1.5v1h-1.5zM366 434.5h1.5v1h-1.5zM364.5 438h1.5v1h-1.5zM361.5 438h1.5v1h-1.5zM366 439.5h1.5v1h-1.5zM364.5 439.5h1.5v1h-1.5zM363 439.5h1.5v1h-1.5zM361.5 439.5h1.5v1h-1.5zM367 442.5h1.5v1h-1.5zM364 442.5h1.5v1h-1.5zM364 446h1.5v1h-1.5zM365.5 447.5h1.5v1h-1.5zM365.5 449h1.5v1h-1.5zM364 449h1.5v1h-1.5zM367 450.5h1.5v1h-1.5zM359.5 450.5h1.5v1h-1.5zM367 452h1.5v1h-1.5zM365.5 452h1.5v1h-1.5zM367 454h1.5v1h-1.5zM367 455.5h1.5v1h-1.5zM364 455.5h1.5v1h-1.5zM364 458.5h1.5v1h-1.5zM362.5 458.5h1.5v1h-1.5zM365 460h1.5v1h-1.5zM362 462h1.5v1h-1.5zM366.5 463.5h1.5v1h-1.5zM365 463.5h1.5v1h-1.5zM363.5 463.5h1.5v1h-1.5zM365 465h1.5v1h-1.5zM365 466.5h1.5v1h-1.5zM366.5 468h1.5v1h-1.5zM365 468h1.5v1h-1.5zM363.5 473h1.5v1h-1.5zM365 474.5h1.5v1h-1.5zM359 476h1.5v1h-1.5zM360.5 478h1.5v1h-1.5zM359 478h1.5v1h-1.5zM366 479.5h1.5v1h-1.5zM363 479.5h1.5v1h-1.5zM366 481h1.5v1h-1.5zM363 481h1.5v1h-1.5zM358.5 481h1.5v1h-1.5zM366 482.5h1.5v1h-1.5zM360 482.5h1.5v1h-1.5zM363 484h1.5v1h-1.5zM361.5 486h1.5v1h-1.5zM360 487.5h1.5v1h-1.5zM366 489h1.5v1h-1.5zM363 489h1.5v1h-1.5zM364.5 490.5h1.5v1h-1.5zM360 490.5h1.5v1h-1.5zM358.5 490.5h1.5v1h-1.5zM363 492h1.5v1h-1.5zM366 494h1.5v1h-1.5zM361.5 494h1.5v1h-1.5zM366 495.5h1.5v1h-1.5zM363 495.5h1.5v1h-1.5zM361.5 495.5h1.5v1h-1.5zM366 497h1.5v1h-1.5zM363 497h1.5v1h-1.5zM361 498.5h1.5v1h-1.5zM365.5 502h1.5v1h-1.5zM364 502h1.5v1h-1.5zM362.5 502h1.5v1h-1.5zM365.5 503.5h1.5v1h-1.5zM364 505h1.5v1h-1.5zM362.5 505h1.5v1h-1.5zM359.5 505h1.5v1h-1.5zM365.5 508h1.5v1h-1.5zM362.5 508h1.5v1h-1.5zM361 510h1.5v1h-1.5zM358 510h1.5v1h-1.5zM365.5 511.5h1.5v1h-1.5zM364 511.5h1.5v1h-1.5zM365.5 513h1.5v1h-1.5zM361 513h1.5v1h-1.5zM364 514.5h1.5v1h-1.5zM359.5 516h1.5v1h-1.5zM363.5 519.5h1.5v1h-1.5zM365 521h1.5v1h-1.5zM363.5 521h1.5v1h-1.5zM362 521h1.5v1h-1.5zM359 521h1.5v1h-1.5zM357.5 521h1.5v1h-1.5zM365 522.5h1.5v1h-1.5zM362 522.5h1.5v1h-1.5zM363.5 526h1.5v1h-1.5zM365 527.5h1.5v1h-1.5zM363.5 527.5h1.5v1h-1.5zM359 527.5h1.5v1h-1.5zM365 530.5h1.5v1h-1.5zM363.5 530.5h1.5v1h-1.5zM360.5 530.5h1.5v1h-1.5zM363.5 532h1.5v1h-1.5zM365 534h1.5v1h-1.5zM362 535.5h1.5v1h-1.5zM359 535.5h1.5v1h-1.5zM364.5 537h1.5v1h-1.5zM363 537h1.5v1h-1.5zM360 537h1.5v1h-1.5zM364.5 538.5h1.5v1h-1.5zM360 538.5h1.5v1h-1.5zM363 540h1.5v1h-1.5zM360 540h1.5v1h-1.5zM358.5 540h1.5v1h-1.5zM364.5 542h1.5v1h-1.5zM363 542h1.5v1h-1.5zM361.5 542h1.5v1h-1.5zM364.5 543.5h1.5v1h-1.5zM361.5 543.5h1.5v1h-1.5zM360 543.5h1.5v1h-1.5zM358.5 543.5h1.5v1h-1.5zM361.5 545h1.5v1h-1.5zM358.5 546.5h1.5v1h-1.5zM361.5 548h1.5v1h-1.5zM360 548h1.5v1h-1.5zM361.5 550h1.5v1h-1.5zM360 550h1.5v1h-1.5zM363 551.5h1.5v1h-1.5zM360 553h1.5v1h-1.5zM360 554.5h1.5v1h-1.5zM358.5 554.5h1.5v1h-1.5zM361 556h1.5v1h-1.5zM362.5 558h1.5v1h-1.5zM359.5 558h1.5v1h-1.5zM362.5 559.5h1.5v1h-1.5zM364 561h1.5v1h-1.5zM362.5 561h1.5v1h-1.5zM364 564h1.5v1h-1.5zM362.5 564h1.5v1h-1.5zM364 566h1.5v1h-1.5zM362.5 566h1.5v1h-1.5zM361 566h1.5v1h-1.5zM361 567.5h1.5v1h-1.5zM364 569h1.5v1h-1.5zM362.5 569h1.5v1h-1.5zM361 569h1.5v1h-1.5zM359.5 569h1.5v1h-1.5zM364 570.5h1.5v1h-1.5zM359.5 570.5h1.5v1h-1.5zM364 572h1.5v1h-1.5zM361 572h1.5v1h-1.5zM359.5 572h1.5v1h-1.5zM364 574h1.5v1h-1.5zM359.5 574h1.5v1h-1.5zM362 575.5h1.5v1h-1.5zM356 575.5h1.5v1h-1.5zM357.5 577h1.5v1h-1.5zM363.5 578.5h1.5v1h-1.5zM362 578.5h1.5v1h-1.5zM359 578.5h1.5v1h-1.5zM359 580h1.5v1h-1.5zM363.5 582h1.5v1h-1.5zM362 582h1.5v1h-1.5zM360.5 582h1.5v1h-1.5zM357.5 582h1.5v1h-1.5zM363.5 583.5h1.5v1h-1.5zM359 583.5h1.5v1h-1.5zM357.5 583.5h1.5v1h-1.5zM362 585h1.5v1h-1.5zM363.5 586.5h1.5v1h-1.5zM362 586.5h1.5v1h-1.5zM359 586.5h1.5v1h-1.5zM363.5 588h1.5v1h-1.5zM360.5 588h1.5v1h-1.5zM363.5 590h1.5v1h-1.5zM362 590h1.5v1h-1.5zM359 590h1.5v1h-1.5zM360.5 591.5h1.5v1h-1.5zM359 591.5h1.5v1h-1.5zM363.5 593h1.5v1h-1.5zM362 593h1.5v1h-1.5zM363 594.5h1.5v1h-1.5zM358.5 594.5h1.5v1h-1.5zM363 596h1.5v1h-1.5zM361.5 596h1.5v1h-1.5zM358.5 598h1.5v1h-1.5zM363 599.5h1.5v1h-1.5zM357 599.5h1.5v1h-1.5zM358.5 601h1.5v1h-1.5zM363 602.5h1.5v1h-1.5zM357 604h1.5v1h-1.5zM363 606h1.5v1h-1.5zM363 607.5h1.5v1h-1.5zM361.5 607.5h1.5v1h-1.5zM361.5 609h1.5v1h-1.5zM361.5 610.5h1.5v1h-1.5zM361.5 612h1.5v1h-1.5zM357 612h1.5v1h-1.5zM361 614h1.5v1h-1.5zM362.5 615.5h1.5v1h-1.5zM362.5 617h1.5v1h-1.5zM358 617h1.5v1h-1.5zM358 618.5h1.5v1h-1.5zM362.5 620h1.5v1h-1.5zM361 620h1.5v1h-1.5zM355 620h1.5v1h-1.5zM361 623.5h1.5v1h-1.5zM359.5 623.5h1.5v1h-1.5zM362.5 625h1.5v1h-1.5zM356.5 625h1.5v1h-1.5zM362.5 626.5h1.5v1h-1.5zM362.5 628h1.5v1h-1.5zM361 628h1.5v1h-1.5zM358 628h1.5v1h-1.5zM361 630h1.5v1h-1.5zM358 630h1.5v1h-1.5zM356.5 631.5h1.5v1h-1.5zM360.5 633h1.5v1h-1.5zM362 634.5h1.5v1h-1.5zM356 634.5h1.5v1h-1.5zM359 638h1.5v1h-1.5zM357.5 638h1.5v1h-1.5zM356 638h1.5v1h-1.5zM354.5 639.5h1.5v1h-1.5zM357.5 641h1.5v1h-1.5zM360.5 642.5h1.5v1h-1.5zM357.5 642.5h1.5v1h-1.5zM356 642.5h1.5v1h-1.5zM359 644h1.5v1h-1.5zM357.5 644h1.5v1h-1.5zM357.5 647.5h1.5v1h-1.5zM356 647.5h1.5v1h-1.5zM362 649h1.5v1h-1.5zM356 649h1.5v1h-1.5zM360.5 650.5h1.5v1h-1.5zM361.5 652h1.5v1h-1.5zM358.5 652h1.5v1h-1.5zM357 652h1.5v1h-1.5zM361.5 654h1.5v1h-1.5zM357 654h1.5v1h-1.5zM361.5 655.5h1.5v1h-1.5zM360 655.5h1.5v1h-1.5zM354 655.5h1.5v1h-1.5zM361.5 657h1.5v1h-1.5zM358.5 657h1.5v1h-1.5zM357 657h1.5v1h-1.5zM361.5 658.5h1.5v1h-1.5zM360 660h1.5v1h-1.5zM358.5 660h1.5v1h-1.5zM358.5 662h1.5v1h-1.5zM361.5 663.5h1.5v1h-1.5zM358.5 663.5h1.5v1h-1.5zM360 665h1.5v1h-1.5zM358.5 666.5h1.5v1h-1.5zM361.5 670h1.5v1h-1.5zM356.5 671.5h1.5v1h-1.5zM361 673h1.5v1h-1.5zM359.5 673h1.5v1h-1.5zM355 673h1.5v1h-1.5zM361 674.5h1.5v1h-1.5zM358 674.5h1.5v1h-1.5zM356.5 674.5h1.5v1h-1.5zM358 676h1.5v1h-1.5zM356.5 676h1.5v1h-1.5zM361 678h1.5v1h-1.5zM359.5 679.5h1.5v1h-1.5zM356.5 679.5h1.5v1h-1.5zM355 679.5h1.5v1h-1.5zM361 681h1.5v1h-1.5zM359.5 681h1.5v1h-1.5zM361 684h1.5v1h-1.5zM359.5 684h1.5v1h-1.5zM359.5 686h1.5v1h-1.5zM361 687.5h1.5v1h-1.5zM355 687.5h1.5v1h-1.5zM353.5 687.5h1.5v1h-1.5zM359 690.5h1.5v1h-1.5zM356 690.5h1.5v1h-1.5zM359 692h1.5v1h-1.5zM357.5 692h1.5v1h-1.5zM360.5 694h1.5v1h-1.5zM357.5 695.5h1.5v1h-1.5zM360.5 697h1.5v1h-1.5zM356 697h1.5v1h-1.5zM354.5 697h1.5v1h-1.5zM360.5 700h1.5v1h-1.5zM357.5 700h1.5v1h-1.5zM360.5 702h1.5v1h-1.5zM360.5 703.5h1.5v1h-1.5zM359 703.5h1.5v1h-1.5zM356 705h1.5v1h-1.5zM360.5 706.5h1.5v1h-1.5zM360 710h1.5v1h-1.5zM358.5 710h1.5v1h-1.5zM355.5 710h1.5v1h-1.5zM360 711.5h1.5v1h-1.5zM357 711.5h1.5v1h-1.5zM355.5 711.5h1.5v1h-1.5zM355.5 713h1.5v1h-1.5zM360 714.5h1.5v1h-1.5zM357 716h1.5v1h-1.5zM354 716h1.5v1h-1.5zM355.5 718h1.5v1h-1.5zM358.5 719.5h1.5v1h-1.5zM357 719.5h1.5v1h-1.5zM360 721h1.5v1h-1.5zM358.5 721h1.5v1h-1.5zM357 721h1.5v1h-1.5zM355.5 722.5h1.5v1h-1.5zM354 722.5h1.5v1h-1.5zM355.5 724h1.5v1h-1.5zM360 727.5h1.5v1h-1.5zM355.5 727.5h1.5v1h-1.5zM354 727.5h1.5v1h-1.5zM359.5 729h1.5v1h-1.5zM355 729h1.5v1h-1.5zM358 730.5h1.5v1h-1.5zM355 732h1.5v1h-1.5zM353.5 734h1.5v1h-1.5zM358 735.5h1.5v1h-1.5zM358 738.5h1.5v1h-1.5zM353.5 738.5h1.5v1h-1.5zM356.5 740h1.5v1h-1.5zM355 740h1.5v1h-1.5zM353.5 740h1.5v1h-1.5zM356.5 743.5h1.5v1h-1.5zM359.5 745h1.5v1h-1.5zM356.5 745h1.5v1h-1.5zM359.5 746.5h1.5v1h-1.5zM358 746.5h1.5v1h-1.5zM356.5 746.5h1.5v1h-1.5zM353.5 746.5h1.5v1h-1.5zM359 748h1.5v1h-1.5zM356 748h1.5v1h-1.5zM354.5 748h1.5v1h-1.5zM354.5 750h1.5v1h-1.5zM357.5 753h1.5v1h-1.5zM356 753h1.5v1h-1.5zM357.5 754.5h1.5v1h-1.5zM357.5 756h1.5v1h-1.5zM356 756h1.5v1h-1.5zM359 758h1.5v1h-1.5zM356 758h1.5v1h-1.5zM359 759.5h1.5v1h-1.5zM357.5 759.5h1.5v1h-1.5zM354.5 759.5h1.5v1h-1.5zM357.5 761h1.5v1h-1.5zM354.5 761h1.5v1h-1.5zM353 761h1.5v1h-1.5zM357.5 762.5h1.5v1h-1.5zM356 762.5h1.5v1h-1.5zM353 762.5h1.5v1h-1.5zM357.5 764h1.5v1h-1.5zM356 764h1.5v1h-1.5zM355.5 767.5h1.5v1h-1.5zM357 769h1.5v1h-1.5zM357 770.5h1.5v1h-1.5zM358.5 772h1.5v1h-1.5zM354 774h1.5v1h-1.5zM354 775.5h1.5v1h-1.5zM357 777h1.5v1h-1.5zM358.5 778.5h1.5v1h-1.5zM355.5 778.5h1.5v1h-1.5zM352.5 778.5h1.5v1h-1.5zM358.5 780h1.5v1h-1.5zM352.5 782h1.5v1h-1.5zM351 782h1.5v1h-1.5zM357 783.5h1.5v1h-1.5zM355.5 783.5h1.5v1h-1.5zM357 785h1.5v1h-1.5zM355.5 785h1.5v1h-1.5zM358 786.5h1.5v1h-1.5zM356.5 786.5h1.5v1h-1.5zM355 788h1.5v1h-1.5zM358 790h1.5v1h-1.5zM355 790h1.5v1h-1.5zM353.5 791.5h1.5v1h-1.5zM356.5 793h1.5v1h-1.5zM353.5 793h1.5v1h-1.5zM356.5 794.5h1.5v1h-1.5zM353.5 794.5h1.5v1h-1.5zM350.5 794.5h1.5v1h-1.5zM355 796h1.5v1h-1.5zM355 798h1.5v1h-1.5zM352 798h1.5v1h-1.5zM358 799.5h1.5v1h-1.5zM356.5 799.5h1.5v1h-1.5zM353.5 799.5h1.5v1h-1.5zM355 801h1.5v1h-1.5zM353.5 801h1.5v1h-1.5zM358 802.5h1.5v1h-1.5zM355 802.5h1.5v1h-1.5zM356.5 804h1.5v1h-1.5zM355 804h1.5v1h-1.5zM354.5 806h1.5v1h-1.5zM356 807.5h1.5v1h-1.5z"/>
<path fill="#7a7a66" d="M374 299h1v1h-1zM374 300h1v1h-1zM374 305h1v1h-1zM374 310h1v1h-1zM374 311h1v1h-1zM373 316h1v1h-1zM373 319h1v1h-1zM373 321h1v1h-1zM373 329h1v1h-1zM373 332h1v1h-1zM373 334h1v1h-1zM373 342h1v1h-1zM372 355h1v1h-1zM371 399h1v1h-1zM371 419h1v1h-1zM371 420h1v1h-1zM371 425h1v1h-1zM371 428h1v1h-1zM370 438h1v1h-1zM370 439h1v1h-1zM370 443h1v1h-1zM370 454h1v1h-1zM370 462h1v1h-1zM370 467h1v1h-1zM369 487h1v1h-1zM369 491h1v1h-1zM369 492h1v1h-1zM369 494h1v1h-1zM369 500h1v1h-1zM369 507h1v1h-1zM368 515h1v1h-1zM368 518h1v1h-1zM368 523h1v1h-1zM368 527h1v1h-1zM368 532h1v1h-1zM368 543h1v1h-1zM368 545h1v1h-1zM367 548h1v1h-1zM367 550h1v1h-1zM367 555h1v1h-1zM367 577h1v1h-1zM367 583h1v1h-1zM366 596h1v1h-1zM366 614h1v1h-1zM366 617h1v1h-1zM366 622h1v1h-1zM365 623h1v1h-1zM365 625h1v1h-1zM365 647h1v1h-1zM365 651h1v1h-1zM365 652h1v1h-1zM365 654h1v1h-1zM364 668h1v1h-1zM364 673h1v1h-1zM364 675h1v1h-1zM364 678h1v1h-1zM364 684h1v1h-1zM364 686h1v1h-1zM364 697h1v1h-1zM363 705h1v1h-1zM363 708h1v1h-1zM363 715h1v1h-1zM363 718h1v1h-1zM363 719h1v1h-1zM363 721h1v1h-1zM363 724h1v1h-1zM363 729h1v1h-1zM362 739h1v1h-1zM362 751h1v1h-1zM362 753h1v1h-1zM362 761h1v1h-1zM362 774h1v1h-1zM361 788h1v1h-1zM361 795h1v1h-1zM361 796h1v1h-1zM361 806h1v1h-1z"/>
<path fill="#262626" d="M602 253h1v1h-1zM538 210h1v1h-1zM679 290h1v1h-1zM546 219h1v1h-1zM632 246h1v1h-1zM676 290h1v1h-1zM577 239h1v1h-1zM698 291h1v1h-1zM570 226h1v1h-1zM635 265h1v1h-1zM600 240h1v1h-1zM681 285h1v1h-1zM652 263h1v1h-1zM563 217h1v1h-1zM617 251h1v1h-1zM606 235h1v1h-1zM643 263h1v1h-1zM587 237h1v1h-1zM658 274h1v1h-1zM576 237h1v1h-1zM624 248h1v1h-1zM618 249h1v1h-1zM586 242h1v1h-1zM592 233h1v1h-1zM577 219h1v1h-1zM584 246h1v1h-1zM544 209h1v1h-1zM673 279h1v1h-1zM671 278h1v1h-1zM678 278h1v1h-1zM651 270h1v1h-1zM633 264h1v1h-1zM663 272h1v1h-1zM589 233h1v1h-1zM544 221h1v1h-1zM536 215h1v1h-1zM688 289h1v1h-1zM633 261h1v1h-1zM518 212h1v1h-1zM673 296h1v1h-1zM653 268h1v1h-1zM571 224h1v1h-1zM663 280h1v1h-1zM538 217h1v1h-1zM624 249h1v1h-1z"/>
<path fill="#1c1c1c" d="M671 140h1v1h-1zM621 226h1v1h-1zM665 177h1v1h-1zM539 265h1v1h-1zM477 184h1v1h-1zM654 235h1v1h-1zM547 118h1v1h-1zM629 192h1v1h-1zM471 186h1v1h-1zM441 271h1v1h-1zM639 294h1v1h-1zM602 145h1v1h-1zM527 299h1v1h-1zM400 178h1v1h-1zM445 147h1v1h-1zM483 230h1v1h-1zM420 275h1v1h-1zM529 147h1v1h-1zM430 212h1v1h-1zM505 208h1v1h-1zM432 181h1v1h-1zM552 131h1v1h-1zM550 271h1v1h-1zM577 139h1v1h-1zM589 130h1v1h-1zM443 117h1v1h-1zM559 148h1v1h-1zM484 137h1v1h-1zM669 142h1v1h-1zM602 264h1v1h-1z"/>
<path d="M372.4 300 L359.2 809" stroke="#d4d45a" stroke-width="1.5" fill="none"/>
<path d="M371.4 311.3 L1460 330.5" stroke="#d88e8e" stroke-width="1.7" fill="none" shape-rendering="crispEdges"/>
<path d="M429.5 296 L384.8 809" stroke="#d88e8e" stroke-width="1.7" fill="none" shape-rendering="crispEdges"/>
<rect x="24" y="807.6" width="1436" height="1.4" fill="#262626"/>
<g fill="none" stroke-width="1">
 <path d="M56.5 776 V744.7 H53 L60.5 737 L68 744.7 H63.5 V769.5" stroke="#8f9f5a" stroke-width="1.2"/>
 <path d="M56.5 776.6 H88 V781 L96 773.3 L88 765.6 V769.5 H63.5" stroke="#6e2020" stroke-width="1.8"/>
</g>
<circle cx="474.3" cy="138.6" r="34" fill="#c4c402"/>
<path d="M474.5 140 V163.5 L480.3 157.9 L484.6 166.6 L488.6 164.7 L484.4 156.3 H492z" fill="#fff" stroke="#000" stroke-width="1.3" stroke-linejoin="round"/>
</g>
</svg>


<svg class="ico" width="60" height="21" viewBox="0 0 60 21" style="left:0;top:0">
 <path d="M0 0 H2.5 L0 2.5z" fill="#444"/>
 <rect x="0.4" y="1.8" width="16.4" height="17.7" rx="4.8" fill="#7ba7d4"/>
 <path d="M11.4 5.6 L6.4 10.8 L11.4 16" fill="none" stroke="#fff" stroke-width="3.1" stroke-linejoin="miter"/>
 <path d="M30 5.3 A5.5 5.5 0 0 0 22.5 12.5" fill="none" stroke="#d0d0d0" stroke-width="0.7" stroke-dasharray="1 0.6"/>
 <rect x="26" y="7.8" width="7" height="7.7" rx="0.6" fill="#a9bccf"/>
 <rect x="27.3" y="8.6" width="4.2" height="2.6" fill="#eef3f8"/>
 <rect x="27.5" y="12.3" width="3.8" height="3" fill="#d6e0ea"/>
 <rect x="38.6" y="7.6" width="3.8" height="1.1" fill="#111"/>
 <path d="M38.4 9.8 H42.6 L40.5 12.6z" fill="#111"/>
</svg>
<div class="abs" style="left:680px;top:6.4px;width:50px;text-align:center;font-size:8.2px;line-height:10px;color:#000;text-shadow:0.35px 0 0 #000">Floor Plan</div>
<svg class="ico" width="12" height="12" viewBox="0 0 12 12" style="left:1449px;top:3.5px">
 <path d="M3 2.5 L10 9.5 M10 2.5 L3 9.5" stroke="#222" stroke-width="1.1"/>
</svg>
<div class="abs" style="left:19px;top:22.5px;width:35.5px;height:15px;background:#fbfbfb;border:1px solid #dadada;border-bottom:none"></div>
<div class="abs" style="left:19px;top:23.6px;width:35.5px;text-align:center;font-size:8.6px;line-height:10px;color:#1a1a1a;text-shadow:0.3px 0 0 #1a1a1a">Main</div>
<div class="abs" style="left:743px;top:51.8px;font-size:8.2px;line-height:10px;color:#1f1f1f;white-space:nowrap;text-shadow:0.3px 0 0 #1f1f1f">Gap to Connect</div>
<div class="abs" style="left:802.2px;top:47.2px;width:42.6px;height:15.4px;background:#f2f2f2;border:1px solid #cfcfcf"></div>
<div class="abs" style="left:803.8px;top:51.8px;font-size:8.2px;line-height:10px;color:#1f1f1f;white-space:nowrap;text-shadow:0.3px 0 0 #1f1f1f">0.2 m</div>
<div class="abs" style="left:758px;top:67.2px;font-size:8.2px;line-height:10px;color:#1f1f1f;white-space:nowrap;text-shadow:0.3px 0 0 #1f1f1f">Auto Advance</div>


<svg class="ico" width="24" height="809" viewBox="0 0 24 809" style="left:0;top:0">
 <rect x="0" y="101" width="24" height="708" fill="#8e8e8e"/>
 <rect x="0" y="101" width="1.3" height="708" fill="#9c9c9c"/>
 <rect x="1.3" y="105" width="0.8" height="704" fill="#7c7c7c"/>
 <rect x="21.2" y="105" width="0.8" height="704" fill="#7c7c7c"/>
 <rect x="22" y="101" width="1.6" height="708" fill="#c6c6c6"/>
 <rect x="23.6" y="101" width="0.4" height="708" fill="#8a8a8a"/>
 <rect x="1.3" y="102.4" width="22" height="1.3" fill="#f6f6f6"/>
 <rect x="1.3" y="103.7" width="20.7" height="1.3" fill="#2c2c2c"/>
 <rect x="1.3" y="614.7" width="20.7" height="1.9" fill="#565656"/>
 <rect x="1.3" y="616.6" width="20.7" height="1.6" fill="#e4e4e4"/>
 <rect x="3" y="618.3" width="18" height="11.3" fill="#4a4a4a"/>
 <rect x="1.3" y="629.6" width="20.7" height="1.4" fill="#d6d6d6"/>
 <rect x="1.3" y="631" width="20.4" height="85" fill="#fdfda0"/>
 <rect x="1.3" y="716" width="20.7" height="1.2" fill="#222"/>
 <rect x="1.3" y="717.2" width="20.7" height="1.1" fill="#e6e6e6"/>
 <rect x="3" y="718.3" width="18" height="11.2" fill="#4a4a4a"/>
 <rect x="1.3" y="729.5" width="20.7" height="1.5" fill="#dadada"/>
 <rect x="1.3" y="731" width="20.7" height="1.5" fill="#5a5a5a"/>
 <rect x="1.3" y="807" width="20.7" height="1" fill="#c8c8c8"/>
 <rect x="1.3" y="808" width="20.7" height="1" fill="#7a7a7a"/>
 <path d="M8.6 621.2 H15 L11.8 626z" fill="#0a0a0a"/>
 <path d="M8.6 726.9 H15 L11.8 721.6z" fill="#0a0a0a"/>
</svg>

</body></html>
